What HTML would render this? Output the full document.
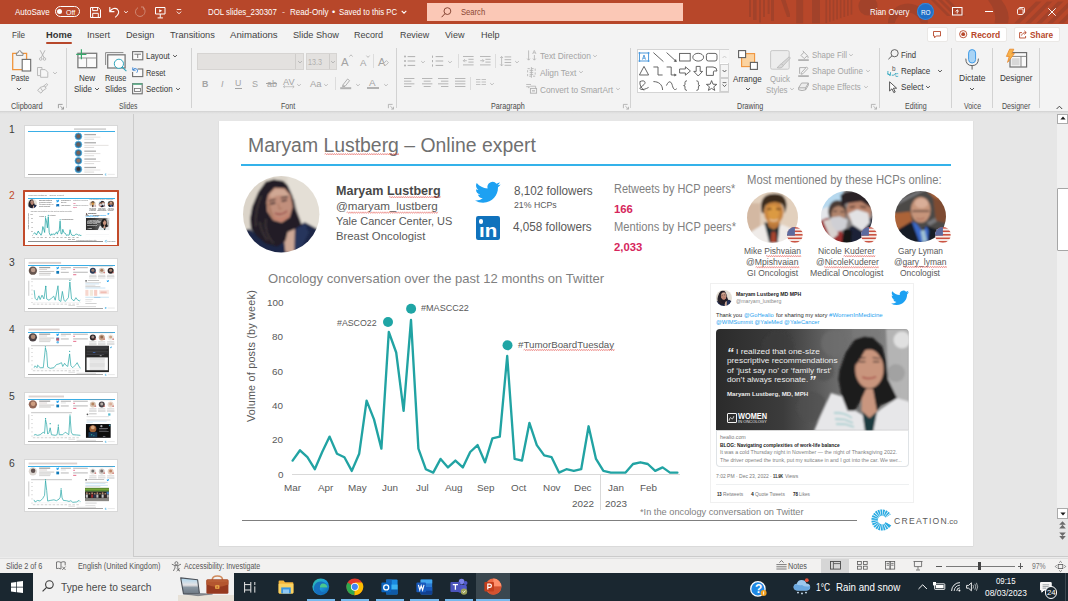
<!DOCTYPE html>
<html lang="en"><head><meta charset="utf-8"><title>DOL slides_230307 - PowerPoint</title>
<style>
html,body{margin:0;padding:0;}
body{width:1068px;height:601px;overflow:hidden;position:relative;background:#e6e6e6;font-family:"Liberation Sans",sans-serif;}
.t{position:absolute;white-space:nowrap;line-height:1;transform-origin:0 50%;}
.r{position:absolute;display:block;}
svg{overflow:visible;}
.th .t{-webkit-text-stroke:0.5px currentColor;opacity:0.72;}
</style></head>
<body>
<div class="r" style="left:0px;top:112px;width:1068px;height:446px;background:#e6e6e6;"></div>
<div class="r" style="left:0px;top:0px;width:1068px;height:23.5px;background:#b7472a;"></div>
<div class="r" style="left:0px;top:23.5px;width:1068px;height:88px;background:#f3f3f3;"></div>
<div class="r" style="left:0px;top:111.3px;width:1068px;height:3px;background:linear-gradient(#cfcfcf,#dcdcdc 35%,#e6e6e6);"></div>
<div class="r" style="left:133.2px;top:114px;width:1px;height:443px;background:#cbcbcb;"></div>
<div class="r" style="left:133.2px;top:556px;width:935px;height:0.9px;background:#cbcbcb;"></div>
<div class="r" style="left:0px;top:557px;width:1068px;height:1.6px;background:#ececec;"></div>
<div class="r" style="left:219px;top:121.2px;width:754.2px;height:425px;background:#fff;box-shadow:0 0.4px 0 0.4px #d8d8d8"></div>
<div class="r" style="left:1057px;top:113.5px;width:11px;height:395px;background:#f0f0f0;"></div>
<div class="r" style="left:1057.3px;top:113.5px;width:11px;height:10.2px;background:#fff;border:0.8px solid #ababab;box-sizing:border-box"></div>
<svg class="r" style="left:1059.6px;top:116.4px;" width="6" height="4" viewBox="0 0 6 4"><path d="M0.4 3.6 L3 0.6 L5.6 3.6 Z" fill="#1a1a1a"/></svg>
<div class="r" style="left:1057.3px;top:187.5px;width:11.5px;height:63.6px;background:#fff;border:0.9px solid #a6a6a6;box-sizing:border-box;border-radius:1px"></div>
<div class="r" style="left:1057.3px;top:508.2px;width:11px;height:10.6px;background:#fff;border:0.8px solid #ababab;box-sizing:border-box"></div>
<svg class="r" style="left:1059.6px;top:511.6px;" width="6" height="4" viewBox="0 0 6 4"><path d="M0.4 0.4 L3 3.4 L5.6 0.4 Z" fill="#1a1a1a"/></svg>
<svg class="r" style="left:1059.3px;top:521.4px;" width="7" height="7.6" viewBox="0 0 7 7.6"><path d="M0.2 3.8 L3.5 0.2 L6.8 3.8 Z M0.2 7.4 L3.5 3.8 L6.8 7.4 Z" fill="#6a6a6a"/></svg>
<svg class="r" style="left:1059.3px;top:532.4px;" width="7" height="8" viewBox="0 0 7 8"><path d="M0.2 0.4 L3.5 4 L6.8 0.4 Z M0.2 4 L3.5 7.8 L6.8 4 Z" fill="#6a6a6a"/></svg>
<div class="r" style="left:0px;top:558.5px;width:1068px;height:14.5px;background:#f2f1f0;"></div>
<div class="r" style="left:0px;top:558.3px;width:1068px;height:0.7px;background:#dedede;"></div>
<div class="r" style="left:0px;top:573px;width:1068px;height:28px;background:#1a2730;"></div>
<svg class="r" style="left:0;top:0" width="1068" height="23.5" viewBox="0 0 1068 23.5"><defs><clipPath id="tbc"><rect x="0" y="0" width="1068" height="23.5"/></clipPath></defs><g fill="#9f422b" opacity="0.85" clip-path="url(#tbc)"><rect x="749" y="0" width="2" height="17"/><rect x="753" y="0" width="3.6" height="20"/><rect x="759" y="0" width="2" height="22.5"/><rect x="763" y="0" width="2" height="17"/><rect x="767.6" y="0" width="2" height="14"/><rect x="771" y="0" width="3" height="21"/><path d="M781 0 H785.5 L790 14 V17 H787 Z"/><rect x="796.2" y="0" width="7" height="23.5"/><rect x="812" y="0" width="8" height="23.5"/><rect x="825.4" y="0" width="1.7" height="23.0"/><rect x="829" y="0" width="1.7" height="21.8"/><rect x="832.6" y="0" width="1.7" height="20.6"/><rect x="836.2" y="0" width="1.7" height="19.4"/><rect x="839.8" y="0" width="1.7" height="18.2"/><rect x="843.4" y="0" width="1.7" height="17.0"/><rect x="847" y="0" width="1.7" height="15.8"/><rect x="850.6" y="0" width="1.7" height="14.6"/><circle cx="868" cy="6" r="9.6"/><path d="M888 23.5 A 20 20 0 0 1 928 23.5 H 921 A 13.5 13.5 0 0 0 894.5 23.5 Z"/><path d="M931 0 H935 L951 16 H947 Z"/><path d="M938 0 H942 L958 16 H954 Z"/><path d="M945 0 H949 L965 16 H961 Z"/><path d="M988 0 H1001.5 Q1011 12 1008 23.5 H994.5 Q997.5 12 988 0 Z"/><path d="M1014 23.5 L1036 1.5 H1041.5 L1019.5 23.5 Z"/><path d="M1025 23.5 L1047 1.5 H1052.5 L1030.5 23.5 Z"/><path d="M1036 23.5 L1058 1.5 H1063.5 L1041.5 23.5 Z"/><path d="M1047 23.5 L1069 1.5 H1074.5 L1052.5 23.5 Z"/><path d="M1058 23.5 L1080 1.5 H1085.5 L1063.5 23.5 Z"/><path d="M1069 23.5 L1091 1.5 H1096.5 L1074.5 23.5 Z"/></g></svg>
<span class="t" style="left:14.50px;top:8px;font-size:9.1px;color:#fff;transform:matrix(0.8793,0.0001,0,1,0,0.10);">AutoSave</span>
<div class="r" style="left:54.5px;top:6.2px;width:25px;height:10.4px;border:1px solid #fff;border-radius:6px;box-sizing:border-box"></div>
<div class="r" style="left:57.3px;top:8.9px;width:5px;height:5px;border-radius:50%;background:#fff"></div>
<span class="t" style="left:66.30px;top:8px;font-size:7.8px;color:#fff;transform:matrix(0.9064,0.0001,0,1,0,0.70);">Off</span>
<svg class="r" style="left:89.5px;top:6.8px;" width="11" height="11" viewBox="0 0 11 11"><path d="M0.5 0.5 H8.3 L10.5 2.7 V10.5 H0.5 Z M2.7 0.5 V3.6 H7.6 V0.5 M2.7 10.5 V6.3 H8.3 V10.5" fill="none" stroke="#fff" stroke-width="1"/></svg>
<svg class="r" style="left:109px;top:6.3px;" width="11" height="12" viewBox="0 0 11 12"><path d="M0.8 1 V5.6 H5.4 M1 5.4 C3 2.3 6.3 1.6 8.4 3.3 C10.6 5.2 10.2 8.4 6.2 11.4" fill="none" stroke="#fff" stroke-width="1.1"/></svg>
<svg class="r" style="left:121.8px;top:7.800000000000001px" width="8" height="8" viewBox="-4 -4 8 8"><path d="M-1.8 -0.9 L0 0.9 L1.8 -0.9" fill="none" stroke="#fff" stroke-width="0.9"/></svg>
<svg class="r" style="left:135px;top:6.3px;" width="11" height="12" viewBox="0 0 11 12"><path d="M6 1 H8.6 V3.6 M8.4 1.4 C10.5 3.3 10.7 7.2 8 9.4 C5.6 11.3 2 10.4 0.8 7.6 C-0.1 5.2 1 2.8 3 1.7" fill="none" stroke="#d08a76" stroke-width="1"/></svg>
<svg class="r" style="left:155px;top:6.5px;" width="10.5" height="11.5" viewBox="0 0 10.5 11.5"><path d="M0.5 0.5 H10 V7 H0.5 Z M5.25 7 V10.6 M2.6 10.9 H7.9" fill="none" stroke="#fff" stroke-width="1"/><path d="M4.2 2.2 L7.2 3.8 L4.2 5.4 Z" fill="#fff"/></svg>
<svg class="r" style="left:176.3px;top:9.4px;" width="6" height="6" viewBox="0 0 6 6"><path d="M0.8 0.5 H5.2" stroke="#fff" stroke-width="0.9"/><path d="M0.8 2.6 L3 4.8 L5.2 2.6" fill="none" stroke="#fff" stroke-width="0.9"/></svg>
<span class="t" style="left:208.30px;top:8px;font-size:9.1px;color:#fff;transform:matrix(0.8656,0.0001,0,1,0,0.10);">DOL slides_230307</span>
<span class="t" style="left:282.20px;top:8px;font-size:9.1px;color:#f0cfc5;transform:matrix(1.0000,0.0001,0,1,0,0.10);">-</span>
<span class="t" style="left:289.60px;top:8px;font-size:9.1px;color:#fff;transform:matrix(0.8874,0.0001,0,1,0,0.10);">Read-Only</span>
<span class="t" style="left:331.50px;top:8px;font-size:9.1px;color:#fff;transform:matrix(1.0000,0.0001,0,1,0,0.10);">•</span>
<span class="t" style="left:338.80px;top:8px;font-size:9.1px;color:#fff;transform:matrix(0.8587,0.0001,0,1,0,0.10);">Saved to this PC</span>
<svg class="r" style="left:400.3px;top:8px" width="8" height="8" viewBox="-4 -4 8 8"><path d="M-2.3 -1.15 L0 1.15 L2.3 -1.15" fill="none" stroke="#fff" stroke-width="1.1"/></svg>
<div class="r" style="left:427px;top:3px;width:256px;height:18px;background:#fbc8b6;"></div>
<svg class="r" style="left:440.5px;top:6.5px;" width="10.5" height="11" viewBox="0 0 10.5 11"><circle cx="6.4" cy="4.1" r="3.4" fill="none" stroke="#7c3a28" stroke-width="0.9"/><path d="M4 6.6 L0.6 10.2" stroke="#7c3a28" stroke-width="1"/></svg>
<span class="t" style="left:460.80px;top:8px;font-size:9.1px;color:#8a4733;transform:matrix(0.8393,0.0001,0,1,0,0.10);">Search</span>
<span class="t" style="left:869.80px;top:8px;font-size:9.1px;color:#fff;transform:matrix(0.8657,0.0001,0,1,0,0.10);">Rian Overy</span>
<div class="r" style="left:916.8px;top:3.2px;width:17px;height:17px;border-radius:50%;background:#1f6fc6;box-shadow:inset 0 0 0 1px #3f86d2"></div>
<span class="t" style="left:920.60px;top:9px;font-size:6.8px;color:#fff;transform:matrix(0.9412,0.0001,0,1,0,0.60);">RO</span>
<svg class="r" style="left:951.5px;top:7.2px;" width="10.5" height="8.5" viewBox="0 0 10.5 8.5"><rect x="0.5" y="0.5" width="9.5" height="7.5" fill="none" stroke="#fff" stroke-width="1"/><path d="M5.25 6.4 V3 M3.6 4.5 L5.25 2.9 L6.9 4.5" fill="none" stroke="#fff" stroke-width="0.9"/></svg>
<div class="r" style="left:985.2px;top:11.1px;width:7.6px;height:1px;background:#fff;"></div>
<svg class="r" style="left:1016.6px;top:7.4px;" width="8" height="8" viewBox="0 0 8 8"><rect x="0.5" y="1.9" width="5.6" height="5.6" rx="1" fill="none" stroke="#fff" stroke-width="0.9"/><path d="M2 1.9 V1.4 Q2 0.5 3 0.5 H6.6 Q7.5 0.5 7.5 1.5 V5 Q7.5 6 6.5 6 H6.1" fill="none" stroke="#fff" stroke-width="0.9"/></svg>
<svg class="r" style="left:1048.4px;top:7.6px;" width="8" height="8" viewBox="0 0 8 8"><path d="M0.3 0.3 L7.7 7.7 M7.7 0.3 L0.3 7.7" stroke="#fff" stroke-width="0.95"/></svg>
<span class="t" style="left:11.80px;top:30px;font-size:9.4px;color:#444;transform:matrix(0.8715,0.0001,0,1,0,0.00);">File</span>
<span class="t" style="left:87.00px;top:30px;font-size:9.4px;color:#444;transform:matrix(0.9868,0.0001,0,1,0,0.00);">Insert</span>
<span class="t" style="left:126.00px;top:30px;font-size:9.4px;color:#444;transform:matrix(0.9740,0.0001,0,1,0,0.00);">Design</span>
<span class="t" style="left:170.00px;top:30px;font-size:9.4px;color:#444;transform:matrix(0.9863,0.0001,0,1,0,0.00);">Transitions</span>
<span class="t" style="left:230.00px;top:30px;font-size:9.4px;color:#444;transform:matrix(1.0280,0.0001,0,1,0,0.00);">Animations</span>
<span class="t" style="left:292.80px;top:30px;font-size:9.4px;color:#444;transform:matrix(0.9781,0.0001,0,1,0,0.00);">Slide Show</span>
<span class="t" style="left:354.00px;top:30px;font-size:9.4px;color:#444;transform:matrix(0.9636,0.0001,0,1,0,0.00);">Record</span>
<span class="t" style="left:399.50px;top:30px;font-size:9.4px;color:#444;transform:matrix(0.9474,0.0001,0,1,0,0.00);">Review</span>
<span class="t" style="left:445.00px;top:30px;font-size:9.4px;color:#444;transform:matrix(0.9651,0.0001,0,1,0,0.00);">View</span>
<span class="t" style="left:480.80px;top:30px;font-size:9.4px;color:#444;transform:matrix(0.9673,0.0001,0,1,0,0.00);">Help</span>
<span class="t" style="left:46.00px;top:30px;font-size:9.4px;color:#333;transform:matrix(0.9955,0.0001,0,1,0,0.00);font-weight:700;">Home</span>
<div class="r" style="left:46px;top:42.2px;width:26px;height:1.8px;background:#b7472a;border-radius:1px"></div>
<div class="r" style="left:926.8px;top:27px;width:21px;height:15px;background:#fff;border:0.8px solid #eae8e6;border-radius:2px;box-sizing:border-box"></div>
<svg class="r" style="left:933.4px;top:30.6px;" width="8" height="7.6" viewBox="0 0 8 7.6"><path d="M0.5 0.5 H7.5 V5 H3.2 L1.6 6.8 V5 H0.5 Z" fill="none" stroke="#b7472a" stroke-width="0.9"/></svg>
<div class="r" style="left:954.8px;top:27px;width:52px;height:15px;background:#fff;border:0.8px solid #eae8e6;border-radius:2px;box-sizing:border-box"></div>
<svg class="r" style="left:959.4px;top:30.3px;" width="8.4" height="8.4" viewBox="0 0 8.4 8.4"><circle cx="4.2" cy="4.2" r="3.6" fill="none" stroke="#b7472a" stroke-width="0.9"/><circle cx="4.2" cy="4.2" r="1.9" fill="#b7472a"/></svg>
<span class="t" style="left:971.00px;top:30px;font-size:9.4px;color:#b7472a;transform:matrix(0.9047,0.0001,0,1,0,0.00);font-weight:700;">Record</span>
<div class="r" style="left:1013.5px;top:27px;width:46.3px;height:15px;background:#fff;border:0.8px solid #eae8e6;border-radius:2px;box-sizing:border-box"></div>
<svg class="r" style="left:1018.6px;top:30.2px;" width="8.4" height="8.6" viewBox="0 0 8.4 8.6"><path d="M3 2.6 H0.6 V8 H6.6 V6" fill="none" stroke="#b7472a" stroke-width="0.9"/><path d="M2.6 5.6 C3 3.6 4.6 2.6 7 2.6 M5.3 0.8 L7.3 2.6 L5.3 4.4" fill="none" stroke="#b7472a" stroke-width="0.9"/></svg>
<span class="t" style="left:1029.80px;top:30px;font-size:9.4px;color:#b7472a;transform:matrix(0.8880,0.0001,0,1,0,0.00);font-weight:700;">Share</span>
<svg class="r" style="left:12px;top:49.6px;" width="19.4" height="21.6" viewBox="0 0 19.4 21.6"><path d="M4.6 3.4 H0.7 V19.6 H10" fill="none" stroke="#f0943c" stroke-width="1.3"/><path d="M10.6 3.4 H14.6 V9" fill="none" stroke="#f0943c" stroke-width="1.3"/><path d="M4.4 5.4 V3 H6 Q6 0.7 7.7 0.7 Q9.4 0.7 9.4 3 H11 V5.4 Z" fill="#f8f8f8" stroke="#7a7a7a" stroke-width="0.9"/><rect x="10.2" y="9.4" width="8.5" height="11.6" fill="#fff" stroke="#6a6a6a" stroke-width="1.1"/></svg>
<span class="t" style="left:11.00px;top:74px;font-size:8.6px;color:#383838;transform:matrix(0.8276,0.0001,0,1,0,0.30);">Paste</span>
<svg class="r" style="left:15.399999999999999px;top:84.6px" width="8" height="8" viewBox="-4 -4 8 8"><path d="M-2.1 -1.05 L0 1.05 L2.1 -1.05" fill="none" stroke="#555" stroke-width="1"/></svg>
<svg class="r" style="left:38.8px;top:50.4px;" width="7.2" height="10.8" viewBox="0 0 7.2 10.8"><path d="M1.2 0.3 L5.2 8 M6 0.3 L2 8" fill="none" stroke="#b0b0b0" stroke-width="0.9"/><circle cx="1.7" cy="9" r="1.3" fill="none" stroke="#b0b0b0" stroke-width="0.8"/><circle cx="5.5" cy="9" r="1.3" fill="none" stroke="#b0b0b0" stroke-width="0.8"/></svg>
<svg class="r" style="left:36.8px;top:67px;" width="11.4" height="10.8" viewBox="0 0 11.4 10.8"><path d="M3.4 8.6 H0.5 V0.5 H5 V2.4" fill="none" stroke="#b4b4b4" stroke-width="0.9"/><path d="M3.6 2.6 H8.2 L10.8 5.2 V10.3 H3.6 Z" fill="#f6f6f6" stroke="#b4b4b4" stroke-width="0.9"/></svg>
<svg class="r" style="left:50.8px;top:68.6px" width="8" height="8" viewBox="-4 -4 8 8"><path d="M-1.9 -0.95 L0 0.95 L1.9 -0.95" fill="none" stroke="#b8b8b8" stroke-width="0.9"/></svg>
<svg class="r" style="left:37.2px;top:83px;" width="11.4" height="10.8" viewBox="0 0 11.4 10.8"><path d="M6.4 3.2 L9.8 0.6 L10.8 1.8 L7.8 4.6 M3.2 4.4 L7.6 3 L9.2 5.4 L5.6 8 Z M3.2 4.6 L0.6 7.4 L4 10.2 L5.8 8" fill="none" stroke="#b4b4b4" stroke-width="0.9"/></svg>
<span class="t" style="left:11.30px;top:102px;font-size:8.6px;color:#4c4c4c;transform:matrix(0.8612,0.0001,0,1,0,0.00);">Clipboard</span>
<svg class="r" style="left:58.1px;top:103.5px;" width="6" height="5.4" viewBox="0 0 6 5.4"><path d="M0.4 4.2 V0.4 H4.6" fill="none" stroke="#8a8a8a" stroke-width="0.8"/><path d="M2.4 2.2 L5.4 5 M5.5 2.8 V5.1 H3.2" fill="none" stroke="#8a8a8a" stroke-width="0.8"/></svg>
<div class="r" style="left:66.0px;top:48.2px;width:1px;height:60.2px;background:#d2d2d2;"></div>
<svg class="r" style="left:75.6px;top:48.6px;" width="21.4" height="19.4" viewBox="0 0 21.4 19.4"><rect x="1.9" y="4.3" width="18.8" height="14.4" fill="#fafafa" stroke="#7a7a7a" stroke-width="1.3"/><path d="M2 9 H20.6 M10.6 9 V18.6" stroke="#8a8a8a" stroke-width="0.9" fill="none"/><rect x="0" y="0" width="10.6" height="10.4" fill="#f3f3f3" opacity="0.0"/><path d="M5.4 0.3 V10.2 M0.2 5.4 H10.4" stroke="#36a86b" stroke-width="1.2" fill="none"/></svg>
<span class="t" style="left:78.90px;top:74px;font-size:8.6px;color:#383838;transform:matrix(0.9416,0.0001,0,1,0,0.30);">New</span>
<span class="t" style="left:73.80px;top:85px;font-size:8.6px;color:#383838;transform:matrix(0.9360,0.0001,0,1,0,0.30);">Slide</span>
<svg class="r" style="left:92.5px;top:84.6px" width="8" height="8" viewBox="-4 -4 8 8"><path d="M-2 -1.0 L0 1.0 L2 -1.0" fill="none" stroke="#555" stroke-width="1"/></svg>
<svg class="r" style="left:105.4px;top:51.6px;" width="22" height="19.6" viewBox="0 0 22 19.6"><path d="M0.6 13 V0.6 H18.4" fill="none" stroke="#8a8a8a" stroke-width="1"/><rect x="2.7" y="2.8" width="17.4" height="13.2" fill="#fafafa" stroke="#7a7a7a" stroke-width="1.3"/><circle cx="13.9" cy="11.8" r="4.6" fill="#fff" stroke="#2ea6bd" stroke-width="1"/><path d="M17.2 15.2 L21.4 19.2" stroke="#2ea6bd" stroke-width="1.1"/></svg>
<span class="t" style="left:104.90px;top:74px;font-size:8.6px;color:#383838;transform:matrix(0.8568,0.0001,0,1,0,0.30);">Reuse</span>
<span class="t" style="left:104.90px;top:85px;font-size:8.6px;color:#383838;transform:matrix(0.9093,0.0001,0,1,0,0.30);">Slides</span>
<svg class="r" style="left:132.2px;top:50.5px;" width="11.4" height="9.4" viewBox="0 0 11.4 9.4"><rect x="0.6" y="0.6" width="10.2" height="8.2" fill="#fafafa" stroke="#6e6e6e" stroke-width="1.1"/><path d="M2.4 3.2 H9 M5.7 3.2 V7" stroke="#6e6e6e" stroke-width="0.9" fill="none"/></svg>
<span class="t" style="left:146.30px;top:52px;font-size:8.6px;color:#383838;transform:matrix(0.9217,0.0001,0,1,0,0.10);">Layout</span>
<svg class="r" style="left:171px;top:51.6px" width="8" height="8" viewBox="-4 -4 8 8"><path d="M-1.9 -0.95 L0 0.95 L1.9 -0.95" fill="none" stroke="#555" stroke-width="1"/></svg>
<svg class="r" style="left:132.2px;top:66.6px;" width="11.4" height="10.2" viewBox="0 0 11.4 10.2"><rect x="0.6" y="2" width="10.2" height="7.6" fill="#fafafa" stroke="#6e6e6e" stroke-width="1.1"/><rect x="0" y="0" width="5.6" height="5" fill="#f3f3f3"/><path d="M0.8 0.4 V3.2 H3.6 M1 3 C2 1 4.6 1 5.4 3 C5.8 4.2 5.4 5 4.6 5.8" fill="none" stroke="#2b7cd3" stroke-width="0.9"/></svg>
<span class="t" style="left:146.30px;top:68px;font-size:8.6px;color:#383838;transform:matrix(0.8635,0.0001,0,1,0,0.50);">Reset</span>
<svg class="r" style="left:132.2px;top:83.4px;" width="10.8" height="11.4" viewBox="0 0 10.8 11.4"><rect x="0.6" y="0.6" width="9.6" height="10.2" fill="#fafafa" stroke="#6e6e6e" stroke-width="1.1"/><rect x="0.4" y="0.3" width="10" height="1.6" fill="#5fae8a"/><rect x="2.4" y="5.4" width="6" height="3.2" fill="none" stroke="#6e6e6e" stroke-width="0.8"/></svg>
<span class="t" style="left:146.30px;top:85px;font-size:8.6px;color:#383838;transform:matrix(0.9308,0.0001,0,1,0,0.30);">Section</span>
<svg class="r" style="left:173.7px;top:84.6px" width="8" height="8" viewBox="-4 -4 8 8"><path d="M-1.9 -0.95 L0 0.95 L1.9 -0.95" fill="none" stroke="#555" stroke-width="1"/></svg>
<span class="t" style="left:119.30px;top:102px;font-size:8.6px;color:#4c4c4c;transform:matrix(0.7898,0.0001,0,1,0,0.00);">Slides</span>
<div class="r" style="left:191.0px;top:48.2px;width:1px;height:60.2px;background:#d2d2d2;"></div>
<div class="r" style="left:197px;top:53px;width:107px;height:16.6px;background:#e3e1df;border:0.8px solid #d6d4d2;box-sizing:border-box"></div>
<div class="r" style="left:295.4px;top:53.6px;width:0.8px;height:15.4px;background:#cfcdcb;"></div>
<svg class="r" style="left:295.8px;top:57.6px" width="8" height="8" viewBox="-4 -4 8 8"><path d="M-1.9 -0.95 L0 0.95 L1.9 -0.95" fill="none" stroke="#b0b0b0" stroke-width="0.9"/></svg>
<div class="r" style="left:305.8px;top:53px;width:31.4px;height:16.6px;background:#e3e1df;border:0.8px solid #d6d4d2;box-sizing:border-box"></div>
<div class="r" style="left:328.8px;top:53.6px;width:0.8px;height:15.4px;background:#cfcdcb;"></div>
<span class="t" style="left:308.00px;top:57px;font-size:8.3px;color:#b2b0ae;transform:matrix(0.8666,0.0001,0,1,0,0.80);">13.3</span>
<svg class="r" style="left:329px;top:57.6px" width="8" height="8" viewBox="-4 -4 8 8"><path d="M-1.9 -0.95 L0 0.95 L1.9 -0.95" fill="none" stroke="#b0b0b0" stroke-width="0.9"/></svg>
<span class="t" style="left:341.40px;top:56px;font-size:11.4px;color:#a4a4a4;transform:matrix(1.0000,0.0001,0,1,0,0.60);">A</span>
<svg class="r" style="left:349px;top:53.6px;" width="4" height="3" viewBox="0 0 4 3"><path d="M0.4 2.6 L2 0.8 L3.6 2.6" fill="none" stroke="#b0b0b0" stroke-width="0.8"/></svg>
<span class="t" style="left:359.60px;top:57px;font-size:9.6px;color:#a4a4a4;transform:matrix(1.0000,0.0001,0,1,0,0.60);">A</span>
<svg class="r" style="left:366px;top:55.4px;" width="4" height="3" viewBox="0 0 4 3"><path d="M0.4 0.6 L2 2.4 L3.6 0.6" fill="none" stroke="#b0b0b0" stroke-width="0.8"/></svg>
<div class="r" style="left:372.8px;top:54px;width:1px;height:14.400000000000006px;background:#dcdcdc;"></div>
<span class="t" style="left:378.20px;top:56px;font-size:11.2px;color:#a4a4a4;transform:matrix(1.0000,0.0001,0,1,0,0.60);">A</span>
<svg class="r" style="left:383.4px;top:60.4px;" width="6" height="6" viewBox="0 0 6 6"><path d="M0.6 3.6 L3.4 0.6 L5.4 2.6 L2.8 5.4 Z" fill="#f3f3f3" stroke="#b0b0b0" stroke-width="0.8"/></svg>
<span class="t" style="left:202.00px;top:79px;font-size:8.8px;color:#a4a4a4;transform:matrix(1.0000,0.0001,0,1,0,0.60);font-weight:700;">B</span>
<span class="t" style="left:220.60px;top:79px;font-size:9px;color:#a4a4a4;transform:matrix(1.0000,0.0001,0,1,0,0.60);font-style:italic;font-family:"Liberation Serif",serif;">I</span>
<span class="t" style="left:235.20px;top:79px;font-size:8.8px;color:#a4a4a4;transform:matrix(1.0000,0.0001,0,1,0,0.20);">U</span>
<div class="r" style="left:235px;top:87.6px;width:6.6px;height:0.8px;background:#a4a4a4;"></div>
<span class="t" style="left:251.60px;top:79px;font-size:9px;color:#a4a4a4;transform:matrix(1.0000,0.0001,0,1,0,0.60);">S</span>
<span class="t" style="left:266.60px;top:79px;font-size:9px;color:#a4a4a4;transform:matrix(1.0000,0.0001,0,1,0,0.90);">ab</span>
<div class="r" style="left:266px;top:83.4px;width:11px;height:0.8px;background:#a4a4a4;"></div>
<span class="t" style="left:282.60px;top:77px;font-size:8.6px;color:#a4a4a4;transform:matrix(1.0707,0.0001,0,1,0,0.80);">AV</span>
<svg class="r" style="left:282.6px;top:85.2px;" width="11.6" height="3.4" viewBox="0 0 11.6 3.4"><path d="M0.4 1.7 H11.2 M2 0.3 L0.5 1.7 L2 3.1 M9.6 0.3 L11.1 1.7 L9.6 3.1" fill="none" stroke="#b0b0b0" stroke-width="0.7"/></svg>
<svg class="r" style="left:295.4px;top:80.6px" width="8" height="8" viewBox="-4 -4 8 8"><path d="M-1.8 -0.9 L0 0.9 L1.8 -0.9" fill="none" stroke="#b8b8b8" stroke-width="0.9"/></svg>
<span class="t" style="left:309.80px;top:79px;font-size:9px;color:#a4a4a4;transform:matrix(1.0537,0.0001,0,1,0,0.80);">Aa</span>
<svg class="r" style="left:322.3px;top:80.6px" width="8" height="8" viewBox="-4 -4 8 8"><path d="M-1.8 -0.9 L0 0.9 L1.8 -0.9" fill="none" stroke="#b8b8b8" stroke-width="0.9"/></svg>
<div class="r" style="left:335.1px;top:77px;width:1px;height:13px;background:#dcdcdc;"></div>
<svg class="r" style="left:340px;top:77.6px;" width="11.4" height="11.4" viewBox="0 0 11.4 11.4"><path d="M3 6.8 L7.6 1 L9.6 2.6 L5 8.4 Z M3 6.8 L2.4 8.6 L5 8.4" fill="none" stroke="#a8a8a8" stroke-width="0.9"/><rect x="0.2" y="9.2" width="11" height="2" fill="#b2b2b2"/></svg>
<svg class="r" style="left:354px;top:80.6px" width="8" height="8" viewBox="-4 -4 8 8"><path d="M-1.8 -0.9 L0 0.9 L1.8 -0.9" fill="none" stroke="#b8b8b8" stroke-width="0.9"/></svg>
<span class="t" style="left:369.40px;top:78px;font-size:9.8px;color:#a4a4a4;transform:matrix(1.0000,0.0001,0,1,0,0.00);">A</span>
<div class="r" style="left:367.4px;top:87.2px;width:11.4px;height:2px;background:#b2b2b2;"></div>
<svg class="r" style="left:381.6px;top:80.6px" width="8" height="8" viewBox="-4 -4 8 8"><path d="M-1.8 -0.9 L0 0.9 L1.8 -0.9" fill="none" stroke="#b8b8b8" stroke-width="0.9"/></svg>
<span class="t" style="left:280.80px;top:102px;font-size:8.6px;color:#4c4c4c;transform:matrix(0.8252,0.0001,0,1,0,0.00);">Font</span>
<svg class="r" style="left:387.6px;top:103.5px;" width="6" height="5.4" viewBox="0 0 6 5.4"><path d="M0.4 4.2 V0.4 H4.6" fill="none" stroke="#a8a8a8" stroke-width="0.8"/><path d="M2.4 2.2 L5.4 5 M5.5 2.8 V5.1 H3.2" fill="none" stroke="#a8a8a8" stroke-width="0.8"/></svg>
<div class="r" style="left:396.0px;top:48.2px;width:1px;height:60.2px;background:#d2d2d2;"></div>
<svg class="r" style="left:404.4px;top:55.4px;" width="12" height="12" viewBox="0 0 12 12"><circle cx="1" cy="1.6" r="1" fill="#b0b0b0"/><rect x="3.6" y="1.1" width="7.6" height="1" fill="#b0b0b0"/><circle cx="1" cy="6.0" r="1" fill="#b0b0b0"/><rect x="3.6" y="5.5" width="7.6" height="1" fill="#b0b0b0"/><circle cx="1" cy="10.4" r="1" fill="#b0b0b0"/><rect x="3.6" y="9.9" width="7.6" height="1" fill="#b0b0b0"/></svg>
<svg class="r" style="left:418.5px;top:58px" width="8" height="8" viewBox="-4 -4 8 8"><path d="M-1.8 -0.9 L0 0.9 L1.8 -0.9" fill="none" stroke="#b8b8b8" stroke-width="0.9"/></svg>
<svg class="r" style="left:431.6px;top:55.4px;" width="12" height="12" viewBox="0 0 12 12"><rect x="0" y="0.6" width="1" height="2.2" fill="#b0b0b0"/><rect x="3.6" y="1.1" width="7.6" height="1" fill="#b0b0b0"/><rect x="0" y="5.0" width="1" height="2.2" fill="#b0b0b0"/><rect x="3.6" y="5.5" width="7.6" height="1" fill="#b0b0b0"/><rect x="0" y="9.4" width="1" height="2.2" fill="#b0b0b0"/><rect x="3.6" y="9.9" width="7.6" height="1" fill="#b0b0b0"/></svg>
<svg class="r" style="left:446px;top:58px" width="8" height="8" viewBox="-4 -4 8 8"><path d="M-1.8 -0.9 L0 0.9 L1.8 -0.9" fill="none" stroke="#b8b8b8" stroke-width="0.9"/></svg>
<div class="r" style="left:457.8px;top:54px;width:1px;height:14.400000000000006px;background:#dcdcdc;"></div>
<svg class="r" style="left:463.2px;top:56.4px;" width="11" height="9.6" viewBox="0 0 11 9.6"><path d="M0 0.5 H10.6 M5.4 3.3 H10.6 M5.4 6.1 H10.6 M0 8.9 H10.6" stroke="#b0b0b0" stroke-width="0.9"/><path d="M3.8 4.7 H0.4 M1.8 3.2 L0.3 4.7 L1.8 6.2" fill="none" stroke="#b0b0b0" stroke-width="0.8"/></svg>
<svg class="r" style="left:480px;top:56.4px;" width="11" height="9.6" viewBox="0 0 11 9.6"><path d="M0 0.5 H10.6 M5.4 3.3 H10.6 M5.4 6.1 H10.6 M0 8.9 H10.6" stroke="#b0b0b0" stroke-width="0.9"/><path d="M0.2 4.7 H3.8 M2.4 3.2 L3.9 4.7 L2.4 6.2" fill="none" stroke="#b0b0b0" stroke-width="0.8"/></svg>
<div class="r" style="left:495.0px;top:54px;width:1px;height:14.400000000000006px;background:#dcdcdc;"></div>
<svg class="r" style="left:500px;top:56px;" width="11.4" height="10.4" viewBox="0 0 11.4 10.4"><path d="M4.6 0.9 H11.2 M4.6 3.7 H11.2 M4.6 6.5 H11.2 M4.6 9.3 H11.2" stroke="#b0b0b0" stroke-width="0.9"/><path d="M1.6 0.6 V9.8 M0.2 2 L1.6 0.5 L3 2 M0.2 8.4 L1.6 9.9 L3 8.4" fill="none" stroke="#b0b0b0" stroke-width="0.8"/></svg>
<svg class="r" style="left:512.8px;top:58px" width="8" height="8" viewBox="-4 -4 8 8"><path d="M-1.8 -0.9 L0 0.9 L1.8 -0.9" fill="none" stroke="#b8b8b8" stroke-width="0.9"/></svg>
<svg class="r" style="left:404.4px;top:77.8px;" width="12" height="12" viewBox="0 0 12 12"><rect x="0" y="0.0" width="10.4" height="0.9" fill="#b0b0b0"/><rect x="0" y="2.7" width="7.4" height="0.9" fill="#b0b0b0"/><rect x="0" y="5.4" width="10.4" height="0.9" fill="#b0b0b0"/><rect x="0" y="8.100000000000001" width="7.4" height="0.9" fill="#b0b0b0"/></svg>
<svg class="r" style="left:421.8px;top:77.8px;" width="12" height="12" viewBox="0 0 12 12"><rect x="0" y="0.0" width="10.4" height="0.9" fill="#b0b0b0"/><rect x="1.7" y="2.7" width="7" height="0.9" fill="#b0b0b0"/><rect x="0" y="5.4" width="10.4" height="0.9" fill="#b0b0b0"/><rect x="1.7" y="8.100000000000001" width="7" height="0.9" fill="#b0b0b0"/></svg>
<svg class="r" style="left:438.2px;top:77.8px;" width="12" height="12" viewBox="0 0 12 12"><rect x="0" y="0.0" width="10.4" height="0.9" fill="#b0b0b0"/><rect x="3" y="2.7" width="7.4" height="0.9" fill="#b0b0b0"/><rect x="0" y="5.4" width="10.4" height="0.9" fill="#b0b0b0"/><rect x="3" y="8.100000000000001" width="7.4" height="0.9" fill="#b0b0b0"/></svg>
<svg class="r" style="left:455px;top:77.8px;" width="12" height="12" viewBox="0 0 12 12"><rect x="0" y="0.0" width="10.4" height="0.9" fill="#b0b0b0"/><rect x="0" y="2.7" width="10.4" height="0.9" fill="#b0b0b0"/><rect x="0" y="5.4" width="10.4" height="0.9" fill="#b0b0b0"/><rect x="0" y="8.100000000000001" width="10.4" height="0.9" fill="#b0b0b0"/></svg>
<div class="r" style="left:470.3px;top:77px;width:1px;height:13px;background:#dcdcdc;"></div>
<svg class="r" style="left:476.2px;top:79.4px;" width="10.2" height="7" viewBox="0 0 10.2 7"><path d="M0 0.5 H4.4 M5.6 0.5 H10 M0 3 H4.4 M5.6 3 H10 M0 5.5 H4.4 M5.6 5.5 H10" stroke="#bcbcbc" stroke-width="0.9"/></svg>
<svg class="r" style="left:487.8px;top:80.4px" width="8" height="8" viewBox="-4 -4 8 8"><path d="M-1.8 -0.9 L0 0.9 L1.8 -0.9" fill="none" stroke="#b8b8b8" stroke-width="0.9"/></svg>
<svg class="r" style="left:527px;top:49.8px;" width="9.6" height="11" viewBox="0 0 9.6 11"><path d="M1.6 0.4 V10 M0.2 8.6 L1.6 10.2 L3 8.6 M7.4 5 V10 M6 8.6 L7.4 10.2 L8.8 8.6" fill="none" stroke="#b0b0b0" stroke-width="0.8"/><path d="M5.6 4 L7.3 0.4 L9 4 M6.2 2.8 H8.4" fill="none" stroke="#b0b0b0" stroke-width="0.7"/></svg>
<span class="t" style="left:539.50px;top:52px;font-size:8.6px;color:#a4a4a4;transform:matrix(0.9790,0.0001,0,1,0,0.00);">Text Direction</span>
<svg class="r" style="left:591px;top:51.6px" width="8" height="8" viewBox="-4 -4 8 8"><path d="M-1.8 -0.9 L0 0.9 L1.8 -0.9" fill="none" stroke="#b8b8b8" stroke-width="0.9"/></svg>
<svg class="r" style="left:526.4px;top:66.8px;" width="10.8" height="10.8" viewBox="0 0 10.8 10.8"><rect x="1.6" y="1.6" width="7.6" height="7.6" fill="none" stroke="#b0b0b0" stroke-width="0.8" stroke-dasharray="2.2 1.6"/><path d="M5.4 0 V10.8 M3.6 3.4 H7.2 M3.6 5.4 H7.2 M3.6 7.4 H7.2" stroke="#b0b0b0" stroke-width="0.8" fill="none"/></svg>
<span class="t" style="left:539.50px;top:68px;font-size:8.6px;color:#a4a4a4;transform:matrix(0.9777,0.0001,0,1,0,0.60);">Align Text</span>
<svg class="r" style="left:576.8px;top:68px" width="8" height="8" viewBox="-4 -4 8 8"><path d="M-1.8 -0.9 L0 0.9 L1.8 -0.9" fill="none" stroke="#b8b8b8" stroke-width="0.9"/></svg>
<svg class="r" style="left:526.4px;top:84.4px;" width="11" height="9.6" viewBox="0 0 11 9.6"><path d="M0.2 0.5 H5 M0.2 2.7 H3.4" stroke="#b0b0b0" stroke-width="0.8"/><path d="M2 4 L4.6 2.2 H9.6 V4.4" fill="none" stroke="#b0b0b0" stroke-width="0.8"/><rect x="4.4" y="4.4" width="6.2" height="4.8" fill="none" stroke="#b0b0b0" stroke-width="0.9"/><rect x="6" y="6" width="3" height="1.6" fill="#c4c4c4"/></svg>
<span class="t" style="left:539.50px;top:85px;font-size:8.6px;color:#a4a4a4;transform:matrix(0.9607,0.0001,0,1,0,0.50);">Convert to SmartArt</span>
<svg class="r" style="left:613.5px;top:84.6px" width="8" height="8" viewBox="-4 -4 8 8"><path d="M-1.8 -0.9 L0 0.9 L1.8 -0.9" fill="none" stroke="#b8b8b8" stroke-width="0.9"/></svg>
<span class="t" style="left:490.80px;top:102px;font-size:8.6px;color:#4c4c4c;transform:matrix(0.8391,0.0001,0,1,0,0.00);">Paragraph</span>
<svg class="r" style="left:622.5px;top:103.5px;" width="6" height="5.4" viewBox="0 0 6 5.4"><path d="M0.4 4.2 V0.4 H4.6" fill="none" stroke="#a8a8a8" stroke-width="0.8"/><path d="M2.4 2.2 L5.4 5 M5.5 2.8 V5.1 H3.2" fill="none" stroke="#a8a8a8" stroke-width="0.8"/></svg>
<div class="r" style="left:630.0px;top:48.2px;width:1px;height:60.2px;background:#d2d2d2;"></div>
<div class="r" style="left:636.8px;top:49.2px;width:92.7px;height:43.4px;background:#fff;border:0.8px solid #d4d4d4;box-sizing:border-box"></div>
<div class="r" style="left:719.4px;top:49.8px;width:0.8px;height:42.2px;background:#dcdcdc;"></div>
<div class="r" style="left:720.2px;top:50px;width:8.6px;height:13.4px;background:#f6f6f6;"></div>
<div class="r" style="left:720.2px;top:64.2px;width:8.6px;height:13.4px;background:#f4f4f4;border:0.6px solid #cfcfcf;box-sizing:border-box"></div>
<div class="r" style="left:720.2px;top:78.4px;width:8.6px;height:13.6px;background:#f4f4f4;border:0.6px solid #cfcfcf;box-sizing:border-box"></div>
<svg class="r" style="left:722px;top:54.6px;" width="5" height="4" viewBox="0 0 5 4"><path d="M0.6 3 L2.5 1 L4.4 3" fill="none" stroke="#c4c4c4" stroke-width="0.8"/></svg>
<svg class="r" style="left:722px;top:68.8px;" width="5" height="4" viewBox="0 0 5 4"><path d="M0.6 1 L2.5 3 L4.4 1" fill="none" stroke="#555" stroke-width="0.9"/></svg>
<svg class="r" style="left:722px;top:82px;" width="5" height="6" viewBox="0 0 5 6"><path d="M0.6 0.6 H4.4" stroke="#555" stroke-width="0.8"/><path d="M0.6 2.6 L2.5 4.6 L4.4 2.6" fill="none" stroke="#555" stroke-width="0.9"/></svg>
<svg class="r" style="left:637.1px;top:49.6px;" width="82" height="43.4" viewBox="0 0 82 43.4"><rect x="2.4" y="3" width="9.2" height="8" fill="#fff" stroke="#3b8ed6" stroke-width="0.9"/><path d="M5.4 9.6 L7 5 L8.6 9.6 M6 8.2 H8" fill="none" stroke="#3b8ed6" stroke-width="0.8"/><g fill="#4a9ae0"><circle cx="2.4" cy="3" r="0.9"/><circle cx="11.6" cy="3" r="0.9"/><circle cx="2.4" cy="11" r="0.9"/><circle cx="11.6" cy="11" r="0.9"/></g><path d="M16.4 2.6 L26.4 11.6" stroke="#555" stroke-width="0.9"/><path d="M29.6 2.6 L39 11.2" stroke="#555" stroke-width="0.9"/><path d="M39.8 12 L36.6 11.4 L39 9 Z" fill="#555"/><rect x="42.6" y="3.4" width="10.6" height="7.6" fill="none" stroke="#555" stroke-width="0.9"/><ellipse cx="61.2" cy="7.2" rx="5.4" ry="3.9" fill="none" stroke="#555" stroke-width="0.9"/><rect x="69.4" y="3.4" width="10.6" height="7.6" rx="2" fill="none" stroke="#555" stroke-width="0.9"/><path d="M7 16.4 L11.6 25 H2.4 Z" fill="none" stroke="#555" stroke-width="0.9"/><path d="M16.4 17 H21 V25 H25.6" fill="none" stroke="#555" stroke-width="0.9"/><path d="M29.6 17 H34.2 V25 H38" fill="none" stroke="#555" stroke-width="0.9"/><path d="M39.8 25 L37.4 23.4 V26.6 Z" fill="#555"/><path d="M42.6 19 H48.4 V16.8 L53.4 21 L48.4 25.2 V23 H42.6 Z" fill="none" stroke="#555" stroke-width="0.9"/><path d="M59.2 16.4 H63.2 V21.4 H65.6 L61.2 26 L56.8 21.4 H59.2 Z" fill="none" stroke="#555" stroke-width="0.9"/><path d="M69.4 17 H76 Q80 17 80 21 H77.4 Q76.4 21 76.4 22 V25.4 H69.4 Z" fill="none" stroke="#555" stroke-width="0.9"/><path d="M3 31.6 C7 29.6 9.6 32 7 34.6 C4.4 37 2 37.6 3.2 39 C5 40.4 9 39 11.6 37.4 M3 31.4 C2.4 35 4 38 7.2 40.4" fill="none" stroke="#555" stroke-width="0.9"/><path d="M16.4 31.6 C21.6 31.6 25.4 34.4 25.6 40" fill="none" stroke="#555" stroke-width="0.9"/><path d="M29.4 35.6 C32 29.6 34.4 31.6 35.4 35.6 C36.4 39.6 38 40.6 39.8 38.6" fill="none" stroke="#555" stroke-width="0.9"/><path d="M50 30.8 Q48 30.8 48 32.4 V34.4 Q48 35.6 46.6 35.6 Q48 35.6 48 36.8 V38.8 Q48 40.4 50 40.4" fill="none" stroke="#555" stroke-width="0.9"/><path d="M59.4 30.8 Q61.4 30.8 61.4 32.4 V34.4 Q61.4 35.6 62.8 35.6 Q61.4 35.6 61.4 36.8 V38.8 Q61.4 40.4 59.4 40.4" fill="none" stroke="#555" stroke-width="0.9"/><path d="M74.6 30.6 L76 34.2 L79.8 34.4 L76.8 36.8 L77.8 40.4 L74.6 38.4 L71.4 40.4 L72.4 36.8 L69.4 34.4 L73.2 34.2 Z" fill="none" stroke="#555" stroke-width="0.9"/></svg>
<svg class="r" style="left:738px;top:50.4px;" width="20.4" height="20" viewBox="0 0 20.4 20"><rect x="3.6" y="3.6" width="13" height="13" fill="#fbd3a0" stroke="#f0943c" stroke-width="1.1"/><rect x="0.6" y="0.6" width="7" height="7" fill="#fff" stroke="#5e5e5e" stroke-width="1.1"/><rect x="12.4" y="12.4" width="7" height="7" fill="#fff" stroke="#5e5e5e" stroke-width="1.1"/></svg>
<span class="t" style="left:733.30px;top:74px;font-size:8.6px;color:#383838;transform:matrix(0.9380,0.0001,0,1,0,0.80);">Arrange</span>
<svg class="r" style="left:743.5px;top:84.6px" width="8" height="8" viewBox="-4 -4 8 8"><path d="M-2 -1.0 L0 1.0 L2 -1.0" fill="none" stroke="#555" stroke-width="1"/></svg>
<svg class="r" style="left:770px;top:50.4px;" width="21.6" height="21" viewBox="0 0 21.6 21"><rect x="0.6" y="0.6" width="18.6" height="18.6" rx="1.6" fill="#ededed" stroke="#c8c8c8" stroke-width="1"/><path d="M20.4 8 L13.4 15.6 L11.4 13.6 L19.2 6.8 Z M11.6 14 C9 14 9.4 17 7 17.6 C10 18.6 13 17.6 13.2 15.6" fill="#d8d8d8" stroke="#b8b8b8" stroke-width="0.8"/></svg>
<span class="t" style="left:770.00px;top:74px;font-size:8.6px;color:#a4a4a4;transform:matrix(0.9098,0.0001,0,1,0,0.80);">Quick</span>
<span class="t" style="left:765.50px;top:85px;font-size:8.6px;color:#a4a4a4;transform:matrix(0.9181,0.0001,0,1,0,0.90);">Styles</span>
<svg class="r" style="left:787.6px;top:84.6px" width="8" height="8" viewBox="-4 -4 8 8"><path d="M-1.8 -0.9 L0 0.9 L1.8 -0.9" fill="none" stroke="#b8b8b8" stroke-width="0.9"/></svg>
<svg class="r" style="left:798.2px;top:49.6px;" width="11" height="11" viewBox="0 0 11 11"><path d="M3 5.4 L6 2.2 L9.4 5.6 L6.2 8.6 Z M6 2.2 L4.8 0.8 M9.6 6 Q10.6 7.4 9.8 8.2" fill="none" stroke="#a8a8a8" stroke-width="0.9"/><rect x="0.2" y="9.2" width="10.6" height="1.8" fill="#b2b2b2"/></svg>
<span class="t" style="left:812.00px;top:50px;font-size:8.6px;color:#a4a4a4;transform:matrix(0.9152,0.0001,0,1,0,0.80);">Shape Fill</span>
<svg class="r" style="left:847.4px;top:51.2px" width="8" height="8" viewBox="-4 -4 8 8"><path d="M-1.8 -0.9 L0 0.9 L1.8 -0.9" fill="none" stroke="#b8b8b8" stroke-width="0.9"/></svg>
<svg class="r" style="left:798.2px;top:65.6px;" width="11" height="11" viewBox="0 0 11 11"><path d="M1.6 7.8 V1.6 H8 M3.4 6.6 L8.6 1 L10 2.4 L4.8 7.8 L3 8.2 Z" fill="none" stroke="#a8a8a8" stroke-width="0.9"/><rect x="0.2" y="9.2" width="10.6" height="1.8" fill="#b2b2b2"/></svg>
<span class="t" style="left:812.00px;top:66px;font-size:8.6px;color:#a4a4a4;transform:matrix(0.9357,0.0001,0,1,0,0.70);">Shape Outline</span>
<svg class="r" style="left:863.6px;top:67.2px" width="8" height="8" viewBox="-4 -4 8 8"><path d="M-1.8 -0.9 L0 0.9 L1.8 -0.9" fill="none" stroke="#b8b8b8" stroke-width="0.9"/></svg>
<svg class="r" style="left:798.2px;top:82.4px;" width="11.4" height="10" viewBox="0 0 11.4 10"><path d="M0.6 5.8 L3.6 1 H10.4 L7.6 5.8 Z M0.6 5.8 V7.8 Q4 9.4 7.6 7.8 V5.8 M7.6 7.8 L10.4 3.2 V1" fill="#ececec" stroke="#a8a8a8" stroke-width="0.9"/></svg>
<span class="t" style="left:812.00px;top:82px;font-size:8.6px;color:#a4a4a4;transform:matrix(0.9140,0.0001,0,1,0,0.90);">Shape Effects</span>
<svg class="r" style="left:861.6px;top:83.2px" width="8" height="8" viewBox="-4 -4 8 8"><path d="M-1.8 -0.9 L0 0.9 L1.8 -0.9" fill="none" stroke="#b8b8b8" stroke-width="0.9"/></svg>
<span class="t" style="left:736.80px;top:102px;font-size:8.6px;color:#4c4c4c;transform:matrix(0.8306,0.0001,0,1,0,0.00);">Drawing</span>
<svg class="r" style="left:871.3px;top:103.5px;" width="6" height="5.4" viewBox="0 0 6 5.4"><path d="M0.4 4.2 V0.4 H4.6" fill="none" stroke="#a8a8a8" stroke-width="0.8"/><path d="M2.4 2.2 L5.4 5 M5.5 2.8 V5.1 H3.2" fill="none" stroke="#a8a8a8" stroke-width="0.8"/></svg>
<div class="r" style="left:878.8px;top:48.2px;width:1px;height:60.2px;background:#d2d2d2;"></div>
<svg class="r" style="left:888px;top:49.2px;" width="10.8" height="10.6" viewBox="0 0 10.8 10.6"><circle cx="6.6" cy="4.2" r="3.6" fill="none" stroke="#555" stroke-width="0.9"/><path d="M4 6.8 L0.4 10.2" stroke="#555" stroke-width="1"/></svg>
<span class="t" style="left:901.00px;top:50px;font-size:8.6px;color:#383838;transform:matrix(0.8966,0.0001,0,1,0,0.90);">Find</span>
<svg class="r" style="left:887.2px;top:65.4px;" width="11.4" height="11" viewBox="0 0 11.4 11"><path d="M1 6 C0.4 8 1.4 9.8 3.4 10.2 M0 8.6 L3.2 10.4 L3.6 7.2" fill="none" stroke="#2ea6bd" stroke-width="0.9"/><path d="M4.8 10.2 C7 10.6 8.4 9.4 8.6 8" fill="none" stroke="#2ea6bd" stroke-width="0.9"/></svg>
<span class="t" style="left:892.40px;top:66px;font-size:6.4px;color:#555;transform:matrix(1.0000,0.0001,0,1,0,0.20);">b</span>
<span class="t" style="left:894.60px;top:72px;font-size:6.4px;color:#2ea6bd;transform:matrix(1.0000,0.0001,0,1,0,0.00);">c</span>
<span class="t" style="left:901.00px;top:67px;font-size:8.6px;color:#383838;transform:matrix(0.9286,0.0001,0,1,0,0.30);">Replace</span>
<svg class="r" style="left:935.8px;top:67px" width="8" height="8" viewBox="-4 -4 8 8"><path d="M-1.9 -0.95 L0 0.95 L1.9 -0.95" fill="none" stroke="#555" stroke-width="1"/></svg>
<svg class="r" style="left:888.6px;top:81px;" width="8.4" height="12.4" viewBox="0 0 8.4 12.4"><path d="M0.6 0.8 V10 L3 7.8 L4.8 11.6 L6.2 11 L4.4 7.2 H7.6 Z" fill="#fff" stroke="#444" stroke-width="0.9" stroke-linejoin="round"/></svg>
<span class="t" style="left:901.00px;top:83px;font-size:8.6px;color:#383838;transform:matrix(0.9413,0.0001,0,1,0,0.00);">Select</span>
<svg class="r" style="left:924.2px;top:82.8px" width="8" height="8" viewBox="-4 -4 8 8"><path d="M-1.9 -0.95 L0 0.95 L1.9 -0.95" fill="none" stroke="#555" stroke-width="1"/></svg>
<span class="t" style="left:904.80px;top:102px;font-size:8.6px;color:#4c4c4c;transform:matrix(0.8252,0.0001,0,1,0,0.00);">Editing</span>
<div class="r" style="left:951.3px;top:48.2px;width:1px;height:60.2px;background:#d2d2d2;"></div>
<svg class="r" style="left:965.4px;top:49.4px;" width="14.4" height="21" viewBox="0 0 14.4 21"><rect x="3.6" y="0.6" width="7" height="13.4" rx="3.5" fill="#a9d4f5" stroke="#3f9be6" stroke-width="1"/><path d="M0.8 9.6 Q0.8 16.6 7.1 16.6 Q13.4 16.6 13.4 9.6 M7.1 16.6 V20.6" fill="none" stroke="#5e5e5e" stroke-width="1"/></svg>
<span class="t" style="left:959.00px;top:74px;font-size:8.6px;color:#383838;transform:matrix(0.9901,0.0001,0,1,0,0.30);">Dictate</span>
<svg class="r" style="left:967.8px;top:84.6px" width="8" height="8" viewBox="-4 -4 8 8"><path d="M-2 -1.0 L0 1.0 L2 -1.0" fill="none" stroke="#555" stroke-width="1"/></svg>
<span class="t" style="left:963.50px;top:102px;font-size:8.6px;color:#4c4c4c;transform:matrix(0.8081,0.0001,0,1,0,0.00);">Voice</span>
<div class="r" style="left:992.0px;top:48.2px;width:1px;height:60.2px;background:#d2d2d2;"></div>
<svg class="r" style="left:1004.6px;top:49px;" width="22.4" height="19.4" viewBox="0 0 22.4 19.4"><rect x="5" y="3.6" width="16.6" height="14.4" fill="#fafafa" stroke="#6e6e6e" stroke-width="1.2"/><path d="M5.4 7.4 H21.4 M16 7.4 V17.8" stroke="#7a7a7a" stroke-width="0.9" fill="none"/><rect x="6.6" y="9.2" width="8" height="7.2" fill="#d8d8d8"/><path d="M4.6 0.2 H8.8 L6.8 4.6 H9.4 L2.6 13.4 L4.2 7.4 H1.4 Z" fill="#f7b24a" stroke="#e8862a" stroke-width="0.8"/></svg>
<span class="t" style="left:999.80px;top:74px;font-size:8.6px;color:#383838;transform:matrix(0.9443,0.0001,0,1,0,0.30);">Designer</span>
<span class="t" style="left:1001.50px;top:102px;font-size:8.6px;color:#4c4c4c;transform:matrix(0.8223,0.0001,0,1,0,0.00);">Designer</span>
<div class="r" style="left:1038.8px;top:48.2px;width:1px;height:60.2px;background:#d2d2d2;"></div>
<svg class="r" style="left:1055.8px;top:105px;" width="7" height="5" viewBox="0 0 7 5"><path d="M0.6 4 L3.4 1.2 L6.2 4" fill="none" stroke="#444" stroke-width="1"/></svg>
<span class="t" style="left:8.50px;top:124px;font-size:10.3px;color:#3c3c3c;transform:matrix(1.0000,0.0001,0,1,0,0.60);">1</span>
<span class="t" style="left:8.50px;top:191px;font-size:10.3px;color:#c24a2a;transform:matrix(1.0000,0.0001,0,1,0,0.20);">2</span>
<span class="t" style="left:8.50px;top:257px;font-size:10.3px;color:#3c3c3c;transform:matrix(1.0000,0.0001,0,1,0,0.90);">3</span>
<span class="t" style="left:8.50px;top:324px;font-size:10.3px;color:#3c3c3c;transform:matrix(1.0000,0.0001,0,1,0,0.50);">4</span>
<span class="t" style="left:8.50px;top:391px;font-size:10.3px;color:#3c3c3c;transform:matrix(1.0000,0.0001,0,1,0,0.70);">5</span>
<span class="t" style="left:8.50px;top:458px;font-size:10.3px;color:#3c3c3c;transform:matrix(1.0000,0.0001,0,1,0,0.50);">6</span>
<div class="r" style="left:24.200000000000003px;top:125.1px;width:93.8px;height:53.3px;background:#fff;border:0.5px solid #d8d8d8;box-sizing:border-box"></div>
<div class="r" style="left:23px;top:190.3px;width:96px;height:56px;background:#c24a2a;border-radius:0.6px"></div>
<div class="r" style="left:24.7px;top:191.9px;width:92.6px;height:52.9px;background:#fff"></div>
<div class="r" style="left:24.200000000000003px;top:258.40000000000003px;width:93.8px;height:53.3px;background:#fff;border:0.5px solid #d8d8d8;box-sizing:border-box"></div>
<div class="r" style="left:24.200000000000003px;top:325.0px;width:93.8px;height:53.3px;background:#fff;border:0.5px solid #d8d8d8;box-sizing:border-box"></div>
<div class="r" style="left:24.200000000000003px;top:392.20000000000005px;width:93.8px;height:53.3px;background:#fff;border:0.5px solid #d8d8d8;box-sizing:border-box"></div>
<div class="r" style="left:24.200000000000003px;top:459.0px;width:93.8px;height:53.3px;background:#fff;border:0.5px solid #d8d8d8;box-sizing:border-box"></div>
<div class="r th" style="left:0;top:0;width:1068px;height:601px;transform-origin:0 0;transform:translate(-2.196px,177.378px) scale(0.12281);pointer-events:none">
<span class="t" style="left:247.60px;top:135px;font-size:19.5px;color:#707070;transform:matrix(0.9945,0.0001,0,1,0,0.50);">Maryam Lustberg – Online expert</span>
<svg class="r" style="left:242.6px;top:175.9px" width="76.4" height="76.4" viewBox="0 0 100 100"><defs><clipPath id="t2mac"><circle cx="50.0" cy="50.0" r="50.0"/></clipPath><filter id="t2maf" x="-10%" y="-10%" width="120%" height="120%"><feGaussianBlur stdDeviation="1.2"/></filter></defs><g clip-path="url(#t2mac)"><g filter="url(#t2maf)"><rect x="-10" y="-10" width="120" height="120" fill="#dbd4c9"/><rect x="58" y="-10" width="52" height="120" fill="#e4dfd6"/><path d="M-5 74 L8 69 L20 78 L60 80 L68 67 L81 60.5 L95 68 L106 75 V106 H-5 Z" fill="#1b2747"/><path d="M70 68 L81 62 L86 74 L74 100 L66 100 Z" fill="#25345c"/><path d="M48.9 56 L64.2 54 L68 69.4 L67 100 L55.6 100 L53.6 83 Z" fill="#cda896"/><path d="M29.7 7.4 L40.2 4.7 L52.7 6.4 L58.4 12.2 L65.1 26.7 L68 42.2 L73.8 55.8 L77 64 L69.9 68.4 L58.4 73.3 L55.6 84.9 L45 92.6 L29.7 88.8 L18.2 79 L10.5 69.4 L9.2 55.8 L12 40.3 L20.1 21 Z" fill="#211d25"/><path d="M24 26 Q15 46 17 66 M30 56 Q27 74 40 88 M22 60 Q24 74 32 84" stroke="#4b3f40" stroke-width="2.2" fill="none" opacity="0.7"/><path d="M66 30 Q69 46 75 60" stroke="#4b3f40" stroke-width="1.8" fill="none" opacity="0.6"/><path d="M32.6 24.8 L41.2 15.1 L54.6 16.1 L62.3 24.8 L65.1 40.3 L61.3 53.9 L50.8 61.2 L39.3 57.8 L31.6 46.1 L30.7 34.5 Z" fill="#c18f7b"/><path d="M35 24 L42 17 L54 17.6 L60.6 25 L58 28 Q48 22 37 29 Z" fill="#d0a894"/><path d="M32 36 L34 47 L40 57 L44 58 Q36 48 35 34 Z" fill="#a97862"/><path d="M38 50 Q50 60 61 47 L60 54 L51 60 L41 57 Z" fill="#c4826f"/><path d="M33.6 32.6 L42.6 30.6 M49.6 28.6 L58.8 26.8" stroke="#3a2a2c" stroke-width="1.9" fill="none"/><path d="M35.6 36.4 L42.4 35.2 M50.6 33 L57.6 31.4" stroke="#3e2c2e" stroke-width="2.3" fill="none"/><path d="M41.6 48.6 Q50 52.8 57.8 45.8" stroke="#9c4c4a" stroke-width="2.1" fill="none"/><path d="M46 36 L47.6 43 L51 42.6" stroke="#a9735f" stroke-width="1.4" fill="none"/></g></g></svg>
<span class="t" style="left:336.20px;top:184px;font-size:12.8px;color:#484848;transform:matrix(0.9804,0.0001,0,1,0,0.70);font-weight:700;">Maryam Lustberg</span>
<span class="t" style="left:336.20px;top:201px;font-size:11.8px;color:#595959;transform:matrix(0.9871,0.0001,0,1,0,0.00);">@maryam_lustberg</span>
<span class="t" style="left:336.20px;top:215px;font-size:11.8px;color:#595959;transform:matrix(0.9308,0.0001,0,1,0,0.80);">Yale Cancer Center, US</span>
<span class="t" style="left:336.20px;top:231px;font-size:11.8px;color:#595959;transform:matrix(0.9599,0.0001,0,1,0,0.40);">Breast Oncologist</span>
<svg class="r" style="left:475px;top:180.6px;" width="25.6" height="23.4" viewBox="0 1.6 24 21.4"><path d="M23.953 4.57a10 10 0 01-2.825.775 4.958 4.958 0 002.163-2.723c-.951.555-2.005.959-3.127 1.184a4.92 4.92 0 00-8.384 4.482C7.69 8.095 4.067 6.13 1.64 3.162a4.822 4.822 0 00-.666 2.475c0 1.71.87 3.213 2.188 4.096a4.904 4.904 0 01-2.228-.616v.06a4.923 4.923 0 003.946 4.827 4.996 4.996 0 01-2.212.085 4.936 4.936 0 004.604 3.417 9.867 9.867 0 01-6.102 2.105c-.39 0-.779-.023-1.17-.067a13.995 13.995 0 007.557 2.209c9.053 0 13.998-7.496 13.998-13.985 0-.21 0-.42-.015-.63A9.935 9.935 0 0024 4.59z" fill="#1da1f2"/></svg>
<div class="r" style="left:475.6px;top:216.2px;width:24.4px;height:23.4px;border-radius:2.2px;background:#1072bc"></div>
<span class="t" style="left:478.80px;top:222px;font-size:18.6px;color:#fff;transform:matrix(1.1011,0.0001,0,1,0,0.20);font-weight:700;">in</span>
<div class="r" style="left:478.4px;top:218.6px;width:6.4px;height:7.6px;background:#1072bc;"></div>
<div class="r" style="left:478.9px;top:219.3px;width:4.6px;height:4.6px;border-radius:50%;background:#fff"></div>
<span class="t" style="left:514.30px;top:185px;font-size:12px;color:#595959;transform:matrix(0.9751,0.0001,0,1,0,0.00);">8,102 followers</span>
<span class="t" style="left:514.30px;top:200px;font-size:9px;color:#595959;transform:matrix(0.9701,0.0001,0,1,0,0.80);">21% HCPs</span>
<span class="t" style="left:512.60px;top:220px;font-size:12px;color:#595959;transform:matrix(0.9751,0.0001,0,1,0,0.50);">4,058 followers</span>
<span class="t" style="left:613.80px;top:183px;font-size:12px;color:#7f7f7f;transform:matrix(0.9147,0.0001,0,1,0,0.20);">Retweets by HCP peers*</span>
<span class="t" style="left:613.80px;top:203px;font-size:11.6px;color:#d6265c;transform:matrix(0.9765,0.0001,0,1,0,0.40);font-weight:700;">166</span>
<span class="t" style="left:613.80px;top:221px;font-size:12px;color:#7f7f7f;transform:matrix(0.9301,0.0001,0,1,0,0.30);">Mentions by HCP peers*</span>
<span class="t" style="left:613.80px;top:241px;font-size:11.6px;color:#d6265c;transform:matrix(0.9715,0.0001,0,1,0,0.00);font-weight:700;">2,033</span>
<span class="t" style="left:747.00px;top:174px;font-size:12.4px;color:#7f7f7f;transform:matrix(0.9088,0.0001,0,1,0,0.20);">Most mentioned by these HCPs online:</span>
<svg class="r" style="left:746.9px;top:191.9px" width="51" height="51" viewBox="0 0 100 100"><defs><clipPath id="t2mic"><circle cx="50.0" cy="50.0" r="50.0"/></clipPath><filter id="t2mif" x="-10%" y="-10%" width="120%" height="120%"><feGaussianBlur stdDeviation="2.2"/></filter></defs><g clip-path="url(#t2mic)"><g filter="url(#t2mif)"><rect x="-10" y="-10" width="120" height="120" fill="#e2d0bd"/><rect x="-10" y="22" width="36" height="56" fill="#d3b8a2"/><path d="M-5 110 L8 78 L30 64 L50 70 L70 64 L92 74 L105 110 Z" fill="#efebe8"/><path d="M34 60 L64 62 L60 100 L44 100 Z" fill="#1f2e33"/><path d="M48 78 L56 78 L58 100 L46 100 Z" fill="#a8452e"/><path d="M40 56 L64 56 L62 68 L52 74 L42 68 Z" fill="#b8763a"/><ellipse cx="52.5" cy="40" rx="19" ry="24" fill="#c9863f"/><ellipse cx="52" cy="41" rx="11" ry="15" fill="#db9a42"/><path d="M29 40 Q24 18 36 8 Q50 0 68 6 Q80 14 77 32 L74 42 Q74 28 66 22 Q52 15 40 22 Q33 28 33 42 Z" fill="#3a2a1f"/><path d="M34 20 Q50 6 70 16 L70 24 Q52 14 36 26 Z" fill="#3a2a1f"/><path d="M40 34 L48 33 M57 33 L66 34" stroke="#4a2a14" stroke-width="2.4"/><path d="M44 54 Q52 59 61 54" stroke="#f0d6b8" stroke-width="2.6" fill="none"/></g></g></svg>
<svg class="r" style="left:820.7px;top:191.3px" width="51.4" height="51.4" viewBox="0 0 100 100"><defs><clipPath id="t2nic"><circle cx="50.0" cy="50.0" r="50.0"/></clipPath><filter id="t2nif" x="-10%" y="-10%" width="120%" height="120%"><feGaussianBlur stdDeviation="2.4"/></filter></defs><g clip-path="url(#t2nic)"><g filter="url(#t2nif)"><rect x="-10" y="-10" width="120" height="120" fill="#8a8686"/><path d="M-5 -5 H45 L38 20 L10 45 L-5 50 Z" fill="#b6d8ee"/><path d="M-5 38 L14 30 L20 50 L-5 60 Z" fill="#e4e6ea"/><path d="M-5 60 L12 52 L40 78 L50 105 L-5 105 Z" fill="#9a2f2f"/><path d="M4 58 L20 54 L34 84 L20 96 Z" fill="#d9d3d0"/><path d="M55 70 L105 50 V110 H40 Z" fill="#1b2438"/><path d="M44 70 L60 78 L58 105 L40 105 Z" fill="#161414"/><ellipse cx="32" cy="40" rx="18" ry="22" fill="#4a3a34"/><ellipse cx="34" cy="46" rx="14" ry="17" fill="#b1846c"/><path d="M18 52 L36 49 L52 56 L48 74 L32 80 L21 67 Z" fill="#cfcfd4"/><ellipse cx="74" cy="38" rx="24" ry="26" fill="#b8826a"/><path d="M38 8 Q60 -8 86 8 Q98 20 100 34 L78 20 L50 24 L40 30 Z" fill="#2a2226"/><path d="M53 44 L70 36 L92 43 L95 62 L80 78 L62 66 Z" fill="#e2e2e4"/><path d="M56 32 L66 30 M76 30 L88 32" stroke="#3a2624" stroke-width="2.4"/><path d="M24 40 L31 39 M38 40 L45 41" stroke="#3a2624" stroke-width="2"/></g></g></svg>
<svg class="r" style="left:895px;top:190.9px" width="51" height="51" viewBox="0 0 100 100"><defs><clipPath id="t2gac"><circle cx="50.0" cy="50.0" r="50.0"/></clipPath><filter id="t2gaf" x="-10%" y="-10%" width="120%" height="120%"><feGaussianBlur stdDeviation="2.2"/></filter></defs><g clip-path="url(#t2gac)"><g filter="url(#t2gaf)"><rect x="-10" y="-10" width="120" height="120" fill="#4b4946"/><path d="M-5 24 L56 -5 L66 -5 L-5 32 Z M62 62 L105 38 L105 46 L68 68 Z" fill="#77777a"/><path d="M-5 44 L30 40 L34 60 L20 78 L-5 76 Z" fill="#ac6438"/><path d="M74 8 L105 16 V64 L80 58 Z" fill="#7e4c32"/><path d="M62 0 L84 6 L92 18 L76 13 Z" fill="#a86238"/><path d="M2 78 L32 60 L50 78 L62 68 L84 76 L80 94 L50 106 L18 98 Z" fill="#171c28"/><path d="M33 60 L42 64 L56 82 L61 68 L66 78 L64 100 L48 100 Z" fill="#3b69c9"/><path d="M50 78 L58 76 L63 98 L54 100 Z" fill="#9fc0d2"/><ellipse cx="50.5" cy="37" rx="19.5" ry="25" fill="#c6947a"/><ellipse cx="52" cy="24" rx="13" ry="10" fill="#d9ae98"/><path d="M34 39.5 H67" stroke="#3a2c2a" stroke-width="2.2"/><path d="M42 54 Q50 58 58 53" stroke="#a06050" stroke-width="1.8" fill="none"/></g></g></svg>
<svg class="r" style="left:786.9px;top:227.3px" width="15.8" height="15.8" viewBox="0 0 100 100"><defs><clipPath id="t2794fl"><circle cx="50" cy="50" r="50"/></clipPath></defs><g clip-path="url(#t2794fl)"><rect x="0" y="0.0" width="100" height="11.4" fill="#c9503f"/><rect x="0" y="11.1" width="100" height="11.4" fill="#f6ebe6"/><rect x="0" y="22.2" width="100" height="11.4" fill="#c9503f"/><rect x="0" y="33.3" width="100" height="11.4" fill="#f6ebe6"/><rect x="0" y="44.4" width="100" height="11.4" fill="#c9503f"/><rect x="0" y="55.5" width="100" height="11.4" fill="#f6ebe6"/><rect x="0" y="66.6" width="100" height="11.4" fill="#c9503f"/><rect x="0" y="77.7" width="100" height="11.4" fill="#f6ebe6"/><rect x="0" y="88.8" width="100" height="11.4" fill="#c9503f"/><rect x="0" y="0" width="50" height="55" fill="#5c6a9e"/></g></svg>
<svg class="r" style="left:860.5px;top:227.3px" width="15.8" height="15.8" viewBox="0 0 100 100"><defs><clipPath id="t2868fl"><circle cx="50" cy="50" r="50"/></clipPath></defs><g clip-path="url(#t2868fl)"><rect x="0" y="0.0" width="100" height="11.4" fill="#c9503f"/><rect x="0" y="11.1" width="100" height="11.4" fill="#f6ebe6"/><rect x="0" y="22.2" width="100" height="11.4" fill="#c9503f"/><rect x="0" y="33.3" width="100" height="11.4" fill="#f6ebe6"/><rect x="0" y="44.4" width="100" height="11.4" fill="#c9503f"/><rect x="0" y="55.5" width="100" height="11.4" fill="#f6ebe6"/><rect x="0" y="66.6" width="100" height="11.4" fill="#c9503f"/><rect x="0" y="77.7" width="100" height="11.4" fill="#f6ebe6"/><rect x="0" y="88.8" width="100" height="11.4" fill="#c9503f"/><rect x="0" y="0" width="50" height="55" fill="#5c6a9e"/></g></svg>
<svg class="r" style="left:934.6px;top:227.3px" width="15.8" height="15.8" viewBox="0 0 100 100"><defs><clipPath id="t2942fl"><circle cx="50" cy="50" r="50"/></clipPath></defs><g clip-path="url(#t2942fl)"><rect x="0" y="0.0" width="100" height="11.4" fill="#c9503f"/><rect x="0" y="11.1" width="100" height="11.4" fill="#f6ebe6"/><rect x="0" y="22.2" width="100" height="11.4" fill="#c9503f"/><rect x="0" y="33.3" width="100" height="11.4" fill="#f6ebe6"/><rect x="0" y="44.4" width="100" height="11.4" fill="#c9503f"/><rect x="0" y="55.5" width="100" height="11.4" fill="#f6ebe6"/><rect x="0" y="66.6" width="100" height="11.4" fill="#c9503f"/><rect x="0" y="77.7" width="100" height="11.4" fill="#f6ebe6"/><rect x="0" y="88.8" width="100" height="11.4" fill="#c9503f"/><rect x="0" y="0" width="50" height="55" fill="#5c6a9e"/></g></svg>
<span class="t" style="left:744.00px;top:246px;font-size:9.6px;color:#595959;transform:matrix(0.8829,0.0001,0,1,0,0.20);">Mike Pishvaian</span>
<span class="t" style="left:746.45px;top:257px;font-size:9.6px;color:#595959;transform:matrix(0.9005,0.0001,0,1,0,0.30);">@Mpishvaian</span>
<span class="t" style="left:747.00px;top:268px;font-size:9.6px;color:#595959;transform:matrix(0.8804,0.0001,0,1,0,0.20);">GI Oncologist</span>
<span class="t" style="left:818.20px;top:246px;font-size:9.6px;color:#595959;transform:matrix(0.8945,0.0001,0,1,0,0.20);">Nicole Kuderer</span>
<span class="t" style="left:815.55px;top:257px;font-size:9.6px;color:#595959;transform:matrix(0.8912,0.0001,0,1,0,0.30);">@NicoleKuderer</span>
<span class="t" style="left:810.00px;top:268px;font-size:9.6px;color:#595959;transform:matrix(0.9050,0.0001,0,1,0,0.20);">Medical Oncologist</span>
<span class="t" style="left:897.50px;top:246px;font-size:9.6px;color:#595959;transform:matrix(0.8666,0.0001,0,1,0,0.20);">Gary Lyman</span>
<span class="t" style="left:893.95px;top:257px;font-size:9.6px;color:#595959;transform:matrix(0.8843,0.0001,0,1,0,0.00);">@gary_lyman</span>
<span class="t" style="left:900.00px;top:268px;font-size:9.6px;color:#595959;transform:matrix(0.8819,0.0001,0,1,0,0.10);">Oncologist</span>
<span class="t" style="left:268.30px;top:273px;font-size:12.6px;color:#7f7f7f;transform:matrix(1.0356,0.0001,0,1,0,0.20);">Oncology conversation over the past 12 months on Twitter</span>
<span class="t" style="left:252px;top:355.6px;font-size:10.2px;color:#595959;transform:translate(-50%,-50%) rotate(-90deg) scaleX(1.06);transform-origin:50% 50%;letter-spacing:0.2px">Volume of posts (by week)</span>
<span class="t" style="left:277.89px;top:469px;font-size:9.9px;color:#595959;transform:matrix(1.0000,0.0001,0,1,0,0.60);">0</span>
<span class="t" style="left:272.39px;top:435px;font-size:9.9px;color:#595959;transform:matrix(1.0000,0.0001,0,1,0,0.30);">20</span>
<span class="t" style="left:272.39px;top:401px;font-size:9.9px;color:#595959;transform:matrix(1.0000,0.0001,0,1,0,0.00);">40</span>
<span class="t" style="left:272.39px;top:366px;font-size:9.9px;color:#595959;transform:matrix(1.0000,0.0001,0,1,0,0.70);">60</span>
<span class="t" style="left:272.39px;top:332px;font-size:9.9px;color:#595959;transform:matrix(1.0000,0.0001,0,1,0,0.40);">80</span>
<span class="t" style="left:266.88px;top:298px;font-size:9.9px;color:#595959;transform:matrix(1.0000,0.0001,0,1,0,0.10);">100</span>
<div class="r" style="left:292px;top:473.7px;width:388px;height:0.9px;background:#d9d9d9;"></div>
<div class="r" style="left:600px;top:474px;width:0.8px;height:36px;background:#d9d9d9;"></div>
<span class="t" style="left:284.38px;top:482px;font-size:9.9px;color:#595959;transform:matrix(1.0000,0.0001,0,1,0,0.90);">Mar</span>
<span class="t" style="left:317.50px;top:482px;font-size:9.9px;color:#595959;transform:matrix(1.0000,0.0001,0,1,0,0.90);">Apr</span>
<span class="t" style="left:347.95px;top:482px;font-size:9.9px;color:#595959;transform:matrix(1.0000,0.0001,0,1,0,0.90);">May</span>
<span class="t" style="left:381.82px;top:482px;font-size:9.9px;color:#595959;transform:matrix(1.0000,0.0001,0,1,0,0.90);">Jun</span>
<span class="t" style="left:415.57px;top:482px;font-size:9.9px;color:#595959;transform:matrix(1.0000,0.0001,0,1,0,0.90);">Jul</span>
<span class="t" style="left:445.39px;top:482px;font-size:9.9px;color:#595959;transform:matrix(1.0000,0.0001,0,1,0,0.90);">Aug</span>
<span class="t" style="left:477.49px;top:482px;font-size:9.9px;color:#595959;transform:matrix(1.0000,0.0001,0,1,0,0.90);">Sep</span>
<span class="t" style="left:511.10px;top:482px;font-size:9.9px;color:#595959;transform:matrix(1.0000,0.0001,0,1,0,0.90);">Oct</span>
<span class="t" style="left:542.50px;top:482px;font-size:9.9px;color:#595959;transform:matrix(1.0000,0.0001,0,1,0,0.90);">Nov</span>
<span class="t" style="left:574.40px;top:482px;font-size:9.9px;color:#595959;transform:matrix(1.0000,0.0001,0,1,0,0.90);">Dec</span>
<span class="t" style="left:607.72px;top:482px;font-size:9.9px;color:#595959;transform:matrix(1.0000,0.0001,0,1,0,0.90);">Jan</span>
<span class="t" style="left:639.77px;top:482px;font-size:9.9px;color:#595959;transform:matrix(1.0000,0.0001,0,1,0,0.90);">Feb</span>
<span class="t" style="left:571.79px;top:499px;font-size:9.9px;color:#595959;transform:matrix(1.0000,0.0001,0,1,0,0.10);">2022</span>
<span class="t" style="left:605.19px;top:499px;font-size:9.9px;color:#595959;transform:matrix(1.0000,0.0001,0,1,0,0.10);">2023</span>
<svg class="r" style="left:0;top:0" width="1" height="1"><polyline points="292.6,460.6 300.0,450.3 307.4,457.2 314.8,469.2 322.2,452.0 329.6,436.6 337.0,453.7 344.4,457.2 351.8,470.9 359.2,453.7 366.6,400.6 374.0,419.4 381.4,448.6 388.8,332.0 396.2,352.5 403.6,410.8 411.0,320.0 418.4,448.6 425.8,469.2 433.2,472.6 440.6,458.9 448.0,467.4 455.4,460.6 462.8,467.4 470.2,452.0 477.6,445.1 485.0,462.3 492.4,438.3 499.8,436.6 507.2,356.0 514.6,458.9 522.0,460.6 529.4,422.9 536.8,445.1 544.2,455.4 551.6,457.2 559.0,472.6 566.4,469.2 573.8,470.9 581.2,469.2 588.6,426.3 596.0,458.9 603.4,470.9 610.8,472.6 618.2,472.6 625.6,472.6 633.0,464.0 640.4,462.3 647.8,464.0 655.2,470.9 662.6,467.4 670.0,472.6 677.4,472.6" fill="none" stroke="#21a3a3" stroke-width="6.2" stroke-linejoin="round" stroke-linecap="round"/><g fill="#1fa5a5"><circle cx="388" cy="322" r="5"/><circle cx="411.1" cy="308.7" r="5"/><circle cx="507.5" cy="345.3" r="5"/></g></svg>
<span class="t" style="left:336.90px;top:317px;font-size:9.4px;color:#595959;transform:matrix(0.9380,0.0001,0,1,0,0.60);">#ASCO22</span>
<span class="t" style="left:420.60px;top:303px;font-size:9.4px;color:#595959;transform:matrix(0.9671,0.0001,0,1,0,0.30);">#MASCC22</span>
<span class="t" style="left:517.90px;top:340px;font-size:9.4px;color:#595959;transform:matrix(1.0385,0.0001,0,1,0,0.00);">#TumorBoardTuesday</span>
<span class="t" style="left:640.20px;top:506px;font-size:9.6px;color:#7f7f7f;transform:matrix(0.9620,0.0001,0,1,0,0.80);">*In the oncology conversation on Twitter</span>
<svg class="r" style="left:871px;top:509.4px" width="22" height="22" viewBox="-11 -11 22 22"><circle cx="0" cy="0" r="7.4" fill="none" stroke="#2aabe2" stroke-width="6.4" stroke-dasharray="1.45 0.6" transform="rotate(38)" pathLength="46.5" style="stroke-dasharray:1.45 0.6"/><path d="M0 0 L13 -8.6 L13 7.6 Z" fill="#fff"/></svg>
<span class="t" style="left:894.20px;top:517px;font-size:8.6px;color:#5a5a5a;letter-spacing:1.286px;transform:matrix(1.0000,0.0001,0,1,0,0.40);">CREATION</span>
<span class="t" style="left:947.40px;top:519px;font-size:6.6px;color:#5a5a5a;transform:matrix(1.2040,0.0001,0,1,0,0.40);">.co</span>
<div class="r" style="left:709.6px;top:283px;width:204.6px;height:219.6px;background:#fff;border:0.8px solid #f0f0f0;box-sizing:border-box"></div>
<svg class="r" style="left:715.5px;top:289.7px" width="16" height="16" viewBox="0 0 100 100"><defs><clipPath id="t2twmac"><circle cx="50.0" cy="50.0" r="50.0"/></clipPath><filter id="t2twmaf" x="-10%" y="-10%" width="120%" height="120%"><feGaussianBlur stdDeviation="2.4"/></filter></defs><g clip-path="url(#t2twmac)"><g filter="url(#t2twmaf)"><rect x="-10" y="-10" width="120" height="120" fill="#dbd4c9"/><rect x="58" y="-10" width="52" height="120" fill="#e4dfd6"/><path d="M-5 74 L8 69 L20 78 L60 80 L68 67 L81 60.5 L95 68 L106 75 V106 H-5 Z" fill="#1b2747"/><path d="M70 68 L81 62 L86 74 L74 100 L66 100 Z" fill="#25345c"/><path d="M48.9 56 L64.2 54 L68 69.4 L67 100 L55.6 100 L53.6 83 Z" fill="#cda896"/><path d="M29.7 7.4 L40.2 4.7 L52.7 6.4 L58.4 12.2 L65.1 26.7 L68 42.2 L73.8 55.8 L77 64 L69.9 68.4 L58.4 73.3 L55.6 84.9 L45 92.6 L29.7 88.8 L18.2 79 L10.5 69.4 L9.2 55.8 L12 40.3 L20.1 21 Z" fill="#211d25"/><path d="M24 26 Q15 46 17 66 M30 56 Q27 74 40 88 M22 60 Q24 74 32 84" stroke="#4b3f40" stroke-width="2.2" fill="none" opacity="0.7"/><path d="M66 30 Q69 46 75 60" stroke="#4b3f40" stroke-width="1.8" fill="none" opacity="0.6"/><path d="M32.6 24.8 L41.2 15.1 L54.6 16.1 L62.3 24.8 L65.1 40.3 L61.3 53.9 L50.8 61.2 L39.3 57.8 L31.6 46.1 L30.7 34.5 Z" fill="#c18f7b"/><path d="M35 24 L42 17 L54 17.6 L60.6 25 L58 28 Q48 22 37 29 Z" fill="#d0a894"/><path d="M32 36 L34 47 L40 57 L44 58 Q36 48 35 34 Z" fill="#a97862"/><path d="M38 50 Q50 60 61 47 L60 54 L51 60 L41 57 Z" fill="#c4826f"/><path d="M33.6 32.6 L42.6 30.6 M49.6 28.6 L58.8 26.8" stroke="#3a2a2c" stroke-width="1.9" fill="none"/><path d="M35.6 36.4 L42.4 35.2 M50.6 33 L57.6 31.4" stroke="#3e2c2e" stroke-width="2.3" fill="none"/><path d="M41.6 48.6 Q50 52.8 57.8 45.8" stroke="#9c4c4a" stroke-width="2.1" fill="none"/><path d="M46 36 L47.6 43 L51 42.6" stroke="#a9735f" stroke-width="1.4" fill="none"/></g></g></svg>
<span class="t" style="left:735.80px;top:292px;font-size:5.6px;color:#1a1a1a;transform:matrix(0.9190,0.0001,0,1,0,0.20);font-weight:700;">Maryam Lustberg MD MPH</span>
<span class="t" style="left:735.80px;top:298px;font-size:5.2px;color:#8a8a8a;transform:matrix(0.9989,0.0001,0,1,0,0.50);">@maryam_lustberg</span>
<svg class="r" style="left:891.2px;top:290.4px;" width="18" height="16" viewBox="0 1.6 24 21.4"><path d="M23.953 4.57a10 10 0 01-2.825.775 4.958 4.958 0 002.163-2.723c-.951.555-2.005.959-3.127 1.184a4.92 4.92 0 00-8.384 4.482C7.69 8.095 4.067 6.13 1.64 3.162a4.822 4.822 0 00-.666 2.475c0 1.71.87 3.213 2.188 4.096a4.904 4.904 0 01-2.228-.616v.06a4.923 4.923 0 003.946 4.827 4.996 4.996 0 01-2.212.085 4.936 4.936 0 004.604 3.417 9.867 9.867 0 01-6.102 2.105c-.39 0-.779-.023-1.17-.067a13.995 13.995 0 007.557 2.209c9.053 0 13.998-7.496 13.998-13.985 0-.21 0-.42-.015-.63A9.935 9.935 0 0024 4.59z" fill="#1da1f2"/></svg>
<span class="t" style="left:715.50px;top:312px;font-size:5.9px;color:#2a2a2a;transform:matrix(0.9474,0.0001,0,1,0,0.80);">Thank you</span>
<span class="t" style="left:744.30px;top:312px;font-size:5.9px;color:#2aa3ef;transform:matrix(0.9710,0.0001,0,1,0,0.80);">@GoHealio</span>
<span class="t" style="left:775.90px;top:312px;font-size:5.9px;color:#2a2a2a;transform:matrix(0.9941,0.0001,0,1,0,0.80);">for sharing my story</span>
<span class="t" style="left:829.20px;top:312px;font-size:5.9px;color:#2aa3ef;transform:matrix(1.0339,0.0001,0,1,0,0.80);">#WomenInMedicine</span>
<span class="t" style="left:715.50px;top:319px;font-size:5.9px;color:#2aa3ef;transform:matrix(0.9709,0.0001,0,1,0,0.70);">@WIMSummit @YaleMed @YaleCancer</span>
<svg class="r" style="left:716px;top:329.3px" width="192.7" height="101.4" viewBox="0 0 192.7 101.4"><defs><clipPath id="t2twi"><path d="M0 101.4 V4 Q0 0 4 0 H188.7 Q192.7 0 192.7 4 V101.4 Z"/></clipPath><filter id="t2twf" x="-10%" y="-10%" width="120%" height="120%"><feGaussianBlur stdDeviation="1.1"/></filter><linearGradient id="t2twg" x1="0" y1="0" x2="1" y2="0"><stop offset="0" stop-color="#2b2b2b"/><stop offset="0.35" stop-color="#3c3c3c"/><stop offset="0.62" stop-color="#6a6a6a"/><stop offset="1" stop-color="#8c8c8c"/></linearGradient></defs><g clip-path="url(#t2twi)"><rect x="0" y="0" width="192.7" height="101.4" fill="url(#t2twg)"/><g filter="url(#t2twf)"><circle cx="62" cy="18" r="16" fill="#3e3e3e" opacity="0.6"/><circle cx="96" cy="78" r="15" fill="#4e4e4e" opacity="0.6"/><circle cx="118" cy="14" r="13" fill="#6e6e6e" opacity="0.7"/><circle cx="150" cy="4" r="14" fill="#7a7a7a" opacity="0.6"/><path d="M170 0 H193 V74 L181 69 L172 50 Z" fill="#b9b9b9" opacity="0.9"/><circle cx="186" cy="11" r="8.5" fill="#e6e6e6" opacity="0.9"/><circle cx="108" cy="42" r="10" fill="#4c4c4c" opacity="0.5"/><circle cx="180" cy="44" r="9" fill="#9a9a9a" opacity="0.7"/><path d="M98 102 L104 88 L115 64 L128 68 L140 82 L153.6 90 L165 80 L181 69 L194 73 V102 Z" fill="#e7e7e9"/><path d="M146.3 83.6 L160.9 83.6 L157.3 102 L149 102 Z" fill="#1d3a41"/><path d="M146.3 54 L160.9 54 L161.8 81.8 L153.6 89 L145.4 81.8 Z" fill="#c9967f"/><path d="M138.9 10.4 L148.1 7.6 L157.3 8.5 L166.4 17.7 L170.1 32.3 L171.9 50.6 L181.1 69 L175.6 72.6 L164.6 76.3 L160.9 81.8 L157 60 L150 60 L144.4 72.6 L138.9 81.8 L131.6 81.8 L125.2 65.3 L122.5 50.6 L123.4 41.5 L129.8 23.2 Z" fill="#1e1c1d"/><ellipse cx="153.4" cy="40" rx="14.2" ry="19.6" fill="#c9957d"/><path d="M139 30 Q141 16 152 13 Q150 22 140 36 Z" fill="#1e1c1d"/><path d="M154 13 Q166 16 168 34 Q162 22 153 17 Z" fill="#1e1c1d"/><path d="M146.4 48 Q153 51.4 160 47.6" stroke="#a8504a" stroke-width="1.5" fill="none"/><path d="M143 32.6 H149.4 M157 32.6 H163.4" stroke="#3a2a2a" stroke-width="1.4"/><path d="M142.4 29.4 L149.6 28.6 M156.6 28.6 L164 29.6" stroke="#3a2a2a" stroke-width="1"/><path d="M118 84 Q128 83 136 89 M119 90 Q129 89 137 94 M120 95 Q130 94 138 98" stroke="#4fb0b0" stroke-width="0.8" fill="none"/></g></g></svg>
<span class="t" style="left:726.60px;top:345px;font-size:13.5px;color:#ececec;transform:matrix(1.0000,0.0001,0,1,0,0.80);font-weight:700;font-style:italic;">“</span>
<span class="t" style="left:736.20px;top:348px;font-size:6.7px;color:#ececec;transform:matrix(1.2461,0.0001,0,1,0,0.50);">I realized that one-size</span>
<span class="t" style="left:727.10px;top:358px;font-size:6.7px;color:#ececec;transform:matrix(1.2398,0.0001,0,1,0,0.10);">prescriptive recommendations</span>
<span class="t" style="left:727.10px;top:367px;font-size:6.7px;color:#ececec;transform:matrix(1.2316,0.0001,0,1,0,0.60);">of ‘just say no’ or ‘family first’</span>
<span class="t" style="left:727.10px;top:376px;font-size:6.7px;color:#ececec;transform:matrix(1.2195,0.0001,0,1,0,0.90);">don’t always resonate.</span>
<span class="t" style="left:809.40px;top:374px;font-size:13.5px;color:#ececec;transform:matrix(1.0000,0.0001,0,1,0,0.40);font-weight:700;font-style:italic;">”</span>
<span class="t" style="left:727.10px;top:392px;font-size:5.9px;color:#ececec;transform:matrix(1.0433,0.0001,0,1,0,0.10);font-weight:700;">Maryam Lustberg, MD, MPH</span>
<div class="r" style="left:726.8px;top:412.8px;width:10px;height:10.4px;border:0.8px solid #f2f2f2;border-radius:1px;box-sizing:border-box"></div>
<svg class="r" style="left:728.4px;top:414.6px;" width="7" height="7" viewBox="0 0 7 7"><path d="M1 5.6 Q2.2 1 3.4 3.4 Q4.4 5.6 5.8 1.2" fill="none" stroke="#f2f2f2" stroke-width="0.8"/></svg>
<span class="t" style="left:737.90px;top:412px;font-size:9.2px;color:#fff;transform:matrix(0.8020,0.0001,0,1,0,0.20);font-weight:700;">WOMEN</span>
<span class="t" style="left:738.00px;top:420px;font-size:3.6px;color:#e6e6e6;transform:matrix(1.1337,0.0001,0,1,0,0.70);">IN ONCOLOGY</span>
<div class="r" style="left:716px;top:429.9px;width:192.7px;height:37.6px;border:0.7px solid #dfe3e6;border-top:none;border-radius:0 0 4px 4px;box-sizing:border-box"></div>
<span class="t" style="left:720.10px;top:435px;font-size:5.3px;color:#7a7a7a;transform:matrix(1.0066,0.0001,0,1,0,0.30);">healio.com</span>
<span class="t" style="left:720.10px;top:442px;font-size:5.4px;color:#1a1a1a;transform:matrix(0.9033,0.0001,0,1,0,0.80);font-weight:700;">BLOG: Navigating complexities of work-life balance</span>
<span class="t" style="left:720.10px;top:450px;font-size:5.3px;color:#808080;transform:matrix(0.9887,0.0001,0,1,0,0.40);">It was a cold Thursday night in November — the night of Thanksgiving 2022.</span>
<span class="t" style="left:720.10px;top:457px;font-size:5.3px;color:#808080;transform:matrix(0.9832,0.0001,0,1,0,0.50);">The driver opened the trunk, put my suitcase in and I got into the car. We wer...</span>
<span class="t" style="left:715.50px;top:474px;font-size:5.2px;color:#7a7a7a;transform:matrix(0.9622,0.0001,0,1,0,0.00);">7:02 PM · Dec 23, 2022 ·</span>
<span class="t" style="left:773.40px;top:474px;font-size:5.2px;color:#1a1a1a;transform:matrix(0.7506,0.0001,0,1,0,0.00);font-weight:700;">11.9K</span>
<span class="t" style="left:785.00px;top:474px;font-size:5.2px;color:#7a7a7a;transform:matrix(0.9581,0.0001,0,1,0,0.00);">Views</span>
<div class="r" style="left:715.5px;top:484.4px;width:193px;height:0.5px;background:#eef0f1;"></div>
<span class="t" style="left:717.10px;top:492px;font-size:5.0px;color:#1a1a1a;transform:matrix(0.8451,0.0001,0,1,0,0.10);font-weight:700;">13</span>
<span class="t" style="left:723.10px;top:492px;font-size:5.0px;color:#7a7a7a;transform:matrix(0.9692,0.0001,0,1,0,0.10);">Retweets</span>
<span class="t" style="left:750.60px;top:492px;font-size:5.0px;color:#1a1a1a;transform:matrix(1.0000,0.0001,0,1,0,0.10);font-weight:700;">4</span>
<span class="t" style="left:755.30px;top:492px;font-size:5.0px;color:#7a7a7a;transform:matrix(0.9688,0.0001,0,1,0,0.10);">Quote Tweets</span>
<span class="t" style="left:792.60px;top:492px;font-size:5.0px;color:#1a1a1a;transform:matrix(0.8990,0.0001,0,1,0,0.10);font-weight:700;">78</span>
<span class="t" style="left:799.20px;top:492px;font-size:5.0px;color:#7a7a7a;transform:matrix(0.9338,0.0001,0,1,0,0.10);">Likes</span>

</div>
<div class="r" style="left:27.5px;top:197.75px;width:87.2px;height:0.95px;background:#36b0ea;"></div>
<div class="r" style="left:27.5px;top:241.05px;width:75.6px;height:0.8px;background:#8e8e8e;"></div>
<div class="r" style="left:27.9px;top:130.8px;width:87px;height:0.9px;background:#3aaee6;"></div>
<div class="r" style="left:27.9px;top:173.9px;width:75px;height:0.8px;background:#a4a4a4;"></div>
<div class="r" style="left:27.9px;top:265.05px;width:87px;height:0.9px;background:#3aaee6;"></div>
<div class="r" style="left:27.9px;top:308.1px;width:75px;height:0.8px;background:#a4a4a4;"></div>
<div class="r" style="left:27.9px;top:332.05px;width:87px;height:0.9px;background:#3aaee6;"></div>
<div class="r" style="left:27.9px;top:374.1px;width:75px;height:0.8px;background:#a4a4a4;"></div>
<div class="r" style="left:27.9px;top:399.05px;width:87px;height:0.9px;background:#3aaee6;"></div>
<div class="r" style="left:27.9px;top:441.1px;width:75px;height:0.8px;background:#a4a4a4;"></div>
<div class="r" style="left:27.9px;top:466.05px;width:87px;height:0.9px;background:#3aaee6;"></div>
<div class="r" style="left:27.9px;top:508.1px;width:75px;height:0.8px;background:#a4a4a4;"></div>
<svg class="r" style="left:0;top:0" width="134" height="557" viewBox="0 0 134 557"><defs><filter id="thb" x="0" y="0" width="100%" height="100%"><feGaussianBlur stdDeviation="0.22"/></filter></defs><g filter="url(#thb)"><rect x="74.03" y="128.34" width="31.99" height="1.51" fill="#8f8f8f" opacity="0.44"/><circle cx="78.42" cy="136.37" r="3.39" fill="#3b6f96" opacity="1" stroke="#45b4ea" stroke-width="0.7"/><circle cx="78.42" cy="136.12" r="1.88" fill="#7a5a4a" opacity="0.9"/><rect x="84.32" y="133.98" width="11.67" height="1.25" fill="#6a6a6a" opacity="0.56"/><rect x="84.32" y="136.74" width="16.06" height="0.75" fill="#b0a8a4" opacity="0.44"/><rect x="84.32" y="138.75" width="9.79" height="0.88" fill="#a09a98" opacity="0.44"/><circle cx="78.42" cy="144.52" r="3.39" fill="#3b6f96" opacity="1" stroke="#45b4ea" stroke-width="0.7"/><circle cx="78.42" cy="144.27" r="1.88" fill="#6a5a52" opacity="0.9"/><rect x="84.32" y="142.14" width="11.67" height="1.25" fill="#6a6a6a" opacity="0.56"/><rect x="84.32" y="144.90" width="24.22" height="0.75" fill="#b0a8a4" opacity="0.44"/><rect x="84.32" y="146.91" width="9.79" height="0.88" fill="#a09a98" opacity="0.44"/><circle cx="78.42" cy="152.93" r="3.39" fill="#3b6f96" opacity="1" stroke="#45b4ea" stroke-width="0.7"/><circle cx="78.42" cy="152.68" r="1.88" fill="#80604e" opacity="0.9"/><rect x="84.32" y="150.55" width="11.67" height="1.25" fill="#6a6a6a" opacity="0.56"/><rect x="84.32" y="153.31" width="16.06" height="0.75" fill="#b0a8a4" opacity="0.44"/><rect x="84.32" y="155.31" width="9.79" height="0.88" fill="#a09a98" opacity="0.44"/><circle cx="78.42" cy="160.83" r="3.39" fill="#3b6f96" opacity="1" stroke="#45b4ea" stroke-width="0.7"/><circle cx="78.42" cy="160.58" r="1.88" fill="#9a7460" opacity="0.9"/><rect x="84.32" y="158.45" width="11.67" height="1.25" fill="#6a6a6a" opacity="0.56"/><rect x="84.32" y="161.21" width="16.06" height="0.75" fill="#b0a8a4" opacity="0.44"/><rect x="84.32" y="163.22" width="9.79" height="0.88" fill="#a09a98" opacity="0.44"/><circle cx="78.42" cy="169.24" r="3.39" fill="#3b6f96" opacity="1" stroke="#45b4ea" stroke-width="0.7"/><circle cx="78.42" cy="168.99" r="1.88" fill="#3a2c2a" opacity="0.9"/><rect x="84.32" y="166.86" width="11.67" height="1.25" fill="#6a6a6a" opacity="0.56"/><rect x="84.32" y="169.62" width="16.06" height="0.75" fill="#b0a8a4" opacity="0.44"/><rect x="84.32" y="171.62" width="9.79" height="0.88" fill="#a09a98" opacity="0.44"/><circle cx="105.77" cy="174.39" r="1.00" fill="#3aaee6" opacity="0.8"/><circle cx="106.27" cy="174.39" r="0.63" fill="#fff" opacity="1"/><rect x="107.65" y="173.88" width="7.15" height="0.88" fill="#bdbdbd" opacity="0.4"/><rect x="28.61" y="261.92" width="32.50" height="1.88" fill="#b5a09a" opacity="0.48"/><circle cx="32.87" cy="270.70" r="4.14" fill="#5a4640" opacity="0.92"/><circle cx="33.12" cy="270.08" r="2.26" fill="#c8a898" opacity="0.85"/><rect x="39.15" y="266.94" width="11.04" height="1.25" fill="#5a5a5a" opacity="0.56"/><rect x="39.15" y="268.95" width="7.90" height="0.88" fill="#a08a86" opacity="0.44"/><rect x="39.15" y="270.95" width="15.06" height="1.00" fill="#8a8684" opacity="0.48"/><rect x="39.15" y="272.84" width="11.67" height="1.00" fill="#8a8684" opacity="0.48"/><rect x="39.15" y="274.59" width="11.04" height="0.88" fill="#8a8684" opacity="0.4"/><path d="M23.953 4.57a10 10 0 01-2.825.775 4.958 4.958 0 002.163-2.723c-.951.555-2.005.959-3.127 1.184a4.92 4.92 0 00-8.384 4.482C7.69 8.095 4.067 6.13 1.64 3.162a4.822 4.822 0 00-.666 2.475c0 1.71.87 3.213 2.188 4.096a4.904 4.904 0 01-2.228-.616v.06a4.923 4.923 0 003.946 4.827 4.996 4.996 0 01-2.212.085 4.936 4.936 0 004.604 3.417 9.867 9.867 0 01-6.102 2.105c-.39 0-.779-.023-1.17-.067a13.995 13.995 0 007.557 2.209c9.053 0 13.998-7.496 13.998-13.985 0-.21 0-.42-.015-.63A9.935 9.935 0 0024 4.59z" fill="#1da1f2" transform="translate(56.22,266.54) scale(0.125)"/><rect x="56.34" y="270.95" width="2.76" height="2.76" fill="#1179b8" opacity="1.0"/><rect x="60.85" y="267.06" width="10.04" height="1.13" fill="#6a6a6a" opacity="0.48"/><rect x="60.85" y="268.95" width="5.02" height="0.75" fill="#9a9a9a" opacity="0.4"/><rect x="60.85" y="271.83" width="7.90" height="1.00" fill="#6a6a6a" opacity="0.48"/><rect x="73.15" y="267.06" width="14.68" height="1.13" fill="#7a7a7a" opacity="0.48"/><rect x="73.15" y="269.20" width="1.88" height="0.88" fill="#e0486e" opacity="0.8"/><rect x="73.15" y="271.71" width="14.68" height="1.13" fill="#7a7a7a" opacity="0.48"/><rect x="73.15" y="274.22" width="3.14" height="1.00" fill="#e0486e" opacity="0.8"/><rect x="89.34" y="265.56" width="23.59" height="1.00" fill="#8a8a8a" opacity="0.4"/><circle cx="92.85" cy="270.83" r="3.01" fill="#2a3a58" opacity="1.0"/><circle cx="92.85" cy="270.33" r="1.51" fill="#b08870" opacity="0.85"/><circle cx="95.36" cy="272.58" r="0.88" fill="#c8605a" opacity="0.7"/><rect x="89.34" y="274.84" width="7.03" height="0.75" fill="#7a7a7a" opacity="0.4"/><rect x="89.08" y="276.22" width="7.53" height="0.75" fill="#7a7a7a" opacity="0.36"/><rect x="89.08" y="277.60" width="7.53" height="0.75" fill="#7a7a7a" opacity="0.32"/><circle cx="101.76" cy="270.83" r="3.01" fill="#d8d0c8" opacity="1.0"/><circle cx="101.76" cy="270.33" r="1.51" fill="#a06a48" opacity="0.85"/><circle cx="104.27" cy="272.58" r="0.88" fill="#c8605a" opacity="0.7"/><rect x="98.24" y="274.84" width="7.03" height="0.75" fill="#7a7a7a" opacity="0.4"/><rect x="97.99" y="276.22" width="7.53" height="0.75" fill="#7a7a7a" opacity="0.36"/><rect x="97.99" y="277.60" width="7.53" height="0.75" fill="#7a7a7a" opacity="0.32"/><circle cx="110.66" cy="270.83" r="3.01" fill="#2a2428" opacity="1.0"/><circle cx="110.66" cy="270.33" r="1.51" fill="#c09880" opacity="0.85"/><circle cx="113.17" cy="272.58" r="0.88" fill="#c8605a" opacity="0.7"/><rect x="107.15" y="274.84" width="7.03" height="0.75" fill="#7a7a7a" opacity="0.4"/><rect x="106.90" y="276.22" width="7.53" height="0.75" fill="#7a7a7a" opacity="0.36"/><rect x="106.90" y="277.60" width="7.53" height="0.75" fill="#7a7a7a" opacity="0.32"/><rect x="31.12" y="278.36" width="40.78" height="1.25" fill="#8a8a8a" opacity="0.4"/><rect x="28.11" y="280.74" width="1.25" height="15.06" fill="#8a8a8a" opacity="0.36"/><rect x="31.12" y="281.37" width="1.76" height="0.75" fill="#7a7a7a" opacity="0.32"/><rect x="31.12" y="285.51" width="1.76" height="0.75" fill="#7a7a7a" opacity="0.32"/><rect x="31.12" y="289.65" width="1.76" height="0.75" fill="#7a7a7a" opacity="0.32"/><rect x="31.12" y="293.79" width="1.76" height="0.75" fill="#7a7a7a" opacity="0.32"/><rect x="31.12" y="297.93" width="1.76" height="0.75" fill="#7a7a7a" opacity="0.32"/><rect x="31.12" y="302.07" width="1.76" height="0.75" fill="#7a7a7a" opacity="0.32"/><rect x="33.63" y="302.20" width="47.30" height="0.25" fill="#d0d0d0" opacity="0.9"/><rect x="32.87" y="303.70" width="2.51" height="0.88" fill="#7a7a7a" opacity="0.36"/><rect x="36.83" y="303.70" width="2.51" height="0.88" fill="#7a7a7a" opacity="0.36"/><rect x="40.78" y="303.70" width="2.51" height="0.88" fill="#7a7a7a" opacity="0.36"/><rect x="44.73" y="303.70" width="2.51" height="0.88" fill="#7a7a7a" opacity="0.36"/><rect x="48.68" y="303.70" width="2.51" height="0.88" fill="#7a7a7a" opacity="0.36"/><rect x="52.63" y="303.70" width="2.51" height="0.88" fill="#7a7a7a" opacity="0.36"/><rect x="56.59" y="303.70" width="2.51" height="0.88" fill="#7a7a7a" opacity="0.36"/><rect x="60.54" y="303.70" width="2.51" height="0.88" fill="#7a7a7a" opacity="0.36"/><rect x="64.49" y="303.70" width="2.51" height="0.88" fill="#7a7a7a" opacity="0.36"/><rect x="68.44" y="303.70" width="2.51" height="0.88" fill="#7a7a7a" opacity="0.36"/><rect x="72.40" y="303.70" width="2.51" height="0.88" fill="#7a7a7a" opacity="0.36"/><rect x="76.35" y="303.70" width="2.51" height="0.88" fill="#7a7a7a" opacity="0.36"/><rect x="68.38" y="305.21" width="6.65" height="0.75" fill="#7a7a7a" opacity="0.32"/><polyline points="34.13,290.15 35.13,298.31 37.01,300.19 38.90,295.80 40.15,299.56 42.03,295.17 43.91,298.93 45.80,286.39 46.68,298.93 48.93,300.19 51.44,298.31 53.70,296.17 55.21,300.19 57.97,285.76 58.97,300.19 60.85,301.44 62.36,291.41 63.99,300.19 65.24,301.44 68.38,297.68 69.89,281.99 71.52,298.93 74.03,300.82 75.91,297.68 77.79,300.19 79.67,300.82 80.30,300.19" fill="none" stroke="#2aa7a7" stroke-width="0.72" opacity="1.0" stroke-linejoin="round"/><circle cx="45.80" cy="286.26" r="0.63" fill="#21a3a3" opacity="1.0"/><circle cx="69.89" cy="280.36" r="0.63" fill="#21a3a3" opacity="1.0"/><rect x="84.69" y="279.49" width="24.47" height="25.22" fill="#fff" opacity="1.0"/><circle cx="86.07" cy="280.87" r="0.88" fill="#3a3a3a" opacity="0.8"/><rect x="87.83" y="280.11" width="11.29" height="0.75" fill="#5a5a5a" opacity="0.48"/><path d="M23.953 4.57a10 10 0 01-2.825.775 4.958 4.958 0 002.163-2.723c-.951.555-2.005.959-3.127 1.184a4.92 4.92 0 00-8.384 4.482C7.69 8.095 4.067 6.13 1.64 3.162a4.822 4.822 0 00-.666 2.475c0 1.71.87 3.213 2.188 4.096a4.904 4.904 0 01-2.228-.616v.06a4.923 4.923 0 003.946 4.827 4.996 4.996 0 01-2.212.085 4.936 4.936 0 004.604 3.417 9.867 9.867 0 01-6.102 2.105c-.39 0-.779-.023-1.17-.067a13.995 13.995 0 007.557 2.209c9.053 0 13.998-7.496 13.998-13.985 0-.21 0-.42-.015-.63A9.935 9.935 0 0024 4.59z" fill="#1da1f2" transform="translate(106.65,279.86) scale(0.1)"/><rect x="85.32" y="282.37" width="15.68" height="0.75" fill="#7a7a7a" opacity="0.4"/><rect x="85.32" y="283.63" width="13.80" height="0.63" fill="#58a8e0" opacity="0.44"/><rect x="85.32" y="284.88" width="10.04" height="0.63" fill="#7a7a7a" opacity="0.32"/><rect x="85.32" y="286.39" width="15.06" height="0.75" fill="#6a6a6a" opacity="0.44"/><rect x="85.32" y="287.64" width="20.08" height="0.75" fill="#58a8e0" opacity="0.4"/><rect x="85.32" y="289.90" width="3.14" height="5.90" fill="#f0b8a8" opacity="0.56"/><rect x="89.71" y="289.90" width="3.39" height="5.90" fill="#e8d8c0" opacity="0.56"/><rect x="94.10" y="289.90" width="3.14" height="5.90" fill="#f0a898" opacity="0.56"/><rect x="99.12" y="289.90" width="9.79" height="4.27" fill="#f4d8d0" opacity="0.56"/><rect x="100.38" y="291.41" width="6.27" height="1.88" fill="#e89080" opacity="0.48"/><rect x="85.32" y="296.68" width="23.59" height="1.25" fill="#a8d0e8" opacity="0.48"/><rect x="94.10" y="296.93" width="6.27" height="0.75" fill="#3a9ad8" opacity="0.48"/><rect x="85.32" y="299.18" width="7.53" height="0.75" fill="#8a8a8a" opacity="0.32"/><rect x="85.32" y="300.82" width="6.27" height="0.63" fill="#8a8a8a" opacity="0.32"/><rect x="85.32" y="303.20" width="11.29" height="0.75" fill="#6a6a6a" opacity="0.4"/><rect x="76.54" y="306.21" width="19.45" height="0.88" fill="#8a8a8a" opacity="0.36"/><circle cx="105.77" cy="308.09" r="1.00" fill="#3aaee6" opacity="0.8"/><circle cx="106.27" cy="308.09" r="0.63" fill="#fff" opacity="1"/><rect x="107.65" y="307.59" width="7.15" height="0.88" fill="#bdbdbd" opacity="0.4"/><rect x="28.61" y="328.55" width="30.99" height="1.88" fill="#b5a09a" opacity="0.48"/><circle cx="32.87" cy="337.33" r="4.14" fill="#3a3234" opacity="0.92"/><circle cx="33.12" cy="336.71" r="2.26" fill="#c09880" opacity="0.85"/><rect x="39.15" y="333.57" width="11.04" height="1.25" fill="#5a5a5a" opacity="0.56"/><rect x="39.15" y="335.58" width="7.90" height="0.88" fill="#a08a86" opacity="0.44"/><rect x="39.15" y="337.58" width="15.06" height="1.00" fill="#8a8684" opacity="0.48"/><rect x="39.15" y="339.47" width="11.67" height="1.00" fill="#8a8684" opacity="0.48"/><rect x="39.15" y="341.22" width="11.04" height="0.88" fill="#8a8684" opacity="0.4"/><path d="M23.953 4.57a10 10 0 01-2.825.775 4.958 4.958 0 002.163-2.723c-.951.555-2.005.959-3.127 1.184a4.92 4.92 0 00-8.384 4.482C7.69 8.095 4.067 6.13 1.64 3.162a4.822 4.822 0 00-.666 2.475c0 1.71.87 3.213 2.188 4.096a4.904 4.904 0 01-2.228-.616v.06a4.923 4.923 0 003.946 4.827 4.996 4.996 0 01-2.212.085 4.936 4.936 0 004.604 3.417 9.867 9.867 0 01-6.102 2.105c-.39 0-.779-.023-1.17-.067a13.995 13.995 0 007.557 2.209c9.053 0 13.998-7.496 13.998-13.985 0-.21 0-.42-.015-.63A9.935 9.935 0 0024 4.59z" fill="#1da1f2" transform="translate(56.22,333.17) scale(0.125)"/><rect x="56.34" y="337.58" width="2.76" height="2.76" fill="#1179b8" opacity="1.0"/><rect x="56.34" y="338.21" width="2.76" height="2.51" fill="#e8505a" opacity="0.8"/><circle cx="57.72" cy="342.35" r="1.25" fill="#58b4e8" opacity="0.9"/><rect x="60.85" y="333.70" width="10.04" height="1.13" fill="#6a6a6a" opacity="0.48"/><rect x="60.85" y="335.58" width="5.02" height="0.75" fill="#9a9a9a" opacity="0.4"/><rect x="60.85" y="338.46" width="7.90" height="1.00" fill="#6a6a6a" opacity="0.48"/><rect x="73.15" y="333.70" width="14.68" height="1.13" fill="#7a7a7a" opacity="0.48"/><rect x="73.15" y="335.83" width="1.88" height="0.88" fill="#e0486e" opacity="0.8"/><rect x="73.15" y="338.34" width="14.68" height="1.13" fill="#7a7a7a" opacity="0.48"/><rect x="73.15" y="340.85" width="3.14" height="1.00" fill="#e0486e" opacity="0.8"/><rect x="89.34" y="332.19" width="23.59" height="1.00" fill="#8a8a8a" opacity="0.4"/><circle cx="92.85" cy="337.46" r="3.01" fill="#2a2628" opacity="1.0"/><circle cx="92.85" cy="336.96" r="1.51" fill="#b89a90" opacity="0.85"/><circle cx="95.36" cy="339.22" r="0.88" fill="#c8605a" opacity="0.7"/><rect x="89.34" y="341.47" width="7.03" height="0.75" fill="#7a7a7a" opacity="0.4"/><rect x="89.08" y="342.85" width="7.53" height="0.75" fill="#7a7a7a" opacity="0.36"/><rect x="89.08" y="344.23" width="7.53" height="0.75" fill="#7a7a7a" opacity="0.32"/><circle cx="101.76" cy="337.46" r="3.01" fill="#c8a890" opacity="1.0"/><circle cx="101.76" cy="336.96" r="1.51" fill="#8a5a40" opacity="0.85"/><circle cx="104.27" cy="339.22" r="0.88" fill="#c8605a" opacity="0.7"/><rect x="98.24" y="341.47" width="7.03" height="0.75" fill="#7a7a7a" opacity="0.4"/><rect x="97.99" y="342.85" width="7.53" height="0.75" fill="#7a7a7a" opacity="0.36"/><rect x="97.99" y="344.23" width="7.53" height="0.75" fill="#7a7a7a" opacity="0.32"/><circle cx="110.66" cy="337.46" r="3.01" fill="#f0ece8" opacity="1.0"/><circle cx="110.66" cy="336.96" r="1.51" fill="#c89a78" opacity="0.85"/><circle cx="113.17" cy="339.22" r="0.88" fill="#c8605a" opacity="0.7"/><rect x="107.15" y="341.47" width="7.03" height="0.75" fill="#7a7a7a" opacity="0.4"/><rect x="106.90" y="342.85" width="7.53" height="0.75" fill="#7a7a7a" opacity="0.36"/><rect x="106.90" y="344.23" width="7.53" height="0.75" fill="#7a7a7a" opacity="0.32"/><rect x="31.12" y="344.99" width="40.78" height="1.25" fill="#8a8a8a" opacity="0.4"/><rect x="28.11" y="347.37" width="1.25" height="15.06" fill="#8a8a8a" opacity="0.36"/><rect x="31.12" y="348.00" width="1.76" height="0.75" fill="#7a7a7a" opacity="0.32"/><rect x="31.12" y="352.14" width="1.76" height="0.75" fill="#7a7a7a" opacity="0.32"/><rect x="31.12" y="356.28" width="1.76" height="0.75" fill="#7a7a7a" opacity="0.32"/><rect x="31.12" y="360.42" width="1.76" height="0.75" fill="#7a7a7a" opacity="0.32"/><rect x="31.12" y="364.56" width="1.76" height="0.75" fill="#7a7a7a" opacity="0.32"/><rect x="31.12" y="368.70" width="1.76" height="0.75" fill="#7a7a7a" opacity="0.32"/><rect x="33.63" y="368.83" width="47.30" height="0.25" fill="#d0d0d0" opacity="0.9"/><rect x="32.87" y="370.33" width="2.51" height="0.88" fill="#7a7a7a" opacity="0.36"/><rect x="36.83" y="370.33" width="2.51" height="0.88" fill="#7a7a7a" opacity="0.36"/><rect x="40.78" y="370.33" width="2.51" height="0.88" fill="#7a7a7a" opacity="0.36"/><rect x="44.73" y="370.33" width="2.51" height="0.88" fill="#7a7a7a" opacity="0.36"/><rect x="48.68" y="370.33" width="2.51" height="0.88" fill="#7a7a7a" opacity="0.36"/><rect x="52.63" y="370.33" width="2.51" height="0.88" fill="#7a7a7a" opacity="0.36"/><rect x="56.59" y="370.33" width="2.51" height="0.88" fill="#7a7a7a" opacity="0.36"/><rect x="60.54" y="370.33" width="2.51" height="0.88" fill="#7a7a7a" opacity="0.36"/><rect x="64.49" y="370.33" width="2.51" height="0.88" fill="#7a7a7a" opacity="0.36"/><rect x="68.44" y="370.33" width="2.51" height="0.88" fill="#7a7a7a" opacity="0.36"/><rect x="72.40" y="370.33" width="2.51" height="0.88" fill="#7a7a7a" opacity="0.36"/><rect x="76.35" y="370.33" width="2.51" height="0.88" fill="#7a7a7a" opacity="0.36"/><rect x="68.38" y="371.84" width="6.65" height="0.75" fill="#7a7a7a" opacity="0.32"/><polyline points="34.13,367.70 35.13,365.82 37.01,367.70 37.64,365.19 40.15,367.70 43.29,367.70 45.42,347.87 46.68,352.64 47.68,367.07 50.19,368.32 53.95,367.70 56.46,364.56 58.97,363.93 61.48,362.68 62.74,366.44 64.62,363.31 65.87,365.19 67.75,366.44 69.64,353.90 70.89,365.82 72.77,367.70 75.28,365.19 77.16,362.68 78.42,365.19 80.30,368.32" fill="none" stroke="#2aa7a7" stroke-width="0.72" opacity="1.0" stroke-linejoin="round"/><circle cx="45.42" cy="346.87" r="0.63" fill="#21a3a3" opacity="1.0"/><circle cx="69.64" cy="351.26" r="0.63" fill="#21a3a3" opacity="1.0"/><rect x="85.07" y="345.74" width="23.84" height="26.35" fill="#262626" opacity="1.0"/><rect x="86.57" y="346.62" width="21.33" height="0.75" fill="#8a8a9a" opacity="0.48"/><rect x="86.57" y="348.12" width="21.33" height="0.63" fill="#7a7a8a" opacity="0.4"/><rect x="86.57" y="349.63" width="20.08" height="0.63" fill="#7a7a8a" opacity="0.4"/><rect x="86.57" y="351.14" width="21.33" height="0.63" fill="#7a7a8a" opacity="0.4"/><rect x="86.57" y="352.64" width="21.33" height="0.63" fill="#7a7a8a" opacity="0.4"/><rect x="86.57" y="354.15" width="17.57" height="0.75" fill="#7a7a8a" opacity="0.4"/><rect x="92.85" y="352.14" width="2.51" height="0.75" fill="#4a80e0" opacity="0.8"/><rect x="99.75" y="355.40" width="1.88" height="0.75" fill="#e8e8e8" opacity="0.8"/><rect x="86.57" y="357.41" width="21.33" height="12.80" fill="#fafafa" opacity="1.0"/><rect x="89.71" y="358.29" width="15.06" height="0.50" fill="#6a6a6a" opacity="0.36"/><rect x="89.71" y="359.47" width="15.06" height="0.50" fill="#6a6a6a" opacity="0.36"/><rect x="89.71" y="360.65" width="15.06" height="0.50" fill="#6a6a6a" opacity="0.36"/><rect x="89.71" y="361.83" width="15.06" height="0.50" fill="#6a6a6a" opacity="0.36"/><rect x="89.71" y="363.01" width="15.06" height="0.50" fill="#6a6a6a" opacity="0.36"/><rect x="89.71" y="364.18" width="15.06" height="0.50" fill="#6a6a6a" opacity="0.36"/><rect x="89.71" y="365.36" width="15.06" height="0.50" fill="#6a6a6a" opacity="0.36"/><rect x="89.71" y="366.54" width="15.06" height="0.50" fill="#6a6a6a" opacity="0.36"/><rect x="89.71" y="367.72" width="15.06" height="0.50" fill="#6a6a6a" opacity="0.36"/><rect x="89.71" y="368.90" width="15.06" height="0.50" fill="#6a6a6a" opacity="0.36"/><path d="M23.953 4.57a10 10 0 01-2.825.775 4.958 4.958 0 002.163-2.723c-.951.555-2.005.959-3.127 1.184a4.92 4.92 0 00-8.384 4.482C7.69 8.095 4.067 6.13 1.64 3.162a4.822 4.822 0 00-.666 2.475c0 1.71.87 3.213 2.188 4.096a4.904 4.904 0 01-2.228-.616v.06a4.923 4.923 0 003.946 4.827 4.996 4.996 0 01-2.212.085 4.936 4.936 0 004.604 3.417 9.867 9.867 0 01-6.102 2.105c-.39 0-.779-.023-1.17-.067a13.995 13.995 0 007.557 2.209c9.053 0 13.998-7.496 13.998-13.985 0-.21 0-.42-.015-.63A9.935 9.935 0 0024 4.59z" fill="#58b4e8" transform="translate(109.91,346.37) scale(0.09)"/><rect x="76.54" y="372.84" width="19.45" height="0.88" fill="#8a8a8a" opacity="0.36"/><circle cx="105.77" cy="374.72" r="1.00" fill="#3aaee6" opacity="0.8"/><circle cx="106.27" cy="374.72" r="0.63" fill="#fff" opacity="1"/><rect x="107.65" y="374.22" width="7.15" height="0.88" fill="#bdbdbd" opacity="0.4"/><rect x="28.61" y="395.55" width="35.38" height="1.88" fill="#b5a09a" opacity="0.48"/><circle cx="32.87" cy="404.33" r="4.14" fill="#8a5a48" opacity="0.92"/><circle cx="33.12" cy="403.71" r="2.26" fill="#d8a888" opacity="0.85"/><rect x="39.15" y="400.57" width="11.04" height="1.25" fill="#5a5a5a" opacity="0.56"/><rect x="39.15" y="402.58" width="7.90" height="0.88" fill="#a08a86" opacity="0.44"/><rect x="39.15" y="404.58" width="15.06" height="1.00" fill="#8a8684" opacity="0.48"/><rect x="39.15" y="406.47" width="11.67" height="1.00" fill="#8a8684" opacity="0.48"/><path d="M23.953 4.57a10 10 0 01-2.825.775 4.958 4.958 0 002.163-2.723c-.951.555-2.005.959-3.127 1.184a4.92 4.92 0 00-8.384 4.482C7.69 8.095 4.067 6.13 1.64 3.162a4.822 4.822 0 00-.666 2.475c0 1.71.87 3.213 2.188 4.096a4.904 4.904 0 01-2.228-.616v.06a4.923 4.923 0 003.946 4.827 4.996 4.996 0 01-2.212.085 4.936 4.936 0 004.604 3.417 9.867 9.867 0 01-6.102 2.105c-.39 0-.779-.023-1.17-.067a13.995 13.995 0 007.557 2.209c9.053 0 13.998-7.496 13.998-13.985 0-.21 0-.42-.015-.63A9.935 9.935 0 0024 4.59z" fill="#1da1f2" transform="translate(56.22,400.17) scale(0.125)"/><rect x="56.34" y="404.58" width="2.76" height="2.76" fill="#1179b8" opacity="1.0"/><rect x="60.85" y="400.70" width="10.04" height="1.13" fill="#6a6a6a" opacity="0.48"/><rect x="60.85" y="402.58" width="5.02" height="0.75" fill="#9a9a9a" opacity="0.4"/><rect x="60.85" y="405.46" width="7.90" height="1.00" fill="#6a6a6a" opacity="0.48"/><rect x="73.15" y="400.70" width="14.68" height="1.13" fill="#7a7a7a" opacity="0.48"/><rect x="73.15" y="402.83" width="1.88" height="0.88" fill="#e0486e" opacity="0.8"/><rect x="73.15" y="405.34" width="14.68" height="1.13" fill="#7a7a7a" opacity="0.48"/><rect x="73.15" y="407.85" width="3.14" height="1.00" fill="#e0486e" opacity="0.8"/><rect x="89.34" y="399.19" width="23.59" height="1.00" fill="#8a8a8a" opacity="0.4"/><circle cx="92.85" cy="404.46" r="3.01" fill="#d8c8b8" opacity="1.0"/><circle cx="92.85" cy="403.96" r="1.51" fill="#b07850" opacity="0.85"/><circle cx="95.36" cy="406.22" r="0.88" fill="#c8605a" opacity="0.7"/><rect x="89.34" y="408.47" width="7.03" height="0.75" fill="#7a7a7a" opacity="0.4"/><rect x="89.08" y="409.85" width="7.53" height="0.75" fill="#7a7a7a" opacity="0.36"/><rect x="89.08" y="411.23" width="7.53" height="0.75" fill="#7a7a7a" opacity="0.32"/><circle cx="101.76" cy="404.46" r="3.01" fill="#4a4448" opacity="1.0"/><circle cx="101.76" cy="403.96" r="1.51" fill="#c8c0b8" opacity="0.85"/><circle cx="104.27" cy="406.22" r="0.88" fill="#c8605a" opacity="0.7"/><rect x="98.24" y="408.47" width="7.03" height="0.75" fill="#7a7a7a" opacity="0.4"/><rect x="97.99" y="409.85" width="7.53" height="0.75" fill="#7a7a7a" opacity="0.36"/><rect x="97.99" y="411.23" width="7.53" height="0.75" fill="#7a7a7a" opacity="0.32"/><circle cx="110.66" cy="404.46" r="3.01" fill="#e8d8cc" opacity="1.0"/><circle cx="110.66" cy="403.96" r="1.51" fill="#d8a890" opacity="0.85"/><circle cx="113.17" cy="406.22" r="0.88" fill="#c8605a" opacity="0.7"/><rect x="107.15" y="408.47" width="7.03" height="0.75" fill="#7a7a7a" opacity="0.4"/><rect x="106.90" y="409.85" width="7.53" height="0.75" fill="#7a7a7a" opacity="0.36"/><rect x="106.90" y="411.23" width="7.53" height="0.75" fill="#7a7a7a" opacity="0.32"/><rect x="31.12" y="411.99" width="40.78" height="1.25" fill="#8a8a8a" opacity="0.4"/><rect x="28.11" y="414.37" width="1.25" height="15.06" fill="#8a8a8a" opacity="0.36"/><rect x="31.12" y="415.00" width="1.76" height="0.75" fill="#7a7a7a" opacity="0.32"/><rect x="31.12" y="419.14" width="1.76" height="0.75" fill="#7a7a7a" opacity="0.32"/><rect x="31.12" y="423.28" width="1.76" height="0.75" fill="#7a7a7a" opacity="0.32"/><rect x="31.12" y="427.42" width="1.76" height="0.75" fill="#7a7a7a" opacity="0.32"/><rect x="31.12" y="431.56" width="1.76" height="0.75" fill="#7a7a7a" opacity="0.32"/><rect x="31.12" y="435.70" width="1.76" height="0.75" fill="#7a7a7a" opacity="0.32"/><rect x="33.63" y="435.83" width="47.30" height="0.25" fill="#d0d0d0" opacity="0.9"/><rect x="32.87" y="437.33" width="2.51" height="0.88" fill="#7a7a7a" opacity="0.36"/><rect x="36.83" y="437.33" width="2.51" height="0.88" fill="#7a7a7a" opacity="0.36"/><rect x="40.78" y="437.33" width="2.51" height="0.88" fill="#7a7a7a" opacity="0.36"/><rect x="44.73" y="437.33" width="2.51" height="0.88" fill="#7a7a7a" opacity="0.36"/><rect x="48.68" y="437.33" width="2.51" height="0.88" fill="#7a7a7a" opacity="0.36"/><rect x="52.63" y="437.33" width="2.51" height="0.88" fill="#7a7a7a" opacity="0.36"/><rect x="56.59" y="437.33" width="2.51" height="0.88" fill="#7a7a7a" opacity="0.36"/><rect x="60.54" y="437.33" width="2.51" height="0.88" fill="#7a7a7a" opacity="0.36"/><rect x="64.49" y="437.33" width="2.51" height="0.88" fill="#7a7a7a" opacity="0.36"/><rect x="68.44" y="437.33" width="2.51" height="0.88" fill="#7a7a7a" opacity="0.36"/><rect x="72.40" y="437.33" width="2.51" height="0.88" fill="#7a7a7a" opacity="0.36"/><rect x="76.35" y="437.33" width="2.51" height="0.88" fill="#7a7a7a" opacity="0.36"/><rect x="68.38" y="438.84" width="6.65" height="0.75" fill="#7a7a7a" opacity="0.32"/><polyline points="33.88,435.32 35.13,434.45 37.64,435.32 40.15,434.70 43.29,432.19 44.54,433.44 45.55,419.64 46.68,424.66 47.68,434.07 48.93,432.82 50.19,427.80 51.44,434.70 55.21,435.32 57.09,434.70 58.34,426.54 59.22,434.70 62.74,434.70 65.24,432.19 67.13,433.44 68.76,434.70 70.01,416.13 71.27,432.19 72.77,434.70 76.54,434.95 80.30,435.32" fill="none" stroke="#2aa7a7" stroke-width="0.72" opacity="1.0" stroke-linejoin="round"/><circle cx="45.55" cy="418.64" r="0.63" fill="#21a3a3" opacity="1.0"/><circle cx="50.19" cy="423.66" r="0.63" fill="#21a3a3" opacity="1.0"/><circle cx="58.34" cy="425.16" r="0.63" fill="#21a3a3" opacity="1.0"/><circle cx="70.01" cy="415.12" r="0.63" fill="#21a3a3" opacity="1.0"/><rect x="85.95" y="412.74" width="25.09" height="25.47" fill="#fff" opacity="1.0"/><circle cx="87.45" cy="414.37" r="0.88" fill="#2a2a2a" opacity="0.8"/><rect x="89.08" y="413.49" width="7.53" height="0.75" fill="#5a5a5a" opacity="0.48"/><rect x="108.16" y="413.37" width="2.26" height="2.26" fill="#3ab0c8" opacity="0.85"/><rect x="86.57" y="416.38" width="22.58" height="0.75" fill="#8a8a8a" opacity="0.32"/><rect x="86.57" y="419.64" width="23.84" height="0.75" fill="#7a7a7a" opacity="0.36"/><rect x="86.57" y="420.90" width="20.08" height="0.63" fill="#58a8e0" opacity="0.32"/><rect x="86.57" y="422.40" width="6.27" height="0.63" fill="#58a8e0" opacity="0.32"/><rect x="85.95" y="424.03" width="24.72" height="13.80" fill="#0c0c10" opacity="1.0"/><circle cx="92.85" cy="428.68" r="3.51" fill="#a8683c" opacity="0.95"/><circle cx="92.85" cy="427.42" r="1.88" fill="#e0b08a" opacity="0.9"/><rect x="88.46" y="432.19" width="8.78" height="5.02" fill="#1a3a5a" opacity="0.9"/><circle cx="91.59" cy="434.70" r="0.75" fill="#30b0a0" opacity="0.8"/><circle cx="93.85" cy="435.70" r="0.63" fill="#30b0a0" opacity="0.7"/><circle cx="101.38" cy="426.17" r="1.13" fill="#d8d8d8" opacity="0.8"/><rect x="99.12" y="428.17" width="8.78" height="0.75" fill="#e0e0e0" opacity="0.56"/><rect x="99.12" y="429.68" width="7.53" height="0.63" fill="#b0b0b0" opacity="0.48"/><rect x="99.12" y="431.18" width="9.54" height="0.75" fill="#c8c8c8" opacity="0.48"/><rect x="108.91" y="424.66" width="1.51" height="1.51" fill="#3ab0c8" opacity="0.8"/><rect x="102.89" y="435.95" width="2.51" height="1.00" fill="#d0d0d0" opacity="0.48"/><rect x="76.54" y="439.84" width="19.45" height="0.88" fill="#8a8a8a" opacity="0.36"/><circle cx="105.77" cy="441.72" r="1.00" fill="#3aaee6" opacity="0.8"/><circle cx="106.27" cy="441.72" r="0.63" fill="#fff" opacity="1"/><rect x="107.65" y="441.22" width="7.15" height="0.88" fill="#bdbdbd" opacity="0.4"/><rect x="28.61" y="462.55" width="48.56" height="1.88" fill="#b5a09a" opacity="0.48"/><circle cx="32.87" cy="471.33" r="4.14" fill="#d9d3cd" opacity="0.92"/><circle cx="33.12" cy="470.71" r="2.26" fill="#4a3b38" opacity="0.85"/><rect x="39.15" y="467.57" width="11.04" height="1.25" fill="#5a5a5a" opacity="0.56"/><rect x="39.15" y="469.58" width="7.90" height="0.88" fill="#a08a86" opacity="0.44"/><rect x="39.15" y="471.58" width="15.06" height="1.00" fill="#8a8684" opacity="0.48"/><rect x="39.15" y="473.47" width="11.67" height="1.00" fill="#8a8684" opacity="0.48"/><rect x="39.15" y="475.22" width="11.04" height="0.88" fill="#8a8684" opacity="0.4"/><path d="M23.953 4.57a10 10 0 01-2.825.775 4.958 4.958 0 002.163-2.723c-.951.555-2.005.959-3.127 1.184a4.92 4.92 0 00-8.384 4.482C7.69 8.095 4.067 6.13 1.64 3.162a4.822 4.822 0 00-.666 2.475c0 1.71.87 3.213 2.188 4.096a4.904 4.904 0 01-2.228-.616v.06a4.923 4.923 0 003.946 4.827 4.996 4.996 0 01-2.212.085 4.936 4.936 0 004.604 3.417 9.867 9.867 0 01-6.102 2.105c-.39 0-.779-.023-1.17-.067a13.995 13.995 0 007.557 2.209c9.053 0 13.998-7.496 13.998-13.985 0-.21 0-.42-.015-.63A9.935 9.935 0 0024 4.59z" fill="#1da1f2" transform="translate(56.22,467.17) scale(0.125)"/><rect x="56.34" y="471.58" width="2.76" height="2.76" fill="#1179b8" opacity="1.0"/><rect x="60.85" y="467.70" width="10.04" height="1.13" fill="#6a6a6a" opacity="0.48"/><rect x="60.85" y="469.58" width="5.02" height="0.75" fill="#9a9a9a" opacity="0.4"/><rect x="60.85" y="472.46" width="7.90" height="1.00" fill="#6a6a6a" opacity="0.48"/><rect x="73.15" y="467.70" width="14.68" height="1.13" fill="#7a7a7a" opacity="0.48"/><rect x="73.15" y="469.83" width="1.88" height="0.88" fill="#e0486e" opacity="0.8"/><rect x="73.15" y="472.34" width="14.68" height="1.13" fill="#7a7a7a" opacity="0.48"/><rect x="73.15" y="474.85" width="3.14" height="1.00" fill="#e0486e" opacity="0.8"/><rect x="89.34" y="466.19" width="23.59" height="1.00" fill="#8a8a8a" opacity="0.4"/><circle cx="92.85" cy="471.46" r="3.01" fill="#e8e4e0" opacity="1.0"/><circle cx="92.85" cy="470.96" r="1.51" fill="#5a5a5a" opacity="0.85"/><circle cx="95.36" cy="473.22" r="0.88" fill="#c8605a" opacity="0.7"/><rect x="89.34" y="475.47" width="7.03" height="0.75" fill="#7a7a7a" opacity="0.4"/><rect x="89.08" y="476.85" width="7.53" height="0.75" fill="#7a7a7a" opacity="0.36"/><rect x="89.08" y="478.23" width="7.53" height="0.75" fill="#7a7a7a" opacity="0.32"/><circle cx="101.76" cy="471.46" r="3.01" fill="#d0ccc8" opacity="1.0"/><circle cx="101.76" cy="470.96" r="1.51" fill="#6a5a58" opacity="0.85"/><circle cx="104.27" cy="473.22" r="0.88" fill="#c8605a" opacity="0.7"/><rect x="98.24" y="475.47" width="7.03" height="0.75" fill="#7a7a7a" opacity="0.4"/><rect x="97.99" y="476.85" width="7.53" height="0.75" fill="#7a7a7a" opacity="0.36"/><rect x="97.99" y="478.23" width="7.53" height="0.75" fill="#7a7a7a" opacity="0.32"/><circle cx="110.66" cy="471.46" r="3.01" fill="#e8d0c0" opacity="1.0"/><circle cx="110.66" cy="470.96" r="1.51" fill="#b87858" opacity="0.85"/><circle cx="113.17" cy="473.22" r="0.88" fill="#c8605a" opacity="0.7"/><rect x="107.15" y="475.47" width="7.03" height="0.75" fill="#7a7a7a" opacity="0.4"/><rect x="106.90" y="476.85" width="7.53" height="0.75" fill="#7a7a7a" opacity="0.36"/><rect x="106.90" y="478.23" width="7.53" height="0.75" fill="#7a7a7a" opacity="0.32"/><rect x="31.12" y="478.99" width="40.78" height="1.25" fill="#8a8a8a" opacity="0.4"/><rect x="28.11" y="481.37" width="1.25" height="15.06" fill="#8a8a8a" opacity="0.36"/><rect x="31.12" y="482.00" width="1.76" height="0.75" fill="#7a7a7a" opacity="0.32"/><rect x="31.12" y="486.14" width="1.76" height="0.75" fill="#7a7a7a" opacity="0.32"/><rect x="31.12" y="490.28" width="1.76" height="0.75" fill="#7a7a7a" opacity="0.32"/><rect x="31.12" y="494.42" width="1.76" height="0.75" fill="#7a7a7a" opacity="0.32"/><rect x="31.12" y="498.56" width="1.76" height="0.75" fill="#7a7a7a" opacity="0.32"/><rect x="31.12" y="502.70" width="1.76" height="0.75" fill="#7a7a7a" opacity="0.32"/><rect x="33.63" y="502.83" width="47.30" height="0.25" fill="#d0d0d0" opacity="0.9"/><rect x="32.87" y="504.33" width="2.51" height="0.88" fill="#7a7a7a" opacity="0.36"/><rect x="36.83" y="504.33" width="2.51" height="0.88" fill="#7a7a7a" opacity="0.36"/><rect x="40.78" y="504.33" width="2.51" height="0.88" fill="#7a7a7a" opacity="0.36"/><rect x="44.73" y="504.33" width="2.51" height="0.88" fill="#7a7a7a" opacity="0.36"/><rect x="48.68" y="504.33" width="2.51" height="0.88" fill="#7a7a7a" opacity="0.36"/><rect x="52.63" y="504.33" width="2.51" height="0.88" fill="#7a7a7a" opacity="0.36"/><rect x="56.59" y="504.33" width="2.51" height="0.88" fill="#7a7a7a" opacity="0.36"/><rect x="60.54" y="504.33" width="2.51" height="0.88" fill="#7a7a7a" opacity="0.36"/><rect x="64.49" y="504.33" width="2.51" height="0.88" fill="#7a7a7a" opacity="0.36"/><rect x="68.44" y="504.33" width="2.51" height="0.88" fill="#7a7a7a" opacity="0.36"/><rect x="72.40" y="504.33" width="2.51" height="0.88" fill="#7a7a7a" opacity="0.36"/><rect x="76.35" y="504.33" width="2.51" height="0.88" fill="#7a7a7a" opacity="0.36"/><rect x="68.38" y="505.84" width="6.65" height="0.75" fill="#7a7a7a" opacity="0.32"/><polyline points="33.88,499.82 35.13,501.95 37.64,500.44 40.15,501.07 42.66,498.56 44.54,495.42 45.55,480.99 46.68,490.41 47.68,501.07 50.19,500.44 53.95,499.82 56.46,500.69 58.97,499.19 60.23,497.31 61.10,489.78 62.11,497.93 63.36,500.44 66.50,500.69 69.01,501.45 70.89,500.69 72.77,502.32 76.54,501.95 79.05,500.44 80.30,501.70" fill="none" stroke="#2aa7a7" stroke-width="0.72" opacity="1.0" stroke-linejoin="round"/><circle cx="45.55" cy="479.99" r="0.63" fill="#21a3a3" opacity="1.0"/><circle cx="61.10" cy="488.77" r="0.63" fill="#21a3a3" opacity="1.0"/><rect x="84.69" y="478.49" width="24.47" height="28.23" fill="#fff" opacity="1.0"/><circle cx="86.07" cy="479.87" r="0.88" fill="#3a3a3a" opacity="0.8"/><rect x="87.83" y="479.11" width="16.31" height="0.75" fill="#5a5a5a" opacity="0.48"/><path d="M23.953 4.57a10 10 0 01-2.825.775 4.958 4.958 0 002.163-2.723c-.951.555-2.005.959-3.127 1.184a4.92 4.92 0 00-8.384 4.482C7.69 8.095 4.067 6.13 1.64 3.162a4.822 4.822 0 00-.666 2.475c0 1.71.87 3.213 2.188 4.096a4.904 4.904 0 01-2.228-.616v.06a4.923 4.923 0 003.946 4.827 4.996 4.996 0 01-2.212.085 4.936 4.936 0 004.604 3.417 9.867 9.867 0 01-6.102 2.105c-.39 0-.779-.023-1.17-.067a13.995 13.995 0 007.557 2.209c9.053 0 13.998-7.496 13.998-13.985 0-.21 0-.42-.015-.63A9.935 9.935 0 0024 4.59z" fill="#1da1f2" transform="translate(106.65,478.86) scale(0.1)"/><rect x="85.32" y="481.87" width="22.58" height="0.75" fill="#7a7a7a" opacity="0.4"/><rect x="85.32" y="483.38" width="20.08" height="0.63" fill="#58a8e0" opacity="0.4"/><rect x="85.32" y="484.88" width="22.58" height="0.75" fill="#58a8e0" opacity="0.4"/><rect x="85.32" y="486.26" width="15.06" height="0.63" fill="#7a7a7a" opacity="0.32"/><rect x="85.07" y="487.90" width="23.84" height="13.17" fill="#6a6a66" opacity="1.0"/><rect x="85.07" y="487.90" width="23.84" height="3.76" fill="#5a8a30" opacity="1.0"/><rect x="85.07" y="488.90" width="23.84" height="1.00" fill="#7aa83a" opacity="0.9"/><rect x="85.07" y="491.66" width="23.84" height="6.52" fill="#2a2626" opacity="1.0"/><circle cx="86.83" cy="493.17" r="0.88" fill="#c89878" opacity="0.9"/><rect x="85.82" y="494.42" width="2.01" height="3.26" fill="#e8e8e8" opacity="0.85"/><circle cx="89.46" cy="493.92" r="0.88" fill="#c89878" opacity="0.9"/><rect x="88.46" y="494.42" width="2.01" height="3.26" fill="#1a1a1a" opacity="0.85"/><circle cx="92.10" cy="493.17" r="0.88" fill="#c89878" opacity="0.9"/><rect x="91.09" y="494.42" width="2.01" height="3.26" fill="#b03030" opacity="0.85"/><circle cx="94.73" cy="493.92" r="0.88" fill="#c89878" opacity="0.9"/><rect x="93.73" y="494.42" width="2.01" height="3.26" fill="#2a3a5a" opacity="0.85"/><circle cx="97.37" cy="493.17" r="0.88" fill="#c89878" opacity="0.9"/><rect x="96.36" y="494.42" width="2.01" height="3.26" fill="#d8d8d8" opacity="0.85"/><circle cx="100.00" cy="493.92" r="0.88" fill="#c89878" opacity="0.9"/><rect x="99.00" y="494.42" width="2.01" height="3.26" fill="#1a1a1a" opacity="0.85"/><circle cx="102.63" cy="493.17" r="0.88" fill="#c89878" opacity="0.9"/><rect x="101.63" y="494.42" width="2.01" height="3.26" fill="#e0e0e0" opacity="0.85"/><circle cx="105.27" cy="493.92" r="0.88" fill="#c89878" opacity="0.9"/><rect x="104.27" y="494.42" width="2.01" height="3.26" fill="#3a2a2a" opacity="0.85"/><circle cx="107.90" cy="493.17" r="0.88" fill="#c89878" opacity="0.9"/><rect x="106.90" y="494.42" width="2.01" height="3.26" fill="#c8c8c8" opacity="0.85"/><rect x="85.07" y="498.18" width="23.84" height="2.89" fill="#8a8884" opacity="1.0"/><rect x="106.65" y="491.66" width="2.26" height="2.51" fill="#3a8ad8" opacity="0.8"/><rect x="85.32" y="502.70" width="11.29" height="0.75" fill="#6a6a6a" opacity="0.4"/><rect x="85.32" y="504.96" width="10.04" height="0.75" fill="#8a8a8a" opacity="0.32"/><rect x="76.54" y="506.84" width="19.45" height="0.88" fill="#8a8a8a" opacity="0.36"/><circle cx="105.77" cy="508.72" r="1.00" fill="#3aaee6" opacity="0.8"/><circle cx="106.27" cy="508.72" r="0.63" fill="#fff" opacity="1"/><rect x="107.65" y="508.22" width="7.15" height="0.88" fill="#bdbdbd" opacity="0.4"/></g></svg>
<span class="t" style="left:247.60px;top:135px;font-size:19.5px;color:#707070;transform:matrix(0.9945,0.0001,0,1,0,0.50);">Maryam Lustberg – Online expert</span>
<svg class="r" style="left:0;top:0" width="1" height="1"><path d="M324.5 154.2 L325.6 153.4 L326.7 155.0 L327.8 153.4 L328.9 155.0 L330.0 153.4 L331.1 155.0 L332.2 153.4 L333.3 155.0 L334.4 153.4 L335.5 155.0 L336.6 153.4 L337.7 155.0 L338.8 153.4 L339.9 155.0 L341.0 153.4 L342.1 155.0 L343.2 153.4 L344.3 155.0 L345.4 153.4 L346.5 155.0 L347.6 153.4 L348.7 155.0 L349.8 153.4 L350.9 155.0 L352.0 153.4 L353.1 155.0 L354.2 153.4 L355.3 155.0 L356.4 153.4 L357.5 155.0 L358.6 153.4 L359.7 155.0 L360.8 153.4 L361.9 155.0 L363.0 153.4 L364.1 155.0 L365.2 153.4 L366.3 155.0 L367.4 153.4 L368.5 155.0 L369.6 153.4 L370.7 155.0 L371.8 153.4 L372.9 155.0 L374.0 153.4 L375.1 155.0 L376.2 153.4 L377.3 155.0 L378.4 153.4 L379.5 155.0 L380.6 153.4 L381.7 155.0 L382.8 153.4 L383.9 155.0 L385.0 153.4 L386.1 155.0 L387.2 153.4 L388.3 155.0 L389.4 153.4 L390.5 155.0 L391.6 153.4 L392.7 155.0 L393.8 153.4 L394.9 155.0 L396.0 153.4 L397.1 155.0 L398.2 153.4 L398.6 155.0" fill="none" stroke="#e0403a" stroke-width="0.55" opacity="0.85"/></svg>
<div class="r" style="left:241.3px;top:164.4px;width:710px;height:1.7px;background:#34b2ea;"></div>
<svg class="r" style="left:242.6px;top:175.9px" width="76.4" height="76.4" viewBox="0 0 100 100"><defs><clipPath id="mmac"><circle cx="50.0" cy="50.0" r="50.0"/></clipPath><filter id="mmaf" x="-10%" y="-10%" width="120%" height="120%"><feGaussianBlur stdDeviation="1.2"/></filter></defs><g clip-path="url(#mmac)"><g filter="url(#mmaf)"><rect x="-10" y="-10" width="120" height="120" fill="#dbd4c9"/><rect x="58" y="-10" width="52" height="120" fill="#e4dfd6"/><path d="M-5 74 L8 69 L20 78 L60 80 L68 67 L81 60.5 L95 68 L106 75 V106 H-5 Z" fill="#1b2747"/><path d="M70 68 L81 62 L86 74 L74 100 L66 100 Z" fill="#25345c"/><path d="M48.9 56 L64.2 54 L68 69.4 L67 100 L55.6 100 L53.6 83 Z" fill="#cda896"/><path d="M29.7 7.4 L40.2 4.7 L52.7 6.4 L58.4 12.2 L65.1 26.7 L68 42.2 L73.8 55.8 L77 64 L69.9 68.4 L58.4 73.3 L55.6 84.9 L45 92.6 L29.7 88.8 L18.2 79 L10.5 69.4 L9.2 55.8 L12 40.3 L20.1 21 Z" fill="#211d25"/><path d="M24 26 Q15 46 17 66 M30 56 Q27 74 40 88 M22 60 Q24 74 32 84" stroke="#4b3f40" stroke-width="2.2" fill="none" opacity="0.7"/><path d="M66 30 Q69 46 75 60" stroke="#4b3f40" stroke-width="1.8" fill="none" opacity="0.6"/><path d="M32.6 24.8 L41.2 15.1 L54.6 16.1 L62.3 24.8 L65.1 40.3 L61.3 53.9 L50.8 61.2 L39.3 57.8 L31.6 46.1 L30.7 34.5 Z" fill="#c18f7b"/><path d="M35 24 L42 17 L54 17.6 L60.6 25 L58 28 Q48 22 37 29 Z" fill="#d0a894"/><path d="M32 36 L34 47 L40 57 L44 58 Q36 48 35 34 Z" fill="#a97862"/><path d="M38 50 Q50 60 61 47 L60 54 L51 60 L41 57 Z" fill="#c4826f"/><path d="M33.6 32.6 L42.6 30.6 M49.6 28.6 L58.8 26.8" stroke="#3a2a2c" stroke-width="1.9" fill="none"/><path d="M35.6 36.4 L42.4 35.2 M50.6 33 L57.6 31.4" stroke="#3e2c2e" stroke-width="2.3" fill="none"/><path d="M41.6 48.6 Q50 52.8 57.8 45.8" stroke="#9c4c4a" stroke-width="2.1" fill="none"/><path d="M46 36 L47.6 43 L51 42.6" stroke="#a9735f" stroke-width="1.4" fill="none"/></g></g></svg>
<span class="t" style="left:336.20px;top:184px;font-size:12.8px;color:#484848;transform:matrix(0.9804,0.0001,0,1,0,0.70);font-weight:700;">Maryam Lustberg</span>
<svg class="r" style="left:0;top:0" width="1" height="1"><path d="M389.0 197.2 L390.1 196.4 L391.2 198.0 L392.3 196.4 L393.4 198.0 L394.5 196.4 L395.6 198.0 L396.7 196.4 L397.8 198.0 L398.9 196.4 L400.0 198.0 L401.1 196.4 L402.2 198.0 L403.3 196.4 L404.4 198.0 L405.5 196.4 L406.6 198.0 L407.7 196.4 L408.8 198.0 L409.9 196.4 L411.0 198.0 L412.1 196.4 L413.2 198.0 L414.3 196.4 L415.4 198.0 L416.5 196.4 L417.6 198.0 L418.7 196.4 L419.8 198.0 L420.9 196.4 L422.0 198.0 L423.1 196.4 L424.2 198.0 L425.3 196.4 L426.4 198.0 L427.5 196.4 L428.6 198.0 L429.7 196.4 L430.8 198.0 L431.9 196.4 L433.0 198.0 L434.1 196.4 L435.2 198.0 L436.3 196.4 L437.4 198.0 L438.5 196.4 L439.6 198.0 L440.6 196.4" fill="none" stroke="#e0403a" stroke-width="0.55" opacity="0.85"/></svg>
<span class="t" style="left:336.20px;top:201px;font-size:11.8px;color:#595959;transform:matrix(0.9871,0.0001,0,1,0,0.00);">@maryam_lustberg</span>
<svg class="r" style="left:0;top:0" width="1" height="1"><path d="M346.5 212.6 L347.6 211.8 L348.7 213.4 L349.8 211.8 L350.9 213.4 L352.0 211.8 L353.1 213.4 L354.2 211.8 L355.3 213.4 L356.4 211.8 L357.5 213.4 L358.6 211.8 L359.7 213.4 L360.8 211.8 L361.9 213.4 L363.0 211.8 L364.1 213.4 L365.2 211.8 L366.3 213.4 L367.4 211.8 L368.5 213.4 L369.6 211.8 L370.7 213.4 L371.8 211.8 L372.9 213.4 L374.0 211.8 L375.1 213.4 L376.2 211.8 L377.3 213.4 L378.4 211.8 L379.5 213.4 L380.6 211.8 L381.7 213.4 L382.8 211.8 L383.9 213.4 L385.0 211.8 L386.1 213.4 L387.2 211.8 L388.3 213.4 L389.4 211.8 L390.5 213.4 L391.6 211.8 L392.7 213.4 L393.8 211.8 L394.9 213.4 L396.0 211.8 L397.1 213.4 L398.2 211.8 L399.3 213.4 L400.4 211.8 L401.5 213.4 L402.6 211.8 L403.7 213.4 L404.8 211.8 L405.9 213.4 L407.0 211.8 L408.1 213.4 L409.2 211.8 L410.3 213.4 L411.4 211.8 L412.5 213.4 L413.6 211.8 L414.7 213.4 L415.8 211.8 L416.9 213.4 L418.0 211.8 L419.1 213.4 L420.2 211.8 L421.3 213.4 L422.4 211.8 L423.5 213.4 L424.6 211.8 L425.7 213.4 L426.8 211.8 L427.9 213.4 L429.0 211.8 L430.1 213.4 L431.2 211.8 L432.3 213.4 L433.4 211.8 L434.5 213.4 L435.6 211.8 L436.7 213.4 L437.8 211.8" fill="none" stroke="#e0403a" stroke-width="0.55" opacity="0.85"/></svg>
<span class="t" style="left:336.20px;top:215px;font-size:11.8px;color:#595959;transform:matrix(0.9308,0.0001,0,1,0,0.80);">Yale Cancer Center, US</span>
<span class="t" style="left:336.20px;top:231px;font-size:11.8px;color:#595959;transform:matrix(0.9599,0.0001,0,1,0,0.40);">Breast Oncologist</span>
<svg class="r" style="left:475px;top:180.6px;" width="25.6" height="23.4" viewBox="0 1.6 24 21.4"><path d="M23.953 4.57a10 10 0 01-2.825.775 4.958 4.958 0 002.163-2.723c-.951.555-2.005.959-3.127 1.184a4.92 4.92 0 00-8.384 4.482C7.69 8.095 4.067 6.13 1.64 3.162a4.822 4.822 0 00-.666 2.475c0 1.71.87 3.213 2.188 4.096a4.904 4.904 0 01-2.228-.616v.06a4.923 4.923 0 003.946 4.827 4.996 4.996 0 01-2.212.085 4.936 4.936 0 004.604 3.417 9.867 9.867 0 01-6.102 2.105c-.39 0-.779-.023-1.17-.067a13.995 13.995 0 007.557 2.209c9.053 0 13.998-7.496 13.998-13.985 0-.21 0-.42-.015-.63A9.935 9.935 0 0024 4.59z" fill="#1da1f2"/></svg>
<div class="r" style="left:475.6px;top:216.2px;width:24.4px;height:23.4px;border-radius:2.2px;background:#1072bc"></div>
<span class="t" style="left:478.80px;top:222px;font-size:18.6px;color:#fff;transform:matrix(1.1011,0.0001,0,1,0,0.20);font-weight:700;">in</span>
<div class="r" style="left:478.4px;top:218.6px;width:6.4px;height:7.6px;background:#1072bc;"></div>
<div class="r" style="left:478.9px;top:219.3px;width:4.6px;height:4.6px;border-radius:50%;background:#fff"></div>
<span class="t" style="left:514.30px;top:185px;font-size:12px;color:#595959;transform:matrix(0.9751,0.0001,0,1,0,0.00);">8,102 followers</span>
<span class="t" style="left:514.30px;top:200px;font-size:9px;color:#595959;transform:matrix(0.9701,0.0001,0,1,0,0.80);">21% HCPs</span>
<span class="t" style="left:512.60px;top:220px;font-size:12px;color:#595959;transform:matrix(0.9751,0.0001,0,1,0,0.50);">4,058 followers</span>
<span class="t" style="left:613.80px;top:183px;font-size:12px;color:#7f7f7f;transform:matrix(0.9147,0.0001,0,1,0,0.20);">Retweets by HCP peers*</span>
<span class="t" style="left:613.80px;top:203px;font-size:11.6px;color:#d6265c;transform:matrix(0.9765,0.0001,0,1,0,0.40);font-weight:700;">166</span>
<span class="t" style="left:613.80px;top:221px;font-size:12px;color:#7f7f7f;transform:matrix(0.9301,0.0001,0,1,0,0.30);">Mentions by HCP peers*</span>
<span class="t" style="left:613.80px;top:241px;font-size:11.6px;color:#d6265c;transform:matrix(0.9715,0.0001,0,1,0,0.00);font-weight:700;">2,033</span>
<span class="t" style="left:747.00px;top:174px;font-size:12.4px;color:#7f7f7f;transform:matrix(0.9088,0.0001,0,1,0,0.20);">Most mentioned by these HCPs online:</span>
<svg class="r" style="left:746.9px;top:191.9px" width="51" height="51" viewBox="0 0 100 100"><defs><clipPath id="mmic"><circle cx="50.0" cy="50.0" r="50.0"/></clipPath><filter id="mmif" x="-10%" y="-10%" width="120%" height="120%"><feGaussianBlur stdDeviation="2.2"/></filter></defs><g clip-path="url(#mmic)"><g filter="url(#mmif)"><rect x="-10" y="-10" width="120" height="120" fill="#e2d0bd"/><rect x="-10" y="22" width="36" height="56" fill="#d3b8a2"/><path d="M-5 110 L8 78 L30 64 L50 70 L70 64 L92 74 L105 110 Z" fill="#efebe8"/><path d="M34 60 L64 62 L60 100 L44 100 Z" fill="#1f2e33"/><path d="M48 78 L56 78 L58 100 L46 100 Z" fill="#a8452e"/><path d="M40 56 L64 56 L62 68 L52 74 L42 68 Z" fill="#b8763a"/><ellipse cx="52.5" cy="40" rx="19" ry="24" fill="#c9863f"/><ellipse cx="52" cy="41" rx="11" ry="15" fill="#db9a42"/><path d="M29 40 Q24 18 36 8 Q50 0 68 6 Q80 14 77 32 L74 42 Q74 28 66 22 Q52 15 40 22 Q33 28 33 42 Z" fill="#3a2a1f"/><path d="M34 20 Q50 6 70 16 L70 24 Q52 14 36 26 Z" fill="#3a2a1f"/><path d="M40 34 L48 33 M57 33 L66 34" stroke="#4a2a14" stroke-width="2.4"/><path d="M44 54 Q52 59 61 54" stroke="#f0d6b8" stroke-width="2.6" fill="none"/></g></g></svg>
<svg class="r" style="left:820.7px;top:191.3px" width="51.4" height="51.4" viewBox="0 0 100 100"><defs><clipPath id="mnic"><circle cx="50.0" cy="50.0" r="50.0"/></clipPath><filter id="mnif" x="-10%" y="-10%" width="120%" height="120%"><feGaussianBlur stdDeviation="2.4"/></filter></defs><g clip-path="url(#mnic)"><g filter="url(#mnif)"><rect x="-10" y="-10" width="120" height="120" fill="#8a8686"/><path d="M-5 -5 H45 L38 20 L10 45 L-5 50 Z" fill="#b6d8ee"/><path d="M-5 38 L14 30 L20 50 L-5 60 Z" fill="#e4e6ea"/><path d="M-5 60 L12 52 L40 78 L50 105 L-5 105 Z" fill="#9a2f2f"/><path d="M4 58 L20 54 L34 84 L20 96 Z" fill="#d9d3d0"/><path d="M55 70 L105 50 V110 H40 Z" fill="#1b2438"/><path d="M44 70 L60 78 L58 105 L40 105 Z" fill="#161414"/><ellipse cx="32" cy="40" rx="18" ry="22" fill="#4a3a34"/><ellipse cx="34" cy="46" rx="14" ry="17" fill="#b1846c"/><path d="M18 52 L36 49 L52 56 L48 74 L32 80 L21 67 Z" fill="#cfcfd4"/><ellipse cx="74" cy="38" rx="24" ry="26" fill="#b8826a"/><path d="M38 8 Q60 -8 86 8 Q98 20 100 34 L78 20 L50 24 L40 30 Z" fill="#2a2226"/><path d="M53 44 L70 36 L92 43 L95 62 L80 78 L62 66 Z" fill="#e2e2e4"/><path d="M56 32 L66 30 M76 30 L88 32" stroke="#3a2624" stroke-width="2.4"/><path d="M24 40 L31 39 M38 40 L45 41" stroke="#3a2624" stroke-width="2"/></g></g></svg>
<svg class="r" style="left:895px;top:190.9px" width="51" height="51" viewBox="0 0 100 100"><defs><clipPath id="mgac"><circle cx="50.0" cy="50.0" r="50.0"/></clipPath><filter id="mgaf" x="-10%" y="-10%" width="120%" height="120%"><feGaussianBlur stdDeviation="2.2"/></filter></defs><g clip-path="url(#mgac)"><g filter="url(#mgaf)"><rect x="-10" y="-10" width="120" height="120" fill="#4b4946"/><path d="M-5 24 L56 -5 L66 -5 L-5 32 Z M62 62 L105 38 L105 46 L68 68 Z" fill="#77777a"/><path d="M-5 44 L30 40 L34 60 L20 78 L-5 76 Z" fill="#ac6438"/><path d="M74 8 L105 16 V64 L80 58 Z" fill="#7e4c32"/><path d="M62 0 L84 6 L92 18 L76 13 Z" fill="#a86238"/><path d="M2 78 L32 60 L50 78 L62 68 L84 76 L80 94 L50 106 L18 98 Z" fill="#171c28"/><path d="M33 60 L42 64 L56 82 L61 68 L66 78 L64 100 L48 100 Z" fill="#3b69c9"/><path d="M50 78 L58 76 L63 98 L54 100 Z" fill="#9fc0d2"/><ellipse cx="50.5" cy="37" rx="19.5" ry="25" fill="#c6947a"/><ellipse cx="52" cy="24" rx="13" ry="10" fill="#d9ae98"/><path d="M34 39.5 H67" stroke="#3a2c2a" stroke-width="2.2"/><path d="M42 54 Q50 58 58 53" stroke="#a06050" stroke-width="1.8" fill="none"/></g></g></svg>
<svg class="r" style="left:786.9px;top:227.3px" width="15.8" height="15.8" viewBox="0 0 100 100"><defs><clipPath id="m794fl"><circle cx="50" cy="50" r="50"/></clipPath></defs><g clip-path="url(#m794fl)"><rect x="0" y="0.0" width="100" height="11.4" fill="#c9503f"/><rect x="0" y="11.1" width="100" height="11.4" fill="#f6ebe6"/><rect x="0" y="22.2" width="100" height="11.4" fill="#c9503f"/><rect x="0" y="33.3" width="100" height="11.4" fill="#f6ebe6"/><rect x="0" y="44.4" width="100" height="11.4" fill="#c9503f"/><rect x="0" y="55.5" width="100" height="11.4" fill="#f6ebe6"/><rect x="0" y="66.6" width="100" height="11.4" fill="#c9503f"/><rect x="0" y="77.7" width="100" height="11.4" fill="#f6ebe6"/><rect x="0" y="88.8" width="100" height="11.4" fill="#c9503f"/><rect x="0" y="0" width="50" height="55" fill="#5c6a9e"/></g></svg>
<svg class="r" style="left:860.5px;top:227.3px" width="15.8" height="15.8" viewBox="0 0 100 100"><defs><clipPath id="m868fl"><circle cx="50" cy="50" r="50"/></clipPath></defs><g clip-path="url(#m868fl)"><rect x="0" y="0.0" width="100" height="11.4" fill="#c9503f"/><rect x="0" y="11.1" width="100" height="11.4" fill="#f6ebe6"/><rect x="0" y="22.2" width="100" height="11.4" fill="#c9503f"/><rect x="0" y="33.3" width="100" height="11.4" fill="#f6ebe6"/><rect x="0" y="44.4" width="100" height="11.4" fill="#c9503f"/><rect x="0" y="55.5" width="100" height="11.4" fill="#f6ebe6"/><rect x="0" y="66.6" width="100" height="11.4" fill="#c9503f"/><rect x="0" y="77.7" width="100" height="11.4" fill="#f6ebe6"/><rect x="0" y="88.8" width="100" height="11.4" fill="#c9503f"/><rect x="0" y="0" width="50" height="55" fill="#5c6a9e"/></g></svg>
<svg class="r" style="left:934.6px;top:227.3px" width="15.8" height="15.8" viewBox="0 0 100 100"><defs><clipPath id="m942fl"><circle cx="50" cy="50" r="50"/></clipPath></defs><g clip-path="url(#m942fl)"><rect x="0" y="0.0" width="100" height="11.4" fill="#c9503f"/><rect x="0" y="11.1" width="100" height="11.4" fill="#f6ebe6"/><rect x="0" y="22.2" width="100" height="11.4" fill="#c9503f"/><rect x="0" y="33.3" width="100" height="11.4" fill="#f6ebe6"/><rect x="0" y="44.4" width="100" height="11.4" fill="#c9503f"/><rect x="0" y="55.5" width="100" height="11.4" fill="#f6ebe6"/><rect x="0" y="66.6" width="100" height="11.4" fill="#c9503f"/><rect x="0" y="77.7" width="100" height="11.4" fill="#f6ebe6"/><rect x="0" y="88.8" width="100" height="11.4" fill="#c9503f"/><rect x="0" y="0" width="50" height="55" fill="#5c6a9e"/></g></svg>
<span class="t" style="left:744.00px;top:246px;font-size:9.6px;color:#595959;transform:matrix(0.8829,0.0001,0,1,0,0.20);">Mike Pishvaian</span>
<span class="t" style="left:746.45px;top:257px;font-size:9.6px;color:#595959;transform:matrix(0.9005,0.0001,0,1,0,0.30);">@Mpishvaian</span>
<span class="t" style="left:747.00px;top:268px;font-size:9.6px;color:#595959;transform:matrix(0.8804,0.0001,0,1,0,0.20);">GI Oncologist</span>
<span class="t" style="left:818.20px;top:246px;font-size:9.6px;color:#595959;transform:matrix(0.8945,0.0001,0,1,0,0.20);">Nicole Kuderer</span>
<span class="t" style="left:815.55px;top:257px;font-size:9.6px;color:#595959;transform:matrix(0.8912,0.0001,0,1,0,0.30);">@NicoleKuderer</span>
<span class="t" style="left:810.00px;top:268px;font-size:9.6px;color:#595959;transform:matrix(0.9050,0.0001,0,1,0,0.20);">Medical Oncologist</span>
<span class="t" style="left:897.50px;top:246px;font-size:9.6px;color:#595959;transform:matrix(0.8666,0.0001,0,1,0,0.20);">Gary Lyman</span>
<span class="t" style="left:893.95px;top:257px;font-size:9.6px;color:#595959;transform:matrix(0.8843,0.0001,0,1,0,0.00);">@gary_lyman</span>
<span class="t" style="left:900.00px;top:268px;font-size:9.6px;color:#595959;transform:matrix(0.8819,0.0001,0,1,0,0.10);">Oncologist</span>
<svg class="r" style="left:0;top:0" width="1" height="1"><path d="M766.0 256.2 L767.1 255.4 L768.2 257.0 L769.3 255.4 L770.4 257.0 L771.5 255.4 L772.6 257.0 L773.7 255.4 L774.8 257.0 L775.9 255.4 L777.0 257.0 L778.1 255.4 L779.2 257.0 L780.3 255.4 L781.4 257.0 L782.5 255.4 L783.6 257.0 L784.7 255.4 L785.8 257.0 L786.9 255.4 L788.0 257.0 L789.1 255.4 L790.2 257.0 L791.3 255.4 L792.4 257.0 L793.5 255.4 L794.6 257.0 L795.7 255.4 L796.8 257.0 L797.9 255.4 L799.0 257.0 L800.1 255.4 L801.0 257.0" fill="none" stroke="#e0403a" stroke-width="0.55" opacity="0.85"/></svg>
<svg class="r" style="left:0;top:0" width="1" height="1"><path d="M755.5 267.3 L756.6 266.5 L757.7 268.1 L758.8 266.5 L759.9 268.1 L761.0 266.5 L762.1 268.1 L763.2 266.5 L764.3 268.1 L765.4 266.5 L766.5 268.1 L767.6 266.5 L768.7 268.1 L769.8 266.5 L770.9 268.1 L772.0 266.5 L773.1 268.1 L774.2 266.5 L775.3 268.1 L776.4 266.5 L777.5 268.1 L778.6 266.5 L779.7 268.1 L780.8 266.5 L781.9 268.1 L783.0 266.5 L784.1 268.1 L785.2 266.5 L786.3 268.1 L787.4 266.5 L788.5 268.1 L789.6 266.5 L790.7 268.1 L791.8 266.5 L792.9 268.1 L794.0 266.5 L795.1 268.1 L796.2 266.5 L797.3 268.1 L798.4 266.5 L799.0 268.1" fill="none" stroke="#e0403a" stroke-width="0.55" opacity="0.85"/></svg>
<svg class="r" style="left:0;top:0" width="1" height="1"><path d="M843.5 256.2 L844.6 255.4 L845.7 257.0 L846.8 255.4 L847.9 257.0 L849.0 255.4 L850.1 257.0 L851.2 255.4 L852.3 257.0 L853.4 255.4 L854.5 257.0 L855.6 255.4 L856.7 257.0 L857.8 255.4 L858.9 257.0 L860.0 255.4 L861.1 257.0 L862.2 255.4 L863.3 257.0 L864.4 255.4 L865.5 257.0 L866.6 255.4 L867.7 257.0 L868.8 255.4 L869.9 257.0 L871.0 255.4 L872.1 257.0 L873.2 255.4 L874.3 257.0 L875.0 255.4" fill="none" stroke="#e0403a" stroke-width="0.55" opacity="0.85"/></svg>
<svg class="r" style="left:0;top:0" width="1" height="1"><path d="M824.0 267.3 L825.1 266.5 L826.2 268.1 L827.3 266.5 L828.4 268.1 L829.5 266.5 L830.6 268.1 L831.7 266.5 L832.8 268.1 L833.9 266.5 L835.0 268.1 L836.1 266.5 L837.2 268.1 L838.3 266.5 L839.4 268.1 L840.5 266.5 L841.6 268.1 L842.7 266.5 L843.8 268.1 L844.9 266.5 L846.0 268.1 L847.1 266.5 L848.2 268.1 L849.3 266.5 L850.4 268.1 L851.5 266.5 L852.6 268.1 L853.7 266.5 L854.8 268.1 L855.9 266.5 L857.0 268.1 L858.1 266.5 L859.2 268.1 L860.3 266.5 L861.4 268.1 L862.5 266.5 L863.6 268.1 L864.7 266.5 L865.8 268.1 L866.9 266.5 L868.0 268.1 L869.1 266.5 L870.2 268.1 L871.3 266.5 L872.4 268.1 L873.5 266.5 L874.6 268.1 L875.7 266.5 L876.8 268.1 L877.9 266.5 L878.4 268.1" fill="none" stroke="#e0403a" stroke-width="0.55" opacity="0.85"/></svg>
<svg class="r" style="left:0;top:0" width="1" height="1"><path d="M903.0 267.0 L904.1 266.2 L905.2 267.8 L906.3 266.2 L907.4 267.8 L908.5 266.2 L909.6 267.8 L910.7 266.2 L911.8 267.8 L912.9 266.2 L914.0 267.8 L915.1 266.2 L916.2 267.8 L917.3 266.2 L918.4 267.8 L919.5 266.2 L920.6 267.8 L921.7 266.2 L922.8 267.8 L923.9 266.2 L925.0 267.8 L926.1 266.2 L927.2 267.8 L928.3 266.2 L929.4 267.8 L930.5 266.2 L931.6 267.8 L932.7 266.2 L933.8 267.8 L934.9 266.2 L936.0 267.8 L937.1 266.2 L938.2 267.8 L939.3 266.2 L940.4 267.8 L941.5 266.2 L942.6 267.8 L943.7 266.2 L944.8 267.8 L945.9 266.2 L946.5 267.8" fill="none" stroke="#e0403a" stroke-width="0.55" opacity="0.85"/></svg>
<span class="t" style="left:268.30px;top:273px;font-size:12.6px;color:#7f7f7f;transform:matrix(1.0356,0.0001,0,1,0,0.20);">Oncology conversation over the past 12 months on Twitter</span>
<span class="t" style="left:252px;top:355.6px;font-size:10.2px;color:#595959;transform:translate(-50%,-50%) rotate(-90deg) scaleX(1.06);transform-origin:50% 50%;letter-spacing:0.2px">Volume of posts (by week)</span>
<span class="t" style="left:277.89px;top:469px;font-size:9.9px;color:#595959;transform:matrix(1.0000,0.0001,0,1,0,0.60);">0</span>
<span class="t" style="left:272.39px;top:435px;font-size:9.9px;color:#595959;transform:matrix(1.0000,0.0001,0,1,0,0.30);">20</span>
<span class="t" style="left:272.39px;top:401px;font-size:9.9px;color:#595959;transform:matrix(1.0000,0.0001,0,1,0,0.00);">40</span>
<span class="t" style="left:272.39px;top:366px;font-size:9.9px;color:#595959;transform:matrix(1.0000,0.0001,0,1,0,0.70);">60</span>
<span class="t" style="left:272.39px;top:332px;font-size:9.9px;color:#595959;transform:matrix(1.0000,0.0001,0,1,0,0.40);">80</span>
<span class="t" style="left:266.88px;top:298px;font-size:9.9px;color:#595959;transform:matrix(1.0000,0.0001,0,1,0,0.10);">100</span>
<div class="r" style="left:292px;top:473.7px;width:388px;height:0.9px;background:#d9d9d9;"></div>
<div class="r" style="left:600px;top:474px;width:0.8px;height:36px;background:#d9d9d9;"></div>
<span class="t" style="left:284.38px;top:482px;font-size:9.9px;color:#595959;transform:matrix(1.0000,0.0001,0,1,0,0.90);">Mar</span>
<span class="t" style="left:317.50px;top:482px;font-size:9.9px;color:#595959;transform:matrix(1.0000,0.0001,0,1,0,0.90);">Apr</span>
<span class="t" style="left:347.95px;top:482px;font-size:9.9px;color:#595959;transform:matrix(1.0000,0.0001,0,1,0,0.90);">May</span>
<span class="t" style="left:381.82px;top:482px;font-size:9.9px;color:#595959;transform:matrix(1.0000,0.0001,0,1,0,0.90);">Jun</span>
<span class="t" style="left:415.57px;top:482px;font-size:9.9px;color:#595959;transform:matrix(1.0000,0.0001,0,1,0,0.90);">Jul</span>
<span class="t" style="left:445.39px;top:482px;font-size:9.9px;color:#595959;transform:matrix(1.0000,0.0001,0,1,0,0.90);">Aug</span>
<span class="t" style="left:477.49px;top:482px;font-size:9.9px;color:#595959;transform:matrix(1.0000,0.0001,0,1,0,0.90);">Sep</span>
<span class="t" style="left:511.10px;top:482px;font-size:9.9px;color:#595959;transform:matrix(1.0000,0.0001,0,1,0,0.90);">Oct</span>
<span class="t" style="left:542.50px;top:482px;font-size:9.9px;color:#595959;transform:matrix(1.0000,0.0001,0,1,0,0.90);">Nov</span>
<span class="t" style="left:574.40px;top:482px;font-size:9.9px;color:#595959;transform:matrix(1.0000,0.0001,0,1,0,0.90);">Dec</span>
<span class="t" style="left:607.72px;top:482px;font-size:9.9px;color:#595959;transform:matrix(1.0000,0.0001,0,1,0,0.90);">Jan</span>
<span class="t" style="left:639.77px;top:482px;font-size:9.9px;color:#595959;transform:matrix(1.0000,0.0001,0,1,0,0.90);">Feb</span>
<span class="t" style="left:571.79px;top:499px;font-size:9.9px;color:#595959;transform:matrix(1.0000,0.0001,0,1,0,0.10);">2022</span>
<span class="t" style="left:605.19px;top:499px;font-size:9.9px;color:#595959;transform:matrix(1.0000,0.0001,0,1,0,0.10);">2023</span>
<svg class="r" style="left:0;top:0" width="1" height="1"><polyline points="292.6,460.6 300.0,450.3 307.4,457.2 314.8,469.2 322.2,452.0 329.6,436.6 337.0,453.7 344.4,457.2 351.8,470.9 359.2,453.7 366.6,400.6 374.0,419.4 381.4,448.6 388.8,332.0 396.2,352.5 403.6,410.8 411.0,320.0 418.4,448.6 425.8,469.2 433.2,472.6 440.6,458.9 448.0,467.4 455.4,460.6 462.8,467.4 470.2,452.0 477.6,445.1 485.0,462.3 492.4,438.3 499.8,436.6 507.2,356.0 514.6,458.9 522.0,460.6 529.4,422.9 536.8,445.1 544.2,455.4 551.6,457.2 559.0,472.6 566.4,469.2 573.8,470.9 581.2,469.2 588.6,426.3 596.0,458.9 603.4,470.9 610.8,472.6 618.2,472.6 625.6,472.6 633.0,464.0 640.4,462.3 647.8,464.0 655.2,470.9 662.6,467.4 670.0,472.6 677.4,472.6" fill="none" stroke="#21a3a3" stroke-width="2.35" stroke-linejoin="round" stroke-linecap="round"/><g fill="#1fa5a5"><circle cx="388" cy="322" r="5"/><circle cx="411.1" cy="308.7" r="5"/><circle cx="507.5" cy="345.3" r="5"/></g></svg>
<span class="t" style="left:336.90px;top:317px;font-size:9.4px;color:#595959;transform:matrix(0.9380,0.0001,0,1,0,0.60);">#ASCO22</span>
<span class="t" style="left:420.60px;top:303px;font-size:9.4px;color:#595959;transform:matrix(0.9671,0.0001,0,1,0,0.30);">#MASCC22</span>
<span class="t" style="left:517.90px;top:340px;font-size:9.4px;color:#595959;transform:matrix(1.0385,0.0001,0,1,0,0.00);">#TumorBoardTuesday</span>
<svg class="r" style="left:0;top:0" width="1" height="1"><path d="M523.5 350.0 L524.6 349.2 L525.7 350.8 L526.8 349.2 L527.9 350.8 L529.0 349.2 L530.1 350.8 L531.2 349.2 L532.3 350.8 L533.4 349.2 L534.5 350.8 L535.6 349.2 L536.7 350.8 L537.8 349.2 L538.9 350.8 L540.0 349.2 L541.1 350.8 L542.2 349.2 L543.3 350.8 L544.4 349.2 L545.5 350.8 L546.6 349.2 L547.7 350.8 L548.8 349.2 L549.9 350.8 L551.0 349.2 L552.1 350.8 L553.2 349.2 L554.3 350.8 L555.4 349.2 L556.5 350.8 L557.6 349.2 L558.7 350.8 L559.8 349.2 L560.9 350.8 L562.0 349.2 L563.1 350.8 L564.2 349.2 L565.3 350.8 L566.4 349.2 L567.5 350.8 L568.6 349.2 L569.7 350.8 L570.8 349.2 L571.9 350.8 L573.0 349.2 L574.1 350.8 L575.2 349.2 L576.3 350.8 L577.4 349.2 L578.5 350.8 L579.6 349.2 L580.7 350.8 L581.8 349.2 L582.9 350.8 L584.0 349.2 L585.1 350.8 L586.2 349.2 L587.3 350.8 L588.4 349.2 L589.5 350.8 L590.6 349.2 L591.7 350.8 L592.8 349.2 L593.9 350.8 L595.0 349.2 L596.1 350.8 L597.2 349.2 L598.3 350.8 L599.4 349.2 L600.5 350.8 L601.6 349.2 L602.7 350.8 L603.8 349.2 L604.9 350.8 L606.0 349.2 L607.1 350.8 L608.2 349.2 L609.3 350.8 L610.4 349.2 L611.5 350.8 L612.6 349.2 L613.7 350.8 L614.3 349.2" fill="none" stroke="#e0403a" stroke-width="0.55" opacity="0.85"/></svg>
<div class="r" style="left:241.7px;top:519.7px;width:615.5px;height:1px;background:#7f7f7f;"></div>
<span class="t" style="left:640.20px;top:506px;font-size:9.6px;color:#7f7f7f;transform:matrix(0.9620,0.0001,0,1,0,0.80);">*In the oncology conversation on Twitter</span>
<svg class="r" style="left:871px;top:509.4px" width="22" height="22" viewBox="-11 -11 22 22"><circle cx="0" cy="0" r="7.4" fill="none" stroke="#2aabe2" stroke-width="6.4" stroke-dasharray="1.45 0.6" transform="rotate(38)" pathLength="46.5" style="stroke-dasharray:1.45 0.6"/><path d="M0 0 L13 -8.6 L13 7.6 Z" fill="#fff"/></svg>
<span class="t" style="left:894.20px;top:517px;font-size:8.6px;color:#5a5a5a;letter-spacing:1.286px;transform:matrix(1.0000,0.0001,0,1,0,0.40);">CREATION</span>
<span class="t" style="left:947.40px;top:519px;font-size:6.6px;color:#5a5a5a;transform:matrix(1.2040,0.0001,0,1,0,0.40);">.co</span>
<div class="r" style="left:709.6px;top:283px;width:204.6px;height:219.6px;background:#fff;border:0.8px solid #f0f0f0;box-sizing:border-box"></div>
<svg class="r" style="left:715.5px;top:289.7px" width="16" height="16" viewBox="0 0 100 100"><defs><clipPath id="mtwmac"><circle cx="50.0" cy="50.0" r="50.0"/></clipPath><filter id="mtwmaf" x="-10%" y="-10%" width="120%" height="120%"><feGaussianBlur stdDeviation="2.4"/></filter></defs><g clip-path="url(#mtwmac)"><g filter="url(#mtwmaf)"><rect x="-10" y="-10" width="120" height="120" fill="#dbd4c9"/><rect x="58" y="-10" width="52" height="120" fill="#e4dfd6"/><path d="M-5 74 L8 69 L20 78 L60 80 L68 67 L81 60.5 L95 68 L106 75 V106 H-5 Z" fill="#1b2747"/><path d="M70 68 L81 62 L86 74 L74 100 L66 100 Z" fill="#25345c"/><path d="M48.9 56 L64.2 54 L68 69.4 L67 100 L55.6 100 L53.6 83 Z" fill="#cda896"/><path d="M29.7 7.4 L40.2 4.7 L52.7 6.4 L58.4 12.2 L65.1 26.7 L68 42.2 L73.8 55.8 L77 64 L69.9 68.4 L58.4 73.3 L55.6 84.9 L45 92.6 L29.7 88.8 L18.2 79 L10.5 69.4 L9.2 55.8 L12 40.3 L20.1 21 Z" fill="#211d25"/><path d="M24 26 Q15 46 17 66 M30 56 Q27 74 40 88 M22 60 Q24 74 32 84" stroke="#4b3f40" stroke-width="2.2" fill="none" opacity="0.7"/><path d="M66 30 Q69 46 75 60" stroke="#4b3f40" stroke-width="1.8" fill="none" opacity="0.6"/><path d="M32.6 24.8 L41.2 15.1 L54.6 16.1 L62.3 24.8 L65.1 40.3 L61.3 53.9 L50.8 61.2 L39.3 57.8 L31.6 46.1 L30.7 34.5 Z" fill="#c18f7b"/><path d="M35 24 L42 17 L54 17.6 L60.6 25 L58 28 Q48 22 37 29 Z" fill="#d0a894"/><path d="M32 36 L34 47 L40 57 L44 58 Q36 48 35 34 Z" fill="#a97862"/><path d="M38 50 Q50 60 61 47 L60 54 L51 60 L41 57 Z" fill="#c4826f"/><path d="M33.6 32.6 L42.6 30.6 M49.6 28.6 L58.8 26.8" stroke="#3a2a2c" stroke-width="1.9" fill="none"/><path d="M35.6 36.4 L42.4 35.2 M50.6 33 L57.6 31.4" stroke="#3e2c2e" stroke-width="2.3" fill="none"/><path d="M41.6 48.6 Q50 52.8 57.8 45.8" stroke="#9c4c4a" stroke-width="2.1" fill="none"/><path d="M46 36 L47.6 43 L51 42.6" stroke="#a9735f" stroke-width="1.4" fill="none"/></g></g></svg>
<span class="t" style="left:735.80px;top:292px;font-size:5.6px;color:#1a1a1a;transform:matrix(0.9190,0.0001,0,1,0,0.20);font-weight:700;">Maryam Lustberg MD MPH</span>
<span class="t" style="left:735.80px;top:298px;font-size:5.2px;color:#8a8a8a;transform:matrix(0.9989,0.0001,0,1,0,0.50);">@maryam_lustberg</span>
<svg class="r" style="left:891.2px;top:290.4px;" width="18" height="16" viewBox="0 1.6 24 21.4"><path d="M23.953 4.57a10 10 0 01-2.825.775 4.958 4.958 0 002.163-2.723c-.951.555-2.005.959-3.127 1.184a4.92 4.92 0 00-8.384 4.482C7.69 8.095 4.067 6.13 1.64 3.162a4.822 4.822 0 00-.666 2.475c0 1.71.87 3.213 2.188 4.096a4.904 4.904 0 01-2.228-.616v.06a4.923 4.923 0 003.946 4.827 4.996 4.996 0 01-2.212.085 4.936 4.936 0 004.604 3.417 9.867 9.867 0 01-6.102 2.105c-.39 0-.779-.023-1.17-.067a13.995 13.995 0 007.557 2.209c9.053 0 13.998-7.496 13.998-13.985 0-.21 0-.42-.015-.63A9.935 9.935 0 0024 4.59z" fill="#1da1f2"/></svg>
<span class="t" style="left:715.50px;top:312px;font-size:5.9px;color:#2a2a2a;transform:matrix(0.9474,0.0001,0,1,0,0.80);">Thank you</span>
<span class="t" style="left:744.30px;top:312px;font-size:5.9px;color:#2aa3ef;transform:matrix(0.9710,0.0001,0,1,0,0.80);">@GoHealio</span>
<span class="t" style="left:775.90px;top:312px;font-size:5.9px;color:#2a2a2a;transform:matrix(0.9941,0.0001,0,1,0,0.80);">for sharing my story</span>
<span class="t" style="left:829.20px;top:312px;font-size:5.9px;color:#2aa3ef;transform:matrix(1.0339,0.0001,0,1,0,0.80);">#WomenInMedicine</span>
<span class="t" style="left:715.50px;top:319px;font-size:5.9px;color:#2aa3ef;transform:matrix(0.9709,0.0001,0,1,0,0.70);">@WIMSummit @YaleMed @YaleCancer</span>
<svg class="r" style="left:716px;top:329.3px" width="192.7" height="101.4" viewBox="0 0 192.7 101.4"><defs><clipPath id="mtwi"><path d="M0 101.4 V4 Q0 0 4 0 H188.7 Q192.7 0 192.7 4 V101.4 Z"/></clipPath><filter id="mtwf" x="-10%" y="-10%" width="120%" height="120%"><feGaussianBlur stdDeviation="1.1"/></filter><linearGradient id="mtwg" x1="0" y1="0" x2="1" y2="0"><stop offset="0" stop-color="#2b2b2b"/><stop offset="0.35" stop-color="#3c3c3c"/><stop offset="0.62" stop-color="#6a6a6a"/><stop offset="1" stop-color="#8c8c8c"/></linearGradient></defs><g clip-path="url(#mtwi)"><rect x="0" y="0" width="192.7" height="101.4" fill="url(#mtwg)"/><g filter="url(#mtwf)"><circle cx="62" cy="18" r="16" fill="#3e3e3e" opacity="0.6"/><circle cx="96" cy="78" r="15" fill="#4e4e4e" opacity="0.6"/><circle cx="118" cy="14" r="13" fill="#6e6e6e" opacity="0.7"/><circle cx="150" cy="4" r="14" fill="#7a7a7a" opacity="0.6"/><path d="M170 0 H193 V74 L181 69 L172 50 Z" fill="#b9b9b9" opacity="0.9"/><circle cx="186" cy="11" r="8.5" fill="#e6e6e6" opacity="0.9"/><circle cx="108" cy="42" r="10" fill="#4c4c4c" opacity="0.5"/><circle cx="180" cy="44" r="9" fill="#9a9a9a" opacity="0.7"/><path d="M98 102 L104 88 L115 64 L128 68 L140 82 L153.6 90 L165 80 L181 69 L194 73 V102 Z" fill="#e7e7e9"/><path d="M146.3 83.6 L160.9 83.6 L157.3 102 L149 102 Z" fill="#1d3a41"/><path d="M146.3 54 L160.9 54 L161.8 81.8 L153.6 89 L145.4 81.8 Z" fill="#c9967f"/><path d="M138.9 10.4 L148.1 7.6 L157.3 8.5 L166.4 17.7 L170.1 32.3 L171.9 50.6 L181.1 69 L175.6 72.6 L164.6 76.3 L160.9 81.8 L157 60 L150 60 L144.4 72.6 L138.9 81.8 L131.6 81.8 L125.2 65.3 L122.5 50.6 L123.4 41.5 L129.8 23.2 Z" fill="#1e1c1d"/><ellipse cx="153.4" cy="40" rx="14.2" ry="19.6" fill="#c9957d"/><path d="M139 30 Q141 16 152 13 Q150 22 140 36 Z" fill="#1e1c1d"/><path d="M154 13 Q166 16 168 34 Q162 22 153 17 Z" fill="#1e1c1d"/><path d="M146.4 48 Q153 51.4 160 47.6" stroke="#a8504a" stroke-width="1.5" fill="none"/><path d="M143 32.6 H149.4 M157 32.6 H163.4" stroke="#3a2a2a" stroke-width="1.4"/><path d="M142.4 29.4 L149.6 28.6 M156.6 28.6 L164 29.6" stroke="#3a2a2a" stroke-width="1"/><path d="M118 84 Q128 83 136 89 M119 90 Q129 89 137 94 M120 95 Q130 94 138 98" stroke="#4fb0b0" stroke-width="0.8" fill="none"/></g></g></svg>
<span class="t" style="left:726.60px;top:345px;font-size:13.5px;color:#ececec;transform:matrix(1.0000,0.0001,0,1,0,0.80);font-weight:700;font-style:italic;">“</span>
<span class="t" style="left:736.20px;top:348px;font-size:6.7px;color:#ececec;transform:matrix(1.2461,0.0001,0,1,0,0.50);">I realized that one-size</span>
<span class="t" style="left:727.10px;top:358px;font-size:6.7px;color:#ececec;transform:matrix(1.2398,0.0001,0,1,0,0.10);">prescriptive recommendations</span>
<span class="t" style="left:727.10px;top:367px;font-size:6.7px;color:#ececec;transform:matrix(1.2316,0.0001,0,1,0,0.60);">of ‘just say no’ or ‘family first’</span>
<span class="t" style="left:727.10px;top:376px;font-size:6.7px;color:#ececec;transform:matrix(1.2195,0.0001,0,1,0,0.90);">don’t always resonate.</span>
<span class="t" style="left:809.40px;top:374px;font-size:13.5px;color:#ececec;transform:matrix(1.0000,0.0001,0,1,0,0.40);font-weight:700;font-style:italic;">”</span>
<span class="t" style="left:727.10px;top:392px;font-size:5.9px;color:#ececec;transform:matrix(1.0433,0.0001,0,1,0,0.10);font-weight:700;">Maryam Lustberg, MD, MPH</span>
<div class="r" style="left:726.8px;top:412.8px;width:10px;height:10.4px;border:0.8px solid #f2f2f2;border-radius:1px;box-sizing:border-box"></div>
<svg class="r" style="left:728.4px;top:414.6px;" width="7" height="7" viewBox="0 0 7 7"><path d="M1 5.6 Q2.2 1 3.4 3.4 Q4.4 5.6 5.8 1.2" fill="none" stroke="#f2f2f2" stroke-width="0.8"/></svg>
<span class="t" style="left:737.90px;top:412px;font-size:9.2px;color:#fff;transform:matrix(0.8020,0.0001,0,1,0,0.20);font-weight:700;">WOMEN</span>
<span class="t" style="left:738.00px;top:420px;font-size:3.6px;color:#e6e6e6;transform:matrix(1.1337,0.0001,0,1,0,0.70);">IN ONCOLOGY</span>
<div class="r" style="left:716px;top:429.9px;width:192.7px;height:37.6px;border:0.7px solid #dfe3e6;border-top:none;border-radius:0 0 4px 4px;box-sizing:border-box"></div>
<span class="t" style="left:720.10px;top:435px;font-size:5.3px;color:#7a7a7a;transform:matrix(1.0066,0.0001,0,1,0,0.30);">healio.com</span>
<span class="t" style="left:720.10px;top:442px;font-size:5.4px;color:#1a1a1a;transform:matrix(0.9033,0.0001,0,1,0,0.80);font-weight:700;">BLOG: Navigating complexities of work-life balance</span>
<span class="t" style="left:720.10px;top:450px;font-size:5.3px;color:#808080;transform:matrix(0.9887,0.0001,0,1,0,0.40);">It was a cold Thursday night in November — the night of Thanksgiving 2022.</span>
<span class="t" style="left:720.10px;top:457px;font-size:5.3px;color:#808080;transform:matrix(0.9832,0.0001,0,1,0,0.50);">The driver opened the trunk, put my suitcase in and I got into the car. We wer...</span>
<span class="t" style="left:715.50px;top:474px;font-size:5.2px;color:#7a7a7a;transform:matrix(0.9622,0.0001,0,1,0,0.00);">7:02 PM · Dec 23, 2022 ·</span>
<span class="t" style="left:773.40px;top:474px;font-size:5.2px;color:#1a1a1a;transform:matrix(0.7506,0.0001,0,1,0,0.00);font-weight:700;">11.9K</span>
<span class="t" style="left:785.00px;top:474px;font-size:5.2px;color:#7a7a7a;transform:matrix(0.9581,0.0001,0,1,0,0.00);">Views</span>
<div class="r" style="left:715.5px;top:484.4px;width:193px;height:0.5px;background:#eef0f1;"></div>
<span class="t" style="left:717.10px;top:492px;font-size:5.0px;color:#1a1a1a;transform:matrix(0.8451,0.0001,0,1,0,0.10);font-weight:700;">13</span>
<span class="t" style="left:723.10px;top:492px;font-size:5.0px;color:#7a7a7a;transform:matrix(0.9692,0.0001,0,1,0,0.10);">Retweets</span>
<span class="t" style="left:750.60px;top:492px;font-size:5.0px;color:#1a1a1a;transform:matrix(1.0000,0.0001,0,1,0,0.10);font-weight:700;">4</span>
<span class="t" style="left:755.30px;top:492px;font-size:5.0px;color:#7a7a7a;transform:matrix(0.9688,0.0001,0,1,0,0.10);">Quote Tweets</span>
<span class="t" style="left:792.60px;top:492px;font-size:5.0px;color:#1a1a1a;transform:matrix(0.8990,0.0001,0,1,0,0.10);font-weight:700;">78</span>
<span class="t" style="left:799.20px;top:492px;font-size:5.0px;color:#7a7a7a;transform:matrix(0.9338,0.0001,0,1,0,0.10);">Likes</span>

<span class="t" style="left:5.60px;top:561px;font-size:8.5px;color:#555;transform:matrix(0.8559,0.0001,0,1,0,0.90);">Slide 2 of 6</span>
<svg class="r" style="left:55.5px;top:561.4px;" width="10.4" height="9.4" viewBox="0 0 10.4 9.4"><path d="M5 1.4 Q2.6 0.2 0.5 1 V7.6 Q2.6 6.8 5 8 M5 1.4 V8 M5 1.4 Q7 0.2 9.2 1 V4.4" fill="none" stroke="#5a5a5a" stroke-width="0.8"/><path d="M6.2 5.6 L9.6 9 M9.6 5.6 L6.2 9" stroke="#5a5a5a" stroke-width="0.8"/></svg>
<span class="t" style="left:77.60px;top:561px;font-size:8.5px;color:#555;transform:matrix(0.8549,0.0001,0,1,0,0.90);">English (United Kingdom)</span>
<svg class="r" style="left:171.2px;top:560.8px;" width="10.4" height="10.4" viewBox="0 0 10.4 10.4"><circle cx="5.4" cy="2.2" r="1.5" fill="none" stroke="#5a5a5a" stroke-width="0.8"/><path d="M0.8 3.2 L4 4.6 H6.8 L10 3.2 M4 4.6 V7 L2.4 10 M6.8 4.6 V7 L8.4 10" fill="none" stroke="#5a5a5a" stroke-width="0.8"/><path d="M5.6 7.4 L8.8 10.2 M8.8 7.4 L5.6 10.2" stroke="#5a5a5a" stroke-width="0.7"/></svg>
<span class="t" style="left:183.80px;top:561px;font-size:8.5px;color:#555;transform:matrix(0.8272,0.0001,0,1,0,0.90);">Accessibility: Investigate</span>
<svg class="r" style="left:775.8px;top:560.4px;" width="11" height="10" viewBox="0 0 11 10"><path d="M3.4 2.6 L5.5 0.6 L7.6 2.6" fill="none" stroke="#5a5a5a" stroke-width="0.8"/><path d="M0.4 4.6 H10.6 M0.4 6.8 H10.6 M0.4 9 H10.6" stroke="#5a5a5a" stroke-width="0.8"/></svg>
<span class="t" style="left:788.30px;top:561px;font-size:8.5px;color:#555;transform:matrix(0.8557,0.0001,0,1,0,0.90);">Notes</span>
<div class="r" style="left:821px;top:558.8px;width:27.6px;height:14.2px;background:#d6d6d6;"></div>
<svg class="r" style="left:829.6px;top:561.2px;" width="11" height="8.6" viewBox="0 0 11 8.6"><rect x="0.5" y="0.5" width="10" height="7.6" fill="none" stroke="#4a4a4a" stroke-width="0.9"/><path d="M3.4 0.6 V8 M3.6 2.6 H10.2" stroke="#4a4a4a" stroke-width="0.8"/></svg>
<svg class="r" style="left:857.2px;top:561.2px;" width="11" height="8.6" viewBox="0 0 11 8.6"><g fill="none" stroke="#5a5a5a" stroke-width="0.8"><rect x="0.5" y="0.5" width="3.8" height="3"/><rect x="6.4" y="0.5" width="3.8" height="3"/><rect x="0.5" y="5.2" width="3.8" height="3"/><rect x="6.4" y="5.2" width="3.8" height="3"/></g></svg>
<svg class="r" style="left:884.8px;top:561.2px;" width="11" height="8.6" viewBox="0 0 11 8.6"><g fill="none" stroke="#5a5a5a" stroke-width="0.8"><rect x="0.5" y="0.5" width="4.6" height="7.6"/><rect x="5.1" y="0.5" width="4.6" height="7.6"/><path d="M1.6 2.4 H4 M1.6 4.2 H4 M6.2 2.4 H8.6 M6.2 4.2 H8.6"/></g></svg>
<svg class="r" style="left:913px;top:561px;" width="10" height="9.6" viewBox="0 0 10 9.6"><path d="M0.5 0.5 H9.5 M1.4 0.6 V5.6 H8.6 V0.6 M5 5.6 V8.6 M3 9 H7" fill="none" stroke="#5a5a5a" stroke-width="0.8"/></svg>
<div class="r" style="left:936px;top:565.6px;width:5.6px;height:0.8px;background:#5a5a5a;"></div>
<div class="r" style="left:945.5px;top:565.6px;width:69.4px;height:0.8px;background:#7a7a7a;"></div>
<div class="r" style="left:978px;top:562px;width:2.6px;height:8px;background:#444;"></div>
<div class="r" style="left:1018px;top:565.6px;width:5.4px;height:0.8px;background:#5a5a5a;"></div>
<div class="r" style="left:1020.3px;top:563.3px;width:0.8px;height:5.4px;background:#5a5a5a;"></div>
<span class="t" style="left:1032.30px;top:561px;font-size:8.5px;color:#767676;transform:matrix(0.8053,0.0001,0,1,0,0.90);">97%</span>
<svg class="r" style="left:1054.6px;top:560.6px;" width="11" height="11" viewBox="0 0 11 11"><rect x="3.2" y="3.4" width="4.6" height="4.2" fill="none" stroke="#5a5a5a" stroke-width="0.8"/><path d="M4.2 1.6 L5.5 0.4 L6.8 1.6 M4.2 9.4 L5.5 10.6 L6.8 9.4 M1.6 4.2 L0.4 5.5 L1.6 6.8 M9.4 4.2 L10.6 5.5 L9.4 6.8" fill="none" stroke="#5a5a5a" stroke-width="0.8"/></svg>
<svg class="r" style="left:10.6px;top:581px;" width="12" height="12" viewBox="0 0 12 12"><path d="M0 1.7 L5.3 0.9 V5.7 H0 Z M6 0.8 L12 0 V5.7 H6 Z M0 6.4 H5.3 V11.2 L0 10.4 Z M6 6.4 H12 V12 L6 11.2 Z" fill="#fff"/></svg>
<div class="r" style="left:33.3px;top:573px;width:200.4px;height:28px;background:#f1f1f1;"></div>
<svg class="r" style="left:41.6px;top:579.6px;" width="12" height="12" viewBox="0 0 12 12"><circle cx="7.4" cy="4.6" r="3.8" fill="none" stroke="#3a3a3a" stroke-width="1.1"/><path d="M4.6 7.4 L0.6 11.4" stroke="#3a3a3a" stroke-width="1.2"/></svg>
<span class="t" style="left:61.40px;top:582px;font-size:11.2px;color:#4a4a4a;transform:matrix(0.9152,0.0001,0,1,0,0.00);">Type here to search</span>
<div class="r" style="left:178.4px;top:594.9px;width:55.3px;height:6.1px;background:#e7e1d7;"></div>
<svg class="r" style="left:179.6px;top:576.6px;" width="36" height="19" viewBox="0 0 36 19"><defs><linearGradient id="lps" x1="0" y1="0" x2="0" y2="1"><stop offset="0" stop-color="#a9d3ec"/><stop offset="0.45" stop-color="#e6e4e6"/><stop offset="0.6" stop-color="#8996a2"/><stop offset="1" stop-color="#6e7882"/></linearGradient></defs><path d="M0.7 0.9 L17.6 2.8 L19.4 16.4 L3.5 16.8 Z" fill="url(#lps)" stroke="#4a5058" stroke-width="1.1" stroke-linejoin="round"/><path d="M3.5 16.9 L19.4 16.5 L32.6 17 L18 18.7 Z" fill="#8b9096" stroke="#5a6068" stroke-width="0.5"/></svg>
<svg class="r" style="left:206px;top:575.2px;" width="23" height="19.4" viewBox="0 0 23 19.4"><path d="M6.2 5.2 Q6.2 1 11.4 1 Q16.6 1 16.6 5.2" fill="none" stroke="#d08a5c" stroke-width="1.5"/><rect x="0.4" y="4.4" width="22" height="14.4" rx="1.4" fill="#96391f"/><path d="M0.4 9.6 Q11.4 14.2 22.4 9.6 V5.8 Q22.4 4.4 21 4.4 H1.8 Q0.4 4.4 0.4 5.8 Z" fill="#b4562f"/><path d="M2 6 H21" stroke="#c8754a" stroke-width="0.8" opacity="0.7"/><rect x="9.2" y="10.2" width="4.2" height="3.6" rx="0.6" fill="#efb64a"/><rect x="10.4" y="11.4" width="1.8" height="1.4" fill="#c2502c"/></svg>
<svg class="r" style="left:244.4px;top:581.6px;" width="12" height="10.8" viewBox="0 0 12 10.8"><path d="M0.6 0 V10.6 M6.8 0 V10.6 M0.6 2.6 H6.8 M0.6 8 H6.8" fill="none" stroke="#e8e8e8" stroke-width="1"/><path d="M10.8 0 V3 M10.8 4.4 V10.6" stroke="#e8e8e8" stroke-width="1"/></svg>
<svg class="r" style="left:278.2px;top:579.6px;" width="16" height="14" viewBox="0 0 16 14"><path d="M0.6 1.6 Q0.6 0.6 1.6 0.6 H5.6 L7 2.2 H14.4 Q15.4 2.2 15.4 3.2 V12.4 Q15.4 13.4 14.4 13.4 H1.6 Q0.6 13.4 0.6 12.4 Z" fill="#f6b73c"/><rect x="0.6" y="3.8" width="14.8" height="9.6" rx="0.8" fill="#fbd362"/><rect x="3.2" y="7.4" width="9.6" height="6" fill="#3a96e0"/><rect x="5" y="9.4" width="6" height="4" fill="#8fc9f4"/></svg>
<svg class="r" style="left:311.6px;top:577.8px;" width="17.6" height="17.6" viewBox="0 0 17.6 17.6"><defs><linearGradient id="edg" x1="0" y1="0" x2="1" y2="1"><stop offset="0" stop-color="#35c1a0"/><stop offset="0.5" stop-color="#1b9de2"/><stop offset="1" stop-color="#0c59a4"/></linearGradient></defs><circle cx="8.8" cy="8.8" r="8.4" fill="url(#edg)"/><path d="M2 12 C1 6 6 2.6 10 3.6 C14 4.6 15.6 7.6 15.4 9.6 H8 C7 12 9 14.6 13 14.4 C9 18 3 16.6 2 12 Z" fill="#1668b8" opacity="0.85"/><path d="M8 9.6 C7.6 7.4 9 5.6 11 5.6 C13.6 5.6 15.4 7.6 15.4 9.6 Z" fill="#4fd08a" opacity="0.9"/></svg>
<svg class="r" style="left:346.4px;top:577.8px;" width="17.6" height="17.6" viewBox="0 0 17.6 17.6"><circle cx="8.8" cy="8.8" r="8.4" fill="#e33b2e"/><path d="M8.8 8.8 L1.5 4.6 A8.4 8.4 0 0 0 8.6 17.2 Z" fill="#2da94f"/><path d="M8.8 8.8 L8.6 17.2 A8.4 8.4 0 0 0 16.1 4.6 H8.8 Z" fill="#fdbd00"/><circle cx="8.8" cy="8.8" r="3.9" fill="#fff"/><circle cx="8.8" cy="8.8" r="3.1" fill="#4285f4"/></svg>
<svg class="r" style="left:380.6px;top:578.6px;" width="17.2" height="16" viewBox="0 0 17.2 16"><rect x="5" y="0.6" width="11.6" height="14.8" rx="1" fill="#1a8ae0"/><rect x="5" y="0.6" width="5.8" height="5" fill="#1565b8"/><rect x="10.8" y="5.6" width="5.8" height="5" fill="#3cb2f0"/><rect x="5" y="10.6" width="11.6" height="4.8" fill="#0f5aa8"/><rect x="0.4" y="3.6" width="9.6" height="9.6" rx="1" fill="#0a64c0"/><circle cx="5.2" cy="8.4" r="2.5" fill="none" stroke="#fff" stroke-width="1.3"/></svg>
<svg class="r" style="left:415.6px;top:578.6px;" width="16.8" height="16" viewBox="0 0 16.8 16"><rect x="4.6" y="0.6" width="11.6" height="14.8" rx="1" fill="#2b7cd3"/><rect x="4.6" y="0.6" width="11.6" height="3.8" fill="#41a5ee"/><rect x="4.6" y="8" width="11.6" height="3.8" fill="#185abd"/><rect x="4.6" y="11.6" width="11.6" height="3.8" fill="#103f91"/><rect x="0.4" y="3.6" width="9.6" height="9.6" rx="1" fill="#185abd"/><path d="M2.4 5.8 L3.8 11 L5.2 6.8 L6.6 11 L8 5.8" fill="none" stroke="#fff" stroke-width="1.1"/></svg>
<svg class="r" style="left:450.2px;top:578px;" width="17.6" height="17" viewBox="0 0 17.6 17"><circle cx="11.6" cy="3.6" r="2.8" fill="#7b83eb"/><circle cx="15.6" cy="5" r="1.9" fill="#5059c9"/><rect x="8" y="6.8" width="8.8" height="8" rx="2" fill="#5059c9"/><rect x="0.4" y="4" width="10" height="10" rx="1" fill="#4b53bc"/><path d="M2.8 6.6 H8 M5.4 6.6 V11.8" stroke="#fff" stroke-width="1.3"/><circle cx="14" cy="13.6" r="3.2" fill="#9aa05a"/><path d="M12.6 13.4 L13.7 14.6 L15.4 12.6" stroke="#fff" stroke-width="0.8" fill="none"/></svg>
<div class="r" style="left:475.8px;top:573px;width:34.6px;height:28px;background:#3a474f;"></div>
<svg class="r" style="left:484.4px;top:578px;" width="17.6" height="17.2" viewBox="0 0 17.6 17.2"><circle cx="9.4" cy="8.6" r="8" fill="#ed6c47"/><path d="M9.4 0.6 A8 8 0 0 1 17.4 8.6 H9.4 Z" fill="#ff8f6b"/><path d="M9.4 8.6 H17.4 A8 8 0 0 1 4 14.6 Z" fill="#d35230"/><rect x="0.4" y="4" width="9.6" height="9.6" rx="1" fill="#c43e1c"/><path d="M3.8 11.4 V6.2 H5.8 Q7.4 6.2 7.4 7.8 Q7.4 9.4 5.8 9.4 H3.8" fill="none" stroke="#fff" stroke-width="1.2"/></svg>
<div class="r" style="left:307px;top:599.2px;width:28px;height:1.8px;background:#76b9ed;"></div>
<div class="r" style="left:341.3px;top:599.2px;width:28.19999999999999px;height:1.8px;background:#76b9ed;"></div>
<div class="r" style="left:375.8px;top:599.2px;width:28.19999999999999px;height:1.8px;background:#76b9ed;"></div>
<div class="r" style="left:410.3px;top:599.2px;width:28.5px;height:1.8px;background:#76b9ed;"></div>
<div class="r" style="left:444.5px;top:599.2px;width:28.30000000000001px;height:1.8px;background:#76b9ed;"></div>
<div class="r" style="left:475.8px;top:599.2px;width:34.5px;height:1.8px;background:#76b9ed;"></div>
<svg class="r" style="left:749.8px;top:580.6px;" width="17" height="16.4" viewBox="0 0 17 16.4"><circle cx="7.9" cy="7.9" r="7.2" fill="#1e88e5" stroke="#fff" stroke-width="1.3"/><circle cx="13.6" cy="12" r="3" fill="#f0a020"/><rect x="13.2" y="10.4" width="0.9" height="3.2" fill="#fff"/></svg>
<span class="t" style="left:754.60px;top:583px;font-size:12px;color:#fff;transform:matrix(1.0000,0.0001,0,1,0,0.20);font-weight:700;">?</span>
<svg class="r" style="left:792.6px;top:578px;" width="18" height="17" viewBox="0 0 18 17"><path d="M4.6 12.4 Q0.6 12.4 0.6 9 Q0.6 6 3.8 5.8 Q4.6 2 8.6 2 Q12.4 2 13.4 5.4 Q17.2 5.6 17.2 9 Q17.2 12.4 13.6 12.4 Z" fill="#9cc8ee"/><path d="M4.6 12.4 Q0.6 12.4 0.6 9 Q0.6 6.6 3 6 Q6 8 9 7 Q12 9.6 17 8 Q17.6 12.4 13.6 12.4 Z" fill="#6aa8e0"/><circle cx="13.8" cy="2.2" r="1.9" fill="#e8503a"/><g fill="#d8ecfa"><circle cx="5" cy="14.6" r="0.9"/><circle cx="9" cy="15.4" r="0.9"/><circle cx="13" cy="14.6" r="0.9"/></g></svg>
<span class="t" style="left:815.60px;top:582px;font-size:11px;color:#fff;transform:matrix(0.7692,0.0001,0,1,0,0.00);">1°C</span>
<span class="t" style="left:836.00px;top:582px;font-size:11px;color:#fff;transform:matrix(0.8836,0.0001,0,1,0,0.00);">Rain and snow</span>
<svg class="r" style="left:917.6px;top:584.4px;" width="9.4" height="5.6" viewBox="0 0 9.4 5.6"><path d="M0.5 5 L4.7 0.8 L8.9 5" fill="none" stroke="#fff" stroke-width="1"/></svg>
<svg class="r" style="left:932.6px;top:582.4px;" width="12.4" height="8.4" viewBox="0 0 12.4 8.4"><rect x="1.6" y="1.8" width="10.2" height="5.6" rx="0.6" fill="none" stroke="#fff" stroke-width="0.9"/><rect x="2.8" y="3" width="7.8" height="3.2" fill="#fff"/><rect x="0" y="0" width="3" height="3.4" fill="#fff"/></svg>
<svg class="r" style="left:951px;top:581.6px;" width="9.6" height="9.6" viewBox="0 0 9.6 9.6"><g fill="none" stroke="#fff" stroke-width="0.9"><path d="M0.6 9 A8.4 8.4 0 0 1 9 0.6"/><path d="M3.2 9 A5.8 5.8 0 0 1 9 3.2" opacity="0.9"/><path d="M5.8 9 A3.2 3.2 0 0 1 9 5.8"/></g><circle cx="8.4" cy="8.4" r="1" fill="#fff"/></svg>
<svg class="r" style="left:966px;top:581.6px;" width="12" height="9.6" viewBox="0 0 12 9.6"><path d="M0.6 3.4 H2.6 L5.4 0.8 V8.8 L2.6 6.2 H0.6 Z" fill="none" stroke="#fff" stroke-width="0.9"/><path d="M7 3 Q8.2 4.8 7 6.6 M8.8 1.8 Q10.8 4.8 8.8 7.8 M10.4 0.8 Q13 4.8 10.4 8.8" fill="none" stroke="#fff" stroke-width="0.7" opacity="0.85"/></svg>
<span class="t" style="left:996.00px;top:575px;font-size:9.4px;color:#fff;transform:matrix(0.8332,0.0001,0,1,0,0.60);">09:15</span>
<span class="t" style="left:985.30px;top:588px;font-size:9.4px;color:#fff;transform:matrix(0.8927,0.0001,0,1,0,0.20);">08/03/2023</span>
<svg class="r" style="left:1039.6px;top:581.6px;" width="12" height="11" viewBox="0 0 12 11"><path d="M0.6 0.6 H11.2 V8 H4 L1.8 10.2 V8 H0.6 Z" fill="#f4f4f4" stroke="#fff" stroke-width="1"/><path d="M2.6 2.8 H9.2 M2.6 4.6 H9.2 M2.6 6.2 H6" stroke="#7a848a" stroke-width="0.7"/></svg>
<div class="r" style="left:1044.6px;top:586px;width:12.6px;height:12.6px;border-radius:50%;background:#1a2730;border:0.8px solid #fff;box-sizing:border-box"></div>
<span class="t" style="left:1046.60px;top:589px;font-size:7.6px;color:#fff;transform:matrix(1.0173,0.0001,0,1,0,0.20);">24</span>
<div class="r" style="left:1064.6px;top:573px;width:0.6px;height:28px;background:#3c4850;"></div>
</body></html>
